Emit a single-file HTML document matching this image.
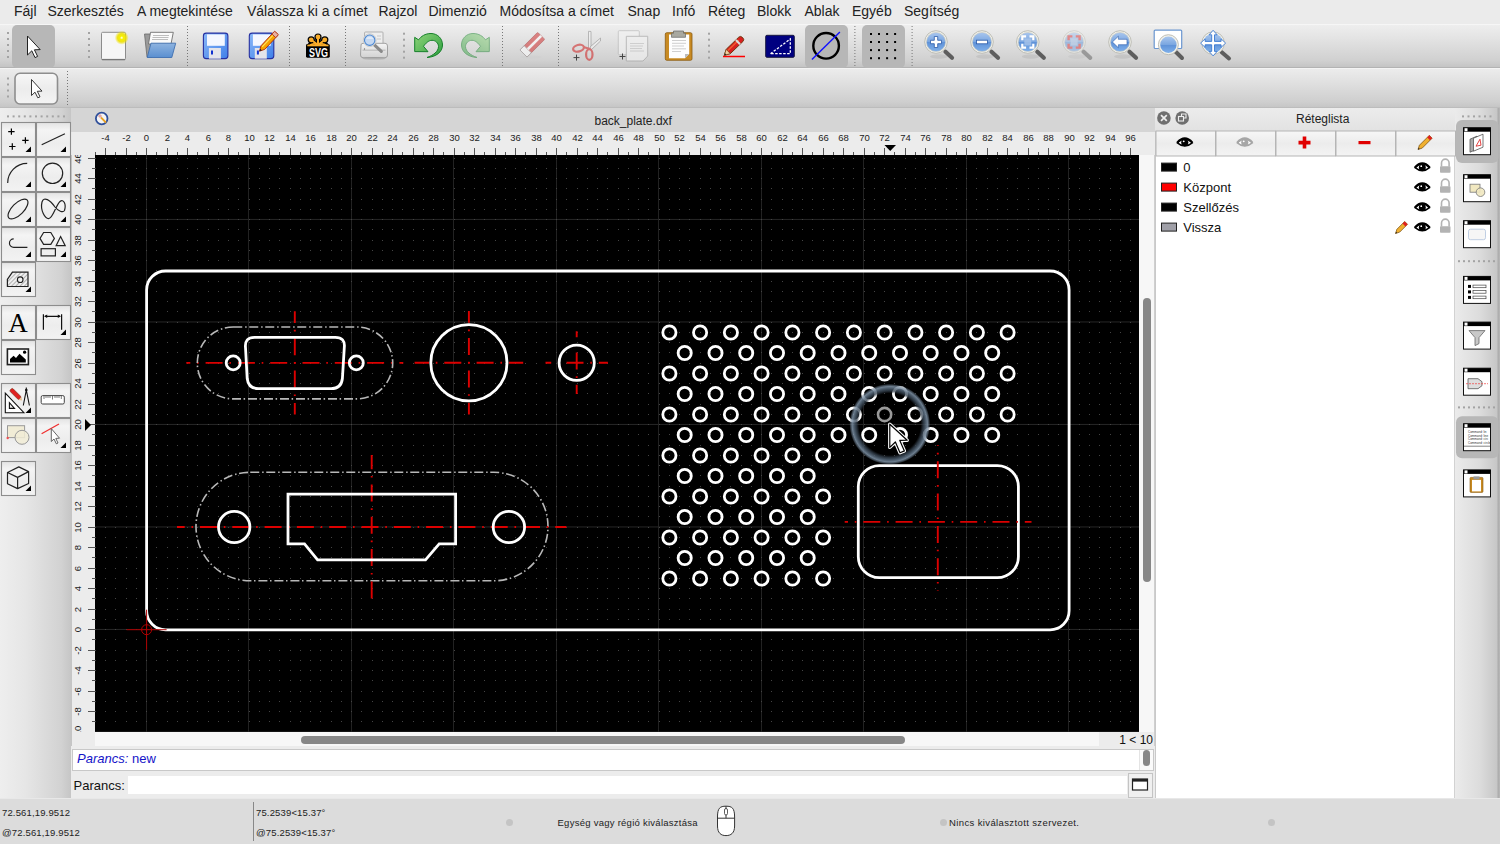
<!DOCTYPE html>
<html><head><meta charset="utf-8"><style>
*{box-sizing:border-box}
body{margin:0;width:1500px;height:844px;overflow:hidden;position:relative;font-family:"Liberation Sans",sans-serif;background:#e6e6e6;color:#222}
.a{position:absolute}
.menu span{position:absolute;top:3px;font-size:14px;color:#222;white-space:pre}
</style></head><body>
<!-- menubar -->
<div class="a menu" style="left:0;top:0;width:1500px;height:24px;background:#ebebeb">
<span style="left:14px">Fájl</span><span style="left:47.5px">Szerkesztés</span><span style="left:137px">A megtekintése</span><span style="left:247px">Válassza ki a címet</span><span style="left:378.5px">Rajzol</span><span style="left:428.5px">Dimenzió</span><span style="left:499.5px">Módosítsa a címet</span><span style="left:627.5px">Snap</span><span style="left:672px">Infó</span><span style="left:708px">Réteg</span><span style="left:757px">Blokk</span><span style="left:804.5px">Ablak</span><span style="left:852px">Egyéb</span><span style="left:904px">Segítség</span>
</div>
<!-- toolbar 1 -->
<div class="a" style="left:0;top:24px;width:1500px;height:44px;background:linear-gradient(#eeeeee,#e4e4e4 30%,#d0d0d0 85%,#c4c4c4);border-top:1px solid #f6f6f6;border-bottom:1px solid #b3b3b3"></div>
<!-- toolbar 2 -->
<div class="a" style="left:0;top:68px;width:1500px;height:40px;background:linear-gradient(#ececec,#e2e2e2 30%,#cfcfcf 85%,#c6c6c6);border-top:1px solid #f4f4f4;border-bottom:1px solid #bcbcbc"></div>
<!-- left dock -->
<div class="a" style="left:0;top:108px;width:72px;height:690px;background:linear-gradient(90deg,#eeeeee,#e6e6e6 35%,#d2d2d2 85%,#c4c4c4)"></div>
<!-- mdi window -->
<div class="a" style="left:71px;top:108px;width:1084px;height:24px;background:#d5d5d5"></div>
<div class="a" style="left:594.5px;top:113.5px;font-size:12px;color:#222">back_plate.dxf</div>
<div class="a" style="left:71px;top:132px;width:1084px;height:23px;background:#ececec"></div>
<div class="a" style="left:72px;top:155px;width:23px;height:591px;background:#ececec"></div>
<div class="a" style="left:1139px;top:155px;width:16px;height:591px;background:#f7f7f7;border-right:1px solid #cfcfcf"></div>
<div class="a" style="left:1142.7px;top:298px;width:8.6px;height:283.5px;background:#878787;border-radius:5px"></div>
<div class="a" style="left:95px;top:732px;width:1044px;height:14px;background:#f7f7f7"></div>
<div class="a" style="left:301px;top:736px;width:604px;height:8px;background:#878787;border-radius:4px"></div>
<div class="a" style="left:1099px;top:732px;width:55px;height:14px;background:#ececec"></div>
<div class="a" style="left:1100px;top:733px;width:53px;font-size:12px;text-align:right;color:#111;line-height:15px">1 &lt; 10</div>
<!-- command widget -->
<div class="a" style="left:71px;top:746px;width:1084px;height:52px;background:#ececec"></div>
<div class="a" style="left:72px;top:749px;width:1082px;height:22px;background:#fff;border:1px solid #c8c8c8"></div>
<div class="a" style="left:77px;top:750px;font-size:13px;color:#1414c8;line-height:17px"><i>Parancs:</i> new</div>
<div class="a" style="left:1139px;top:750px;width:14px;height:20px;background:#fafafa;border-left:1px solid #e4e4e4"></div>
<div class="a" style="left:1142.5px;top:750px;width:7.5px;height:16px;background:#878787;border-radius:4px"></div>
<div class="a" style="left:73.5px;top:778px;font-size:13px;color:#111">Parancs:</div>
<div class="a" style="left:128px;top:776px;width:999px;height:18px;background:#fff"></div>
<div class="a" style="left:1127.5px;top:772.5px;width:25px;height:25px;background:#f0f0f0;border:1px solid #c4c4c4"></div>
<!-- layer dock -->
<div class="a" style="left:1155px;top:108px;width:300px;height:690px;background:#fff;border-left:1px solid #c9c9c9"></div>
<div class="a" style="left:1155px;top:108px;width:300px;height:23px;background:linear-gradient(#ececec,#e2e2e2)"></div>
<div class="a" style="left:1296px;top:112px;font-size:12px;color:#222">Réteglista</div>
<!-- right toolbar -->
<div class="a" style="left:1455px;top:108px;width:45px;height:690px;background:linear-gradient(90deg,#ebebeb,#dcdcdc 55%,#c6c6c6 94%,#a9a9a9 95%,#b8b8b8)"></div><div class="a" style="left:1454px;top:131px;width:1px;height:667px;background:#d2d2d2"></div>
<!-- status bar -->
<div class="a" style="left:0;top:798px;width:1500px;height:46px;background:#dcdcdc;border-top:1px solid #e8e8e8"></div>
<div class="a" style="left:2px;top:807px;font-size:9.5px;letter-spacing:0.15px;color:#222">72.561,19.9512</div>
<div class="a" style="left:2px;top:827px;font-size:9.5px;letter-spacing:0.15px;color:#222">@72.561,19.9512</div>
<div class="a" style="left:253px;top:802px;width:1px;height:39px;background:#888"></div>
<div class="a" style="left:256px;top:807px;font-size:9.5px;letter-spacing:0.15px;color:#222">75.2539&lt;15.37°</div>
<div class="a" style="left:256px;top:827px;font-size:9.5px;letter-spacing:0.15px;color:#222">@75.2539&lt;15.37°</div>
<div class="a" style="left:557.5px;top:817px;font-size:9.5px;color:#222;letter-spacing:0.26px">Egység vagy régió kiválasztása</div>
<div class="a" style="left:949px;top:817px;font-size:9.5px;color:#222;letter-spacing:0.38px">Nincs kiválasztott szervezet.</div>
<div class="a" style="left:506px;top:819px;width:7px;height:7px;border-radius:50%;background:#c4c4c4"></div>
<div class="a" style="left:940px;top:819px;width:7px;height:7px;border-radius:50%;background:#c4c4c4"></div>
<div class="a" style="left:1268px;top:819px;width:7px;height:7px;border-radius:50%;background:#c4c4c4"></div>
<svg class="a" style="left:0;top:0" width="1500" height="844" viewBox="0 0 1500 844"><defs><clipPath id="cc"><rect x="95" y="155" width="1044" height="577"/></clipPath><radialGradient id="hl" cx="0.5" cy="0.5" r="0.5"><stop offset="0.76" stop-color="#2a3440" stop-opacity="0"/><stop offset="0.82" stop-color="#34414e" stop-opacity="0.75"/><stop offset="0.88" stop-color="#56687a" stop-opacity="0.85"/><stop offset="0.93" stop-color="#8094a8" stop-opacity="0.85"/><stop offset="0.97" stop-color="#6a7c8e" stop-opacity="0.5"/><stop offset="1" stop-color="#4a5a6a" stop-opacity="0"/></radialGradient></defs><g clip-path="url(#cc)"><rect x="95" y="155" width="1044" height="577" fill="#000"/><rect x="146" y="155" width="1" height="577" fill="#222"/><rect x="248" y="155" width="1" height="577" fill="#222"/><rect x="351" y="155" width="1" height="577" fill="#222"/><rect x="453" y="155" width="1" height="577" fill="#222"/><rect x="556" y="155" width="1" height="577" fill="#222"/><rect x="658" y="155" width="1" height="577" fill="#222"/><rect x="761" y="155" width="1" height="577" fill="#222"/><rect x="863" y="155" width="1" height="577" fill="#222"/><rect x="966" y="155" width="1" height="577" fill="#222"/><rect x="1068" y="155" width="1" height="577" fill="#222"/><rect x="95" y="731.45" width="1044" height="1" fill="#262626"/><rect x="95" y="628.95" width="1044" height="1" fill="#262626"/><rect x="95" y="526.45" width="1044" height="1" fill="#262626"/><rect x="95" y="423.95" width="1044" height="1" fill="#262626"/><rect x="95" y="321.45" width="1044" height="1" fill="#262626"/><rect x="95" y="218.95" width="1044" height="1" fill="#262626"/><path d="M95 721h1v1h-1zM95 711h1v1h-1zM95 701h1v1h-1zM95 691h1v1h-1zM95 680h1v1h-1zM95 670h1v1h-1zM95 660h1v1h-1zM95 650h1v1h-1zM95 639h1v1h-1zM95 629h1v1h-1zM95 619h1v1h-1zM95 609h1v1h-1zM95 598h1v1h-1zM95 588h1v1h-1zM95 578h1v1h-1zM95 568h1v1h-1zM95 557h1v1h-1zM95 547h1v1h-1zM95 537h1v1h-1zM95 527h1v1h-1zM95 516h1v1h-1zM95 506h1v1h-1zM95 496h1v1h-1zM95 486h1v1h-1zM95 475h1v1h-1zM95 465h1v1h-1zM95 455h1v1h-1zM95 445h1v1h-1zM95 434h1v1h-1zM95 424h1v1h-1zM95 414h1v1h-1zM95 404h1v1h-1zM95 393h1v1h-1zM95 383h1v1h-1zM95 373h1v1h-1zM95 363h1v1h-1zM95 352h1v1h-1zM95 342h1v1h-1zM95 332h1v1h-1zM95 322h1v1h-1zM95 311h1v1h-1zM95 301h1v1h-1zM95 291h1v1h-1zM95 281h1v1h-1zM95 270h1v1h-1zM95 260h1v1h-1zM95 250h1v1h-1zM95 240h1v1h-1zM95 229h1v1h-1zM95 219h1v1h-1zM95 209h1v1h-1zM95 199h1v1h-1zM95 188h1v1h-1zM95 178h1v1h-1zM95 168h1v1h-1zM95 158h1v1h-1zM105 721h1v1h-1zM105 711h1v1h-1zM105 701h1v1h-1zM105 691h1v1h-1zM105 680h1v1h-1zM105 670h1v1h-1zM105 660h1v1h-1zM105 650h1v1h-1zM105 639h1v1h-1zM105 629h1v1h-1zM105 619h1v1h-1zM105 609h1v1h-1zM105 598h1v1h-1zM105 588h1v1h-1zM105 578h1v1h-1zM105 568h1v1h-1zM105 557h1v1h-1zM105 547h1v1h-1zM105 537h1v1h-1zM105 527h1v1h-1zM105 516h1v1h-1zM105 506h1v1h-1zM105 496h1v1h-1zM105 486h1v1h-1zM105 475h1v1h-1zM105 465h1v1h-1zM105 455h1v1h-1zM105 445h1v1h-1zM105 434h1v1h-1zM105 424h1v1h-1zM105 414h1v1h-1zM105 404h1v1h-1zM105 393h1v1h-1zM105 383h1v1h-1zM105 373h1v1h-1zM105 363h1v1h-1zM105 352h1v1h-1zM105 342h1v1h-1zM105 332h1v1h-1zM105 322h1v1h-1zM105 311h1v1h-1zM105 301h1v1h-1zM105 291h1v1h-1zM105 281h1v1h-1zM105 270h1v1h-1zM105 260h1v1h-1zM105 250h1v1h-1zM105 240h1v1h-1zM105 229h1v1h-1zM105 219h1v1h-1zM105 209h1v1h-1zM105 199h1v1h-1zM105 188h1v1h-1zM105 178h1v1h-1zM105 168h1v1h-1zM105 158h1v1h-1zM115 721h1v1h-1zM115 711h1v1h-1zM115 701h1v1h-1zM115 691h1v1h-1zM115 680h1v1h-1zM115 670h1v1h-1zM115 660h1v1h-1zM115 650h1v1h-1zM115 639h1v1h-1zM115 629h1v1h-1zM115 619h1v1h-1zM115 609h1v1h-1zM115 598h1v1h-1zM115 588h1v1h-1zM115 578h1v1h-1zM115 568h1v1h-1zM115 557h1v1h-1zM115 547h1v1h-1zM115 537h1v1h-1zM115 527h1v1h-1zM115 516h1v1h-1zM115 506h1v1h-1zM115 496h1v1h-1zM115 486h1v1h-1zM115 475h1v1h-1zM115 465h1v1h-1zM115 455h1v1h-1zM115 445h1v1h-1zM115 434h1v1h-1zM115 424h1v1h-1zM115 414h1v1h-1zM115 404h1v1h-1zM115 393h1v1h-1zM115 383h1v1h-1zM115 373h1v1h-1zM115 363h1v1h-1zM115 352h1v1h-1zM115 342h1v1h-1zM115 332h1v1h-1zM115 322h1v1h-1zM115 311h1v1h-1zM115 301h1v1h-1zM115 291h1v1h-1zM115 281h1v1h-1zM115 270h1v1h-1zM115 260h1v1h-1zM115 250h1v1h-1zM115 240h1v1h-1zM115 229h1v1h-1zM115 219h1v1h-1zM115 209h1v1h-1zM115 199h1v1h-1zM115 188h1v1h-1zM115 178h1v1h-1zM115 168h1v1h-1zM115 158h1v1h-1zM126 721h1v1h-1zM126 711h1v1h-1zM126 701h1v1h-1zM126 691h1v1h-1zM126 680h1v1h-1zM126 670h1v1h-1zM126 660h1v1h-1zM126 650h1v1h-1zM126 639h1v1h-1zM126 629h1v1h-1zM126 619h1v1h-1zM126 609h1v1h-1zM126 598h1v1h-1zM126 588h1v1h-1zM126 578h1v1h-1zM126 568h1v1h-1zM126 557h1v1h-1zM126 547h1v1h-1zM126 537h1v1h-1zM126 527h1v1h-1zM126 516h1v1h-1zM126 506h1v1h-1zM126 496h1v1h-1zM126 486h1v1h-1zM126 475h1v1h-1zM126 465h1v1h-1zM126 455h1v1h-1zM126 445h1v1h-1zM126 434h1v1h-1zM126 424h1v1h-1zM126 414h1v1h-1zM126 404h1v1h-1zM126 393h1v1h-1zM126 383h1v1h-1zM126 373h1v1h-1zM126 363h1v1h-1zM126 352h1v1h-1zM126 342h1v1h-1zM126 332h1v1h-1zM126 322h1v1h-1zM126 311h1v1h-1zM126 301h1v1h-1zM126 291h1v1h-1zM126 281h1v1h-1zM126 270h1v1h-1zM126 260h1v1h-1zM126 250h1v1h-1zM126 240h1v1h-1zM126 229h1v1h-1zM126 219h1v1h-1zM126 209h1v1h-1zM126 199h1v1h-1zM126 188h1v1h-1zM126 178h1v1h-1zM126 168h1v1h-1zM126 158h1v1h-1zM136 721h1v1h-1zM136 711h1v1h-1zM136 701h1v1h-1zM136 691h1v1h-1zM136 680h1v1h-1zM136 670h1v1h-1zM136 660h1v1h-1zM136 650h1v1h-1zM136 639h1v1h-1zM136 629h1v1h-1zM136 619h1v1h-1zM136 609h1v1h-1zM136 598h1v1h-1zM136 588h1v1h-1zM136 578h1v1h-1zM136 568h1v1h-1zM136 557h1v1h-1zM136 547h1v1h-1zM136 537h1v1h-1zM136 527h1v1h-1zM136 516h1v1h-1zM136 506h1v1h-1zM136 496h1v1h-1zM136 486h1v1h-1zM136 475h1v1h-1zM136 465h1v1h-1zM136 455h1v1h-1zM136 445h1v1h-1zM136 434h1v1h-1zM136 424h1v1h-1zM136 414h1v1h-1zM136 404h1v1h-1zM136 393h1v1h-1zM136 383h1v1h-1zM136 373h1v1h-1zM136 363h1v1h-1zM136 352h1v1h-1zM136 342h1v1h-1zM136 332h1v1h-1zM136 322h1v1h-1zM136 311h1v1h-1zM136 301h1v1h-1zM136 291h1v1h-1zM136 281h1v1h-1zM136 270h1v1h-1zM136 260h1v1h-1zM136 250h1v1h-1zM136 240h1v1h-1zM136 229h1v1h-1zM136 219h1v1h-1zM136 209h1v1h-1zM136 199h1v1h-1zM136 188h1v1h-1zM136 178h1v1h-1zM136 168h1v1h-1zM136 158h1v1h-1zM146 721h1v1h-1zM146 711h1v1h-1zM146 701h1v1h-1zM146 691h1v1h-1zM146 680h1v1h-1zM146 670h1v1h-1zM146 660h1v1h-1zM146 650h1v1h-1zM146 639h1v1h-1zM146 629h1v1h-1zM146 619h1v1h-1zM146 609h1v1h-1zM146 598h1v1h-1zM146 588h1v1h-1zM146 578h1v1h-1zM146 568h1v1h-1zM146 557h1v1h-1zM146 547h1v1h-1zM146 537h1v1h-1zM146 527h1v1h-1zM146 516h1v1h-1zM146 506h1v1h-1zM146 496h1v1h-1zM146 486h1v1h-1zM146 475h1v1h-1zM146 465h1v1h-1zM146 455h1v1h-1zM146 445h1v1h-1zM146 434h1v1h-1zM146 424h1v1h-1zM146 414h1v1h-1zM146 404h1v1h-1zM146 393h1v1h-1zM146 383h1v1h-1zM146 373h1v1h-1zM146 363h1v1h-1zM146 352h1v1h-1zM146 342h1v1h-1zM146 332h1v1h-1zM146 322h1v1h-1zM146 311h1v1h-1zM146 301h1v1h-1zM146 291h1v1h-1zM146 281h1v1h-1zM146 270h1v1h-1zM146 260h1v1h-1zM146 250h1v1h-1zM146 240h1v1h-1zM146 229h1v1h-1zM146 219h1v1h-1zM146 209h1v1h-1zM146 199h1v1h-1zM146 188h1v1h-1zM146 178h1v1h-1zM146 168h1v1h-1zM146 158h1v1h-1zM156 721h1v1h-1zM156 711h1v1h-1zM156 701h1v1h-1zM156 691h1v1h-1zM156 680h1v1h-1zM156 670h1v1h-1zM156 660h1v1h-1zM156 650h1v1h-1zM156 639h1v1h-1zM156 629h1v1h-1zM156 619h1v1h-1zM156 609h1v1h-1zM156 598h1v1h-1zM156 588h1v1h-1zM156 578h1v1h-1zM156 568h1v1h-1zM156 557h1v1h-1zM156 547h1v1h-1zM156 537h1v1h-1zM156 527h1v1h-1zM156 516h1v1h-1zM156 506h1v1h-1zM156 496h1v1h-1zM156 486h1v1h-1zM156 475h1v1h-1zM156 465h1v1h-1zM156 455h1v1h-1zM156 445h1v1h-1zM156 434h1v1h-1zM156 424h1v1h-1zM156 414h1v1h-1zM156 404h1v1h-1zM156 393h1v1h-1zM156 383h1v1h-1zM156 373h1v1h-1zM156 363h1v1h-1zM156 352h1v1h-1zM156 342h1v1h-1zM156 332h1v1h-1zM156 322h1v1h-1zM156 311h1v1h-1zM156 301h1v1h-1zM156 291h1v1h-1zM156 281h1v1h-1zM156 270h1v1h-1zM156 260h1v1h-1zM156 250h1v1h-1zM156 240h1v1h-1zM156 229h1v1h-1zM156 219h1v1h-1zM156 209h1v1h-1zM156 199h1v1h-1zM156 188h1v1h-1zM156 178h1v1h-1zM156 168h1v1h-1zM156 158h1v1h-1zM167 721h1v1h-1zM167 711h1v1h-1zM167 701h1v1h-1zM167 691h1v1h-1zM167 680h1v1h-1zM167 670h1v1h-1zM167 660h1v1h-1zM167 650h1v1h-1zM167 639h1v1h-1zM167 629h1v1h-1zM167 619h1v1h-1zM167 609h1v1h-1zM167 598h1v1h-1zM167 588h1v1h-1zM167 578h1v1h-1zM167 568h1v1h-1zM167 557h1v1h-1zM167 547h1v1h-1zM167 537h1v1h-1zM167 527h1v1h-1zM167 516h1v1h-1zM167 506h1v1h-1zM167 496h1v1h-1zM167 486h1v1h-1zM167 475h1v1h-1zM167 465h1v1h-1zM167 455h1v1h-1zM167 445h1v1h-1zM167 434h1v1h-1zM167 424h1v1h-1zM167 414h1v1h-1zM167 404h1v1h-1zM167 393h1v1h-1zM167 383h1v1h-1zM167 373h1v1h-1zM167 363h1v1h-1zM167 352h1v1h-1zM167 342h1v1h-1zM167 332h1v1h-1zM167 322h1v1h-1zM167 311h1v1h-1zM167 301h1v1h-1zM167 291h1v1h-1zM167 281h1v1h-1zM167 270h1v1h-1zM167 260h1v1h-1zM167 250h1v1h-1zM167 240h1v1h-1zM167 229h1v1h-1zM167 219h1v1h-1zM167 209h1v1h-1zM167 199h1v1h-1zM167 188h1v1h-1zM167 178h1v1h-1zM167 168h1v1h-1zM167 158h1v1h-1zM177 721h1v1h-1zM177 711h1v1h-1zM177 701h1v1h-1zM177 691h1v1h-1zM177 680h1v1h-1zM177 670h1v1h-1zM177 660h1v1h-1zM177 650h1v1h-1zM177 639h1v1h-1zM177 629h1v1h-1zM177 619h1v1h-1zM177 609h1v1h-1zM177 598h1v1h-1zM177 588h1v1h-1zM177 578h1v1h-1zM177 568h1v1h-1zM177 557h1v1h-1zM177 547h1v1h-1zM177 537h1v1h-1zM177 527h1v1h-1zM177 516h1v1h-1zM177 506h1v1h-1zM177 496h1v1h-1zM177 486h1v1h-1zM177 475h1v1h-1zM177 465h1v1h-1zM177 455h1v1h-1zM177 445h1v1h-1zM177 434h1v1h-1zM177 424h1v1h-1zM177 414h1v1h-1zM177 404h1v1h-1zM177 393h1v1h-1zM177 383h1v1h-1zM177 373h1v1h-1zM177 363h1v1h-1zM177 352h1v1h-1zM177 342h1v1h-1zM177 332h1v1h-1zM177 322h1v1h-1zM177 311h1v1h-1zM177 301h1v1h-1zM177 291h1v1h-1zM177 281h1v1h-1zM177 270h1v1h-1zM177 260h1v1h-1zM177 250h1v1h-1zM177 240h1v1h-1zM177 229h1v1h-1zM177 219h1v1h-1zM177 209h1v1h-1zM177 199h1v1h-1zM177 188h1v1h-1zM177 178h1v1h-1zM177 168h1v1h-1zM177 158h1v1h-1zM187 721h1v1h-1zM187 711h1v1h-1zM187 701h1v1h-1zM187 691h1v1h-1zM187 680h1v1h-1zM187 670h1v1h-1zM187 660h1v1h-1zM187 650h1v1h-1zM187 639h1v1h-1zM187 629h1v1h-1zM187 619h1v1h-1zM187 609h1v1h-1zM187 598h1v1h-1zM187 588h1v1h-1zM187 578h1v1h-1zM187 568h1v1h-1zM187 557h1v1h-1zM187 547h1v1h-1zM187 537h1v1h-1zM187 527h1v1h-1zM187 516h1v1h-1zM187 506h1v1h-1zM187 496h1v1h-1zM187 486h1v1h-1zM187 475h1v1h-1zM187 465h1v1h-1zM187 455h1v1h-1zM187 445h1v1h-1zM187 434h1v1h-1zM187 424h1v1h-1zM187 414h1v1h-1zM187 404h1v1h-1zM187 393h1v1h-1zM187 383h1v1h-1zM187 373h1v1h-1zM187 363h1v1h-1zM187 352h1v1h-1zM187 342h1v1h-1zM187 332h1v1h-1zM187 322h1v1h-1zM187 311h1v1h-1zM187 301h1v1h-1zM187 291h1v1h-1zM187 281h1v1h-1zM187 270h1v1h-1zM187 260h1v1h-1zM187 250h1v1h-1zM187 240h1v1h-1zM187 229h1v1h-1zM187 219h1v1h-1zM187 209h1v1h-1zM187 199h1v1h-1zM187 188h1v1h-1zM187 178h1v1h-1zM187 168h1v1h-1zM187 158h1v1h-1zM197 721h1v1h-1zM197 711h1v1h-1zM197 701h1v1h-1zM197 691h1v1h-1zM197 680h1v1h-1zM197 670h1v1h-1zM197 660h1v1h-1zM197 650h1v1h-1zM197 639h1v1h-1zM197 629h1v1h-1zM197 619h1v1h-1zM197 609h1v1h-1zM197 598h1v1h-1zM197 588h1v1h-1zM197 578h1v1h-1zM197 568h1v1h-1zM197 557h1v1h-1zM197 547h1v1h-1zM197 537h1v1h-1zM197 527h1v1h-1zM197 516h1v1h-1zM197 506h1v1h-1zM197 496h1v1h-1zM197 486h1v1h-1zM197 475h1v1h-1zM197 465h1v1h-1zM197 455h1v1h-1zM197 445h1v1h-1zM197 434h1v1h-1zM197 424h1v1h-1zM197 414h1v1h-1zM197 404h1v1h-1zM197 393h1v1h-1zM197 383h1v1h-1zM197 373h1v1h-1zM197 363h1v1h-1zM197 352h1v1h-1zM197 342h1v1h-1zM197 332h1v1h-1zM197 322h1v1h-1zM197 311h1v1h-1zM197 301h1v1h-1zM197 291h1v1h-1zM197 281h1v1h-1zM197 270h1v1h-1zM197 260h1v1h-1zM197 250h1v1h-1zM197 240h1v1h-1zM197 229h1v1h-1zM197 219h1v1h-1zM197 209h1v1h-1zM197 199h1v1h-1zM197 188h1v1h-1zM197 178h1v1h-1zM197 168h1v1h-1zM197 158h1v1h-1zM208 721h1v1h-1zM208 711h1v1h-1zM208 701h1v1h-1zM208 691h1v1h-1zM208 680h1v1h-1zM208 670h1v1h-1zM208 660h1v1h-1zM208 650h1v1h-1zM208 639h1v1h-1zM208 629h1v1h-1zM208 619h1v1h-1zM208 609h1v1h-1zM208 598h1v1h-1zM208 588h1v1h-1zM208 578h1v1h-1zM208 568h1v1h-1zM208 557h1v1h-1zM208 547h1v1h-1zM208 537h1v1h-1zM208 527h1v1h-1zM208 516h1v1h-1zM208 506h1v1h-1zM208 496h1v1h-1zM208 486h1v1h-1zM208 475h1v1h-1zM208 465h1v1h-1zM208 455h1v1h-1zM208 445h1v1h-1zM208 434h1v1h-1zM208 424h1v1h-1zM208 414h1v1h-1zM208 404h1v1h-1zM208 393h1v1h-1zM208 383h1v1h-1zM208 373h1v1h-1zM208 363h1v1h-1zM208 352h1v1h-1zM208 342h1v1h-1zM208 332h1v1h-1zM208 322h1v1h-1zM208 311h1v1h-1zM208 301h1v1h-1zM208 291h1v1h-1zM208 281h1v1h-1zM208 270h1v1h-1zM208 260h1v1h-1zM208 250h1v1h-1zM208 240h1v1h-1zM208 229h1v1h-1zM208 219h1v1h-1zM208 209h1v1h-1zM208 199h1v1h-1zM208 188h1v1h-1zM208 178h1v1h-1zM208 168h1v1h-1zM208 158h1v1h-1zM218 721h1v1h-1zM218 711h1v1h-1zM218 701h1v1h-1zM218 691h1v1h-1zM218 680h1v1h-1zM218 670h1v1h-1zM218 660h1v1h-1zM218 650h1v1h-1zM218 639h1v1h-1zM218 629h1v1h-1zM218 619h1v1h-1zM218 609h1v1h-1zM218 598h1v1h-1zM218 588h1v1h-1zM218 578h1v1h-1zM218 568h1v1h-1zM218 557h1v1h-1zM218 547h1v1h-1zM218 537h1v1h-1zM218 527h1v1h-1zM218 516h1v1h-1zM218 506h1v1h-1zM218 496h1v1h-1zM218 486h1v1h-1zM218 475h1v1h-1zM218 465h1v1h-1zM218 455h1v1h-1zM218 445h1v1h-1zM218 434h1v1h-1zM218 424h1v1h-1zM218 414h1v1h-1zM218 404h1v1h-1zM218 393h1v1h-1zM218 383h1v1h-1zM218 373h1v1h-1zM218 363h1v1h-1zM218 352h1v1h-1zM218 342h1v1h-1zM218 332h1v1h-1zM218 322h1v1h-1zM218 311h1v1h-1zM218 301h1v1h-1zM218 291h1v1h-1zM218 281h1v1h-1zM218 270h1v1h-1zM218 260h1v1h-1zM218 250h1v1h-1zM218 240h1v1h-1zM218 229h1v1h-1zM218 219h1v1h-1zM218 209h1v1h-1zM218 199h1v1h-1zM218 188h1v1h-1zM218 178h1v1h-1zM218 168h1v1h-1zM218 158h1v1h-1zM228 721h1v1h-1zM228 711h1v1h-1zM228 701h1v1h-1zM228 691h1v1h-1zM228 680h1v1h-1zM228 670h1v1h-1zM228 660h1v1h-1zM228 650h1v1h-1zM228 639h1v1h-1zM228 629h1v1h-1zM228 619h1v1h-1zM228 609h1v1h-1zM228 598h1v1h-1zM228 588h1v1h-1zM228 578h1v1h-1zM228 568h1v1h-1zM228 557h1v1h-1zM228 547h1v1h-1zM228 537h1v1h-1zM228 527h1v1h-1zM228 516h1v1h-1zM228 506h1v1h-1zM228 496h1v1h-1zM228 486h1v1h-1zM228 475h1v1h-1zM228 465h1v1h-1zM228 455h1v1h-1zM228 445h1v1h-1zM228 434h1v1h-1zM228 424h1v1h-1zM228 414h1v1h-1zM228 404h1v1h-1zM228 393h1v1h-1zM228 383h1v1h-1zM228 373h1v1h-1zM228 363h1v1h-1zM228 352h1v1h-1zM228 342h1v1h-1zM228 332h1v1h-1zM228 322h1v1h-1zM228 311h1v1h-1zM228 301h1v1h-1zM228 291h1v1h-1zM228 281h1v1h-1zM228 270h1v1h-1zM228 260h1v1h-1zM228 250h1v1h-1zM228 240h1v1h-1zM228 229h1v1h-1zM228 219h1v1h-1zM228 209h1v1h-1zM228 199h1v1h-1zM228 188h1v1h-1zM228 178h1v1h-1zM228 168h1v1h-1zM228 158h1v1h-1zM238 721h1v1h-1zM238 711h1v1h-1zM238 701h1v1h-1zM238 691h1v1h-1zM238 680h1v1h-1zM238 670h1v1h-1zM238 660h1v1h-1zM238 650h1v1h-1zM238 639h1v1h-1zM238 629h1v1h-1zM238 619h1v1h-1zM238 609h1v1h-1zM238 598h1v1h-1zM238 588h1v1h-1zM238 578h1v1h-1zM238 568h1v1h-1zM238 557h1v1h-1zM238 547h1v1h-1zM238 537h1v1h-1zM238 527h1v1h-1zM238 516h1v1h-1zM238 506h1v1h-1zM238 496h1v1h-1zM238 486h1v1h-1zM238 475h1v1h-1zM238 465h1v1h-1zM238 455h1v1h-1zM238 445h1v1h-1zM238 434h1v1h-1zM238 424h1v1h-1zM238 414h1v1h-1zM238 404h1v1h-1zM238 393h1v1h-1zM238 383h1v1h-1zM238 373h1v1h-1zM238 363h1v1h-1zM238 352h1v1h-1zM238 342h1v1h-1zM238 332h1v1h-1zM238 322h1v1h-1zM238 311h1v1h-1zM238 301h1v1h-1zM238 291h1v1h-1zM238 281h1v1h-1zM238 270h1v1h-1zM238 260h1v1h-1zM238 250h1v1h-1zM238 240h1v1h-1zM238 229h1v1h-1zM238 219h1v1h-1zM238 209h1v1h-1zM238 199h1v1h-1zM238 188h1v1h-1zM238 178h1v1h-1zM238 168h1v1h-1zM238 158h1v1h-1zM249 721h1v1h-1zM249 711h1v1h-1zM249 701h1v1h-1zM249 691h1v1h-1zM249 680h1v1h-1zM249 670h1v1h-1zM249 660h1v1h-1zM249 650h1v1h-1zM249 639h1v1h-1zM249 629h1v1h-1zM249 619h1v1h-1zM249 609h1v1h-1zM249 598h1v1h-1zM249 588h1v1h-1zM249 578h1v1h-1zM249 568h1v1h-1zM249 557h1v1h-1zM249 547h1v1h-1zM249 537h1v1h-1zM249 527h1v1h-1zM249 516h1v1h-1zM249 506h1v1h-1zM249 496h1v1h-1zM249 486h1v1h-1zM249 475h1v1h-1zM249 465h1v1h-1zM249 455h1v1h-1zM249 445h1v1h-1zM249 434h1v1h-1zM249 424h1v1h-1zM249 414h1v1h-1zM249 404h1v1h-1zM249 393h1v1h-1zM249 383h1v1h-1zM249 373h1v1h-1zM249 363h1v1h-1zM249 352h1v1h-1zM249 342h1v1h-1zM249 332h1v1h-1zM249 322h1v1h-1zM249 311h1v1h-1zM249 301h1v1h-1zM249 291h1v1h-1zM249 281h1v1h-1zM249 270h1v1h-1zM249 260h1v1h-1zM249 250h1v1h-1zM249 240h1v1h-1zM249 229h1v1h-1zM249 219h1v1h-1zM249 209h1v1h-1zM249 199h1v1h-1zM249 188h1v1h-1zM249 178h1v1h-1zM249 168h1v1h-1zM249 158h1v1h-1zM259 721h1v1h-1zM259 711h1v1h-1zM259 701h1v1h-1zM259 691h1v1h-1zM259 680h1v1h-1zM259 670h1v1h-1zM259 660h1v1h-1zM259 650h1v1h-1zM259 639h1v1h-1zM259 629h1v1h-1zM259 619h1v1h-1zM259 609h1v1h-1zM259 598h1v1h-1zM259 588h1v1h-1zM259 578h1v1h-1zM259 568h1v1h-1zM259 557h1v1h-1zM259 547h1v1h-1zM259 537h1v1h-1zM259 527h1v1h-1zM259 516h1v1h-1zM259 506h1v1h-1zM259 496h1v1h-1zM259 486h1v1h-1zM259 475h1v1h-1zM259 465h1v1h-1zM259 455h1v1h-1zM259 445h1v1h-1zM259 434h1v1h-1zM259 424h1v1h-1zM259 414h1v1h-1zM259 404h1v1h-1zM259 393h1v1h-1zM259 383h1v1h-1zM259 373h1v1h-1zM259 363h1v1h-1zM259 352h1v1h-1zM259 342h1v1h-1zM259 332h1v1h-1zM259 322h1v1h-1zM259 311h1v1h-1zM259 301h1v1h-1zM259 291h1v1h-1zM259 281h1v1h-1zM259 270h1v1h-1zM259 260h1v1h-1zM259 250h1v1h-1zM259 240h1v1h-1zM259 229h1v1h-1zM259 219h1v1h-1zM259 209h1v1h-1zM259 199h1v1h-1zM259 188h1v1h-1zM259 178h1v1h-1zM259 168h1v1h-1zM259 158h1v1h-1zM269 721h1v1h-1zM269 711h1v1h-1zM269 701h1v1h-1zM269 691h1v1h-1zM269 680h1v1h-1zM269 670h1v1h-1zM269 660h1v1h-1zM269 650h1v1h-1zM269 639h1v1h-1zM269 629h1v1h-1zM269 619h1v1h-1zM269 609h1v1h-1zM269 598h1v1h-1zM269 588h1v1h-1zM269 578h1v1h-1zM269 568h1v1h-1zM269 557h1v1h-1zM269 547h1v1h-1zM269 537h1v1h-1zM269 527h1v1h-1zM269 516h1v1h-1zM269 506h1v1h-1zM269 496h1v1h-1zM269 486h1v1h-1zM269 475h1v1h-1zM269 465h1v1h-1zM269 455h1v1h-1zM269 445h1v1h-1zM269 434h1v1h-1zM269 424h1v1h-1zM269 414h1v1h-1zM269 404h1v1h-1zM269 393h1v1h-1zM269 383h1v1h-1zM269 373h1v1h-1zM269 363h1v1h-1zM269 352h1v1h-1zM269 342h1v1h-1zM269 332h1v1h-1zM269 322h1v1h-1zM269 311h1v1h-1zM269 301h1v1h-1zM269 291h1v1h-1zM269 281h1v1h-1zM269 270h1v1h-1zM269 260h1v1h-1zM269 250h1v1h-1zM269 240h1v1h-1zM269 229h1v1h-1zM269 219h1v1h-1zM269 209h1v1h-1zM269 199h1v1h-1zM269 188h1v1h-1zM269 178h1v1h-1zM269 168h1v1h-1zM269 158h1v1h-1zM279 721h1v1h-1zM279 711h1v1h-1zM279 701h1v1h-1zM279 691h1v1h-1zM279 680h1v1h-1zM279 670h1v1h-1zM279 660h1v1h-1zM279 650h1v1h-1zM279 639h1v1h-1zM279 629h1v1h-1zM279 619h1v1h-1zM279 609h1v1h-1zM279 598h1v1h-1zM279 588h1v1h-1zM279 578h1v1h-1zM279 568h1v1h-1zM279 557h1v1h-1zM279 547h1v1h-1zM279 537h1v1h-1zM279 527h1v1h-1zM279 516h1v1h-1zM279 506h1v1h-1zM279 496h1v1h-1zM279 486h1v1h-1zM279 475h1v1h-1zM279 465h1v1h-1zM279 455h1v1h-1zM279 445h1v1h-1zM279 434h1v1h-1zM279 424h1v1h-1zM279 414h1v1h-1zM279 404h1v1h-1zM279 393h1v1h-1zM279 383h1v1h-1zM279 373h1v1h-1zM279 363h1v1h-1zM279 352h1v1h-1zM279 342h1v1h-1zM279 332h1v1h-1zM279 322h1v1h-1zM279 311h1v1h-1zM279 301h1v1h-1zM279 291h1v1h-1zM279 281h1v1h-1zM279 270h1v1h-1zM279 260h1v1h-1zM279 250h1v1h-1zM279 240h1v1h-1zM279 229h1v1h-1zM279 219h1v1h-1zM279 209h1v1h-1zM279 199h1v1h-1zM279 188h1v1h-1zM279 178h1v1h-1zM279 168h1v1h-1zM279 158h1v1h-1zM290 721h1v1h-1zM290 711h1v1h-1zM290 701h1v1h-1zM290 691h1v1h-1zM290 680h1v1h-1zM290 670h1v1h-1zM290 660h1v1h-1zM290 650h1v1h-1zM290 639h1v1h-1zM290 629h1v1h-1zM290 619h1v1h-1zM290 609h1v1h-1zM290 598h1v1h-1zM290 588h1v1h-1zM290 578h1v1h-1zM290 568h1v1h-1zM290 557h1v1h-1zM290 547h1v1h-1zM290 537h1v1h-1zM290 527h1v1h-1zM290 516h1v1h-1zM290 506h1v1h-1zM290 496h1v1h-1zM290 486h1v1h-1zM290 475h1v1h-1zM290 465h1v1h-1zM290 455h1v1h-1zM290 445h1v1h-1zM290 434h1v1h-1zM290 424h1v1h-1zM290 414h1v1h-1zM290 404h1v1h-1zM290 393h1v1h-1zM290 383h1v1h-1zM290 373h1v1h-1zM290 363h1v1h-1zM290 352h1v1h-1zM290 342h1v1h-1zM290 332h1v1h-1zM290 322h1v1h-1zM290 311h1v1h-1zM290 301h1v1h-1zM290 291h1v1h-1zM290 281h1v1h-1zM290 270h1v1h-1zM290 260h1v1h-1zM290 250h1v1h-1zM290 240h1v1h-1zM290 229h1v1h-1zM290 219h1v1h-1zM290 209h1v1h-1zM290 199h1v1h-1zM290 188h1v1h-1zM290 178h1v1h-1zM290 168h1v1h-1zM290 158h1v1h-1zM300 721h1v1h-1zM300 711h1v1h-1zM300 701h1v1h-1zM300 691h1v1h-1zM300 680h1v1h-1zM300 670h1v1h-1zM300 660h1v1h-1zM300 650h1v1h-1zM300 639h1v1h-1zM300 629h1v1h-1zM300 619h1v1h-1zM300 609h1v1h-1zM300 598h1v1h-1zM300 588h1v1h-1zM300 578h1v1h-1zM300 568h1v1h-1zM300 557h1v1h-1zM300 547h1v1h-1zM300 537h1v1h-1zM300 527h1v1h-1zM300 516h1v1h-1zM300 506h1v1h-1zM300 496h1v1h-1zM300 486h1v1h-1zM300 475h1v1h-1zM300 465h1v1h-1zM300 455h1v1h-1zM300 445h1v1h-1zM300 434h1v1h-1zM300 424h1v1h-1zM300 414h1v1h-1zM300 404h1v1h-1zM300 393h1v1h-1zM300 383h1v1h-1zM300 373h1v1h-1zM300 363h1v1h-1zM300 352h1v1h-1zM300 342h1v1h-1zM300 332h1v1h-1zM300 322h1v1h-1zM300 311h1v1h-1zM300 301h1v1h-1zM300 291h1v1h-1zM300 281h1v1h-1zM300 270h1v1h-1zM300 260h1v1h-1zM300 250h1v1h-1zM300 240h1v1h-1zM300 229h1v1h-1zM300 219h1v1h-1zM300 209h1v1h-1zM300 199h1v1h-1zM300 188h1v1h-1zM300 178h1v1h-1zM300 168h1v1h-1zM300 158h1v1h-1zM310 721h1v1h-1zM310 711h1v1h-1zM310 701h1v1h-1zM310 691h1v1h-1zM310 680h1v1h-1zM310 670h1v1h-1zM310 660h1v1h-1zM310 650h1v1h-1zM310 639h1v1h-1zM310 629h1v1h-1zM310 619h1v1h-1zM310 609h1v1h-1zM310 598h1v1h-1zM310 588h1v1h-1zM310 578h1v1h-1zM310 568h1v1h-1zM310 557h1v1h-1zM310 547h1v1h-1zM310 537h1v1h-1zM310 527h1v1h-1zM310 516h1v1h-1zM310 506h1v1h-1zM310 496h1v1h-1zM310 486h1v1h-1zM310 475h1v1h-1zM310 465h1v1h-1zM310 455h1v1h-1zM310 445h1v1h-1zM310 434h1v1h-1zM310 424h1v1h-1zM310 414h1v1h-1zM310 404h1v1h-1zM310 393h1v1h-1zM310 383h1v1h-1zM310 373h1v1h-1zM310 363h1v1h-1zM310 352h1v1h-1zM310 342h1v1h-1zM310 332h1v1h-1zM310 322h1v1h-1zM310 311h1v1h-1zM310 301h1v1h-1zM310 291h1v1h-1zM310 281h1v1h-1zM310 270h1v1h-1zM310 260h1v1h-1zM310 250h1v1h-1zM310 240h1v1h-1zM310 229h1v1h-1zM310 219h1v1h-1zM310 209h1v1h-1zM310 199h1v1h-1zM310 188h1v1h-1zM310 178h1v1h-1zM310 168h1v1h-1zM310 158h1v1h-1zM320 721h1v1h-1zM320 711h1v1h-1zM320 701h1v1h-1zM320 691h1v1h-1zM320 680h1v1h-1zM320 670h1v1h-1zM320 660h1v1h-1zM320 650h1v1h-1zM320 639h1v1h-1zM320 629h1v1h-1zM320 619h1v1h-1zM320 609h1v1h-1zM320 598h1v1h-1zM320 588h1v1h-1zM320 578h1v1h-1zM320 568h1v1h-1zM320 557h1v1h-1zM320 547h1v1h-1zM320 537h1v1h-1zM320 527h1v1h-1zM320 516h1v1h-1zM320 506h1v1h-1zM320 496h1v1h-1zM320 486h1v1h-1zM320 475h1v1h-1zM320 465h1v1h-1zM320 455h1v1h-1zM320 445h1v1h-1zM320 434h1v1h-1zM320 424h1v1h-1zM320 414h1v1h-1zM320 404h1v1h-1zM320 393h1v1h-1zM320 383h1v1h-1zM320 373h1v1h-1zM320 363h1v1h-1zM320 352h1v1h-1zM320 342h1v1h-1zM320 332h1v1h-1zM320 322h1v1h-1zM320 311h1v1h-1zM320 301h1v1h-1zM320 291h1v1h-1zM320 281h1v1h-1zM320 270h1v1h-1zM320 260h1v1h-1zM320 250h1v1h-1zM320 240h1v1h-1zM320 229h1v1h-1zM320 219h1v1h-1zM320 209h1v1h-1zM320 199h1v1h-1zM320 188h1v1h-1zM320 178h1v1h-1zM320 168h1v1h-1zM320 158h1v1h-1zM331 721h1v1h-1zM331 711h1v1h-1zM331 701h1v1h-1zM331 691h1v1h-1zM331 680h1v1h-1zM331 670h1v1h-1zM331 660h1v1h-1zM331 650h1v1h-1zM331 639h1v1h-1zM331 629h1v1h-1zM331 619h1v1h-1zM331 609h1v1h-1zM331 598h1v1h-1zM331 588h1v1h-1zM331 578h1v1h-1zM331 568h1v1h-1zM331 557h1v1h-1zM331 547h1v1h-1zM331 537h1v1h-1zM331 527h1v1h-1zM331 516h1v1h-1zM331 506h1v1h-1zM331 496h1v1h-1zM331 486h1v1h-1zM331 475h1v1h-1zM331 465h1v1h-1zM331 455h1v1h-1zM331 445h1v1h-1zM331 434h1v1h-1zM331 424h1v1h-1zM331 414h1v1h-1zM331 404h1v1h-1zM331 393h1v1h-1zM331 383h1v1h-1zM331 373h1v1h-1zM331 363h1v1h-1zM331 352h1v1h-1zM331 342h1v1h-1zM331 332h1v1h-1zM331 322h1v1h-1zM331 311h1v1h-1zM331 301h1v1h-1zM331 291h1v1h-1zM331 281h1v1h-1zM331 270h1v1h-1zM331 260h1v1h-1zM331 250h1v1h-1zM331 240h1v1h-1zM331 229h1v1h-1zM331 219h1v1h-1zM331 209h1v1h-1zM331 199h1v1h-1zM331 188h1v1h-1zM331 178h1v1h-1zM331 168h1v1h-1zM331 158h1v1h-1zM341 721h1v1h-1zM341 711h1v1h-1zM341 701h1v1h-1zM341 691h1v1h-1zM341 680h1v1h-1zM341 670h1v1h-1zM341 660h1v1h-1zM341 650h1v1h-1zM341 639h1v1h-1zM341 629h1v1h-1zM341 619h1v1h-1zM341 609h1v1h-1zM341 598h1v1h-1zM341 588h1v1h-1zM341 578h1v1h-1zM341 568h1v1h-1zM341 557h1v1h-1zM341 547h1v1h-1zM341 537h1v1h-1zM341 527h1v1h-1zM341 516h1v1h-1zM341 506h1v1h-1zM341 496h1v1h-1zM341 486h1v1h-1zM341 475h1v1h-1zM341 465h1v1h-1zM341 455h1v1h-1zM341 445h1v1h-1zM341 434h1v1h-1zM341 424h1v1h-1zM341 414h1v1h-1zM341 404h1v1h-1zM341 393h1v1h-1zM341 383h1v1h-1zM341 373h1v1h-1zM341 363h1v1h-1zM341 352h1v1h-1zM341 342h1v1h-1zM341 332h1v1h-1zM341 322h1v1h-1zM341 311h1v1h-1zM341 301h1v1h-1zM341 291h1v1h-1zM341 281h1v1h-1zM341 270h1v1h-1zM341 260h1v1h-1zM341 250h1v1h-1zM341 240h1v1h-1zM341 229h1v1h-1zM341 219h1v1h-1zM341 209h1v1h-1zM341 199h1v1h-1zM341 188h1v1h-1zM341 178h1v1h-1zM341 168h1v1h-1zM341 158h1v1h-1zM351 721h1v1h-1zM351 711h1v1h-1zM351 701h1v1h-1zM351 691h1v1h-1zM351 680h1v1h-1zM351 670h1v1h-1zM351 660h1v1h-1zM351 650h1v1h-1zM351 639h1v1h-1zM351 629h1v1h-1zM351 619h1v1h-1zM351 609h1v1h-1zM351 598h1v1h-1zM351 588h1v1h-1zM351 578h1v1h-1zM351 568h1v1h-1zM351 557h1v1h-1zM351 547h1v1h-1zM351 537h1v1h-1zM351 527h1v1h-1zM351 516h1v1h-1zM351 506h1v1h-1zM351 496h1v1h-1zM351 486h1v1h-1zM351 475h1v1h-1zM351 465h1v1h-1zM351 455h1v1h-1zM351 445h1v1h-1zM351 434h1v1h-1zM351 424h1v1h-1zM351 414h1v1h-1zM351 404h1v1h-1zM351 393h1v1h-1zM351 383h1v1h-1zM351 373h1v1h-1zM351 363h1v1h-1zM351 352h1v1h-1zM351 342h1v1h-1zM351 332h1v1h-1zM351 322h1v1h-1zM351 311h1v1h-1zM351 301h1v1h-1zM351 291h1v1h-1zM351 281h1v1h-1zM351 270h1v1h-1zM351 260h1v1h-1zM351 250h1v1h-1zM351 240h1v1h-1zM351 229h1v1h-1zM351 219h1v1h-1zM351 209h1v1h-1zM351 199h1v1h-1zM351 188h1v1h-1zM351 178h1v1h-1zM351 168h1v1h-1zM351 158h1v1h-1zM361 721h1v1h-1zM361 711h1v1h-1zM361 701h1v1h-1zM361 691h1v1h-1zM361 680h1v1h-1zM361 670h1v1h-1zM361 660h1v1h-1zM361 650h1v1h-1zM361 639h1v1h-1zM361 629h1v1h-1zM361 619h1v1h-1zM361 609h1v1h-1zM361 598h1v1h-1zM361 588h1v1h-1zM361 578h1v1h-1zM361 568h1v1h-1zM361 557h1v1h-1zM361 547h1v1h-1zM361 537h1v1h-1zM361 527h1v1h-1zM361 516h1v1h-1zM361 506h1v1h-1zM361 496h1v1h-1zM361 486h1v1h-1zM361 475h1v1h-1zM361 465h1v1h-1zM361 455h1v1h-1zM361 445h1v1h-1zM361 434h1v1h-1zM361 424h1v1h-1zM361 414h1v1h-1zM361 404h1v1h-1zM361 393h1v1h-1zM361 383h1v1h-1zM361 373h1v1h-1zM361 363h1v1h-1zM361 352h1v1h-1zM361 342h1v1h-1zM361 332h1v1h-1zM361 322h1v1h-1zM361 311h1v1h-1zM361 301h1v1h-1zM361 291h1v1h-1zM361 281h1v1h-1zM361 270h1v1h-1zM361 260h1v1h-1zM361 250h1v1h-1zM361 240h1v1h-1zM361 229h1v1h-1zM361 219h1v1h-1zM361 209h1v1h-1zM361 199h1v1h-1zM361 188h1v1h-1zM361 178h1v1h-1zM361 168h1v1h-1zM361 158h1v1h-1zM372 721h1v1h-1zM372 711h1v1h-1zM372 701h1v1h-1zM372 691h1v1h-1zM372 680h1v1h-1zM372 670h1v1h-1zM372 660h1v1h-1zM372 650h1v1h-1zM372 639h1v1h-1zM372 629h1v1h-1zM372 619h1v1h-1zM372 609h1v1h-1zM372 598h1v1h-1zM372 588h1v1h-1zM372 578h1v1h-1zM372 568h1v1h-1zM372 557h1v1h-1zM372 547h1v1h-1zM372 537h1v1h-1zM372 527h1v1h-1zM372 516h1v1h-1zM372 506h1v1h-1zM372 496h1v1h-1zM372 486h1v1h-1zM372 475h1v1h-1zM372 465h1v1h-1zM372 455h1v1h-1zM372 445h1v1h-1zM372 434h1v1h-1zM372 424h1v1h-1zM372 414h1v1h-1zM372 404h1v1h-1zM372 393h1v1h-1zM372 383h1v1h-1zM372 373h1v1h-1zM372 363h1v1h-1zM372 352h1v1h-1zM372 342h1v1h-1zM372 332h1v1h-1zM372 322h1v1h-1zM372 311h1v1h-1zM372 301h1v1h-1zM372 291h1v1h-1zM372 281h1v1h-1zM372 270h1v1h-1zM372 260h1v1h-1zM372 250h1v1h-1zM372 240h1v1h-1zM372 229h1v1h-1zM372 219h1v1h-1zM372 209h1v1h-1zM372 199h1v1h-1zM372 188h1v1h-1zM372 178h1v1h-1zM372 168h1v1h-1zM372 158h1v1h-1zM382 721h1v1h-1zM382 711h1v1h-1zM382 701h1v1h-1zM382 691h1v1h-1zM382 680h1v1h-1zM382 670h1v1h-1zM382 660h1v1h-1zM382 650h1v1h-1zM382 639h1v1h-1zM382 629h1v1h-1zM382 619h1v1h-1zM382 609h1v1h-1zM382 598h1v1h-1zM382 588h1v1h-1zM382 578h1v1h-1zM382 568h1v1h-1zM382 557h1v1h-1zM382 547h1v1h-1zM382 537h1v1h-1zM382 527h1v1h-1zM382 516h1v1h-1zM382 506h1v1h-1zM382 496h1v1h-1zM382 486h1v1h-1zM382 475h1v1h-1zM382 465h1v1h-1zM382 455h1v1h-1zM382 445h1v1h-1zM382 434h1v1h-1zM382 424h1v1h-1zM382 414h1v1h-1zM382 404h1v1h-1zM382 393h1v1h-1zM382 383h1v1h-1zM382 373h1v1h-1zM382 363h1v1h-1zM382 352h1v1h-1zM382 342h1v1h-1zM382 332h1v1h-1zM382 322h1v1h-1zM382 311h1v1h-1zM382 301h1v1h-1zM382 291h1v1h-1zM382 281h1v1h-1zM382 270h1v1h-1zM382 260h1v1h-1zM382 250h1v1h-1zM382 240h1v1h-1zM382 229h1v1h-1zM382 219h1v1h-1zM382 209h1v1h-1zM382 199h1v1h-1zM382 188h1v1h-1zM382 178h1v1h-1zM382 168h1v1h-1zM382 158h1v1h-1zM392 721h1v1h-1zM392 711h1v1h-1zM392 701h1v1h-1zM392 691h1v1h-1zM392 680h1v1h-1zM392 670h1v1h-1zM392 660h1v1h-1zM392 650h1v1h-1zM392 639h1v1h-1zM392 629h1v1h-1zM392 619h1v1h-1zM392 609h1v1h-1zM392 598h1v1h-1zM392 588h1v1h-1zM392 578h1v1h-1zM392 568h1v1h-1zM392 557h1v1h-1zM392 547h1v1h-1zM392 537h1v1h-1zM392 527h1v1h-1zM392 516h1v1h-1zM392 506h1v1h-1zM392 496h1v1h-1zM392 486h1v1h-1zM392 475h1v1h-1zM392 465h1v1h-1zM392 455h1v1h-1zM392 445h1v1h-1zM392 434h1v1h-1zM392 424h1v1h-1zM392 414h1v1h-1zM392 404h1v1h-1zM392 393h1v1h-1zM392 383h1v1h-1zM392 373h1v1h-1zM392 363h1v1h-1zM392 352h1v1h-1zM392 342h1v1h-1zM392 332h1v1h-1zM392 322h1v1h-1zM392 311h1v1h-1zM392 301h1v1h-1zM392 291h1v1h-1zM392 281h1v1h-1zM392 270h1v1h-1zM392 260h1v1h-1zM392 250h1v1h-1zM392 240h1v1h-1zM392 229h1v1h-1zM392 219h1v1h-1zM392 209h1v1h-1zM392 199h1v1h-1zM392 188h1v1h-1zM392 178h1v1h-1zM392 168h1v1h-1zM392 158h1v1h-1zM402 721h1v1h-1zM402 711h1v1h-1zM402 701h1v1h-1zM402 691h1v1h-1zM402 680h1v1h-1zM402 670h1v1h-1zM402 660h1v1h-1zM402 650h1v1h-1zM402 639h1v1h-1zM402 629h1v1h-1zM402 619h1v1h-1zM402 609h1v1h-1zM402 598h1v1h-1zM402 588h1v1h-1zM402 578h1v1h-1zM402 568h1v1h-1zM402 557h1v1h-1zM402 547h1v1h-1zM402 537h1v1h-1zM402 527h1v1h-1zM402 516h1v1h-1zM402 506h1v1h-1zM402 496h1v1h-1zM402 486h1v1h-1zM402 475h1v1h-1zM402 465h1v1h-1zM402 455h1v1h-1zM402 445h1v1h-1zM402 434h1v1h-1zM402 424h1v1h-1zM402 414h1v1h-1zM402 404h1v1h-1zM402 393h1v1h-1zM402 383h1v1h-1zM402 373h1v1h-1zM402 363h1v1h-1zM402 352h1v1h-1zM402 342h1v1h-1zM402 332h1v1h-1zM402 322h1v1h-1zM402 311h1v1h-1zM402 301h1v1h-1zM402 291h1v1h-1zM402 281h1v1h-1zM402 270h1v1h-1zM402 260h1v1h-1zM402 250h1v1h-1zM402 240h1v1h-1zM402 229h1v1h-1zM402 219h1v1h-1zM402 209h1v1h-1zM402 199h1v1h-1zM402 188h1v1h-1zM402 178h1v1h-1zM402 168h1v1h-1zM402 158h1v1h-1zM413 721h1v1h-1zM413 711h1v1h-1zM413 701h1v1h-1zM413 691h1v1h-1zM413 680h1v1h-1zM413 670h1v1h-1zM413 660h1v1h-1zM413 650h1v1h-1zM413 639h1v1h-1zM413 629h1v1h-1zM413 619h1v1h-1zM413 609h1v1h-1zM413 598h1v1h-1zM413 588h1v1h-1zM413 578h1v1h-1zM413 568h1v1h-1zM413 557h1v1h-1zM413 547h1v1h-1zM413 537h1v1h-1zM413 527h1v1h-1zM413 516h1v1h-1zM413 506h1v1h-1zM413 496h1v1h-1zM413 486h1v1h-1zM413 475h1v1h-1zM413 465h1v1h-1zM413 455h1v1h-1zM413 445h1v1h-1zM413 434h1v1h-1zM413 424h1v1h-1zM413 414h1v1h-1zM413 404h1v1h-1zM413 393h1v1h-1zM413 383h1v1h-1zM413 373h1v1h-1zM413 363h1v1h-1zM413 352h1v1h-1zM413 342h1v1h-1zM413 332h1v1h-1zM413 322h1v1h-1zM413 311h1v1h-1zM413 301h1v1h-1zM413 291h1v1h-1zM413 281h1v1h-1zM413 270h1v1h-1zM413 260h1v1h-1zM413 250h1v1h-1zM413 240h1v1h-1zM413 229h1v1h-1zM413 219h1v1h-1zM413 209h1v1h-1zM413 199h1v1h-1zM413 188h1v1h-1zM413 178h1v1h-1zM413 168h1v1h-1zM413 158h1v1h-1zM423 721h1v1h-1zM423 711h1v1h-1zM423 701h1v1h-1zM423 691h1v1h-1zM423 680h1v1h-1zM423 670h1v1h-1zM423 660h1v1h-1zM423 650h1v1h-1zM423 639h1v1h-1zM423 629h1v1h-1zM423 619h1v1h-1zM423 609h1v1h-1zM423 598h1v1h-1zM423 588h1v1h-1zM423 578h1v1h-1zM423 568h1v1h-1zM423 557h1v1h-1zM423 547h1v1h-1zM423 537h1v1h-1zM423 527h1v1h-1zM423 516h1v1h-1zM423 506h1v1h-1zM423 496h1v1h-1zM423 486h1v1h-1zM423 475h1v1h-1zM423 465h1v1h-1zM423 455h1v1h-1zM423 445h1v1h-1zM423 434h1v1h-1zM423 424h1v1h-1zM423 414h1v1h-1zM423 404h1v1h-1zM423 393h1v1h-1zM423 383h1v1h-1zM423 373h1v1h-1zM423 363h1v1h-1zM423 352h1v1h-1zM423 342h1v1h-1zM423 332h1v1h-1zM423 322h1v1h-1zM423 311h1v1h-1zM423 301h1v1h-1zM423 291h1v1h-1zM423 281h1v1h-1zM423 270h1v1h-1zM423 260h1v1h-1zM423 250h1v1h-1zM423 240h1v1h-1zM423 229h1v1h-1zM423 219h1v1h-1zM423 209h1v1h-1zM423 199h1v1h-1zM423 188h1v1h-1zM423 178h1v1h-1zM423 168h1v1h-1zM423 158h1v1h-1zM433 721h1v1h-1zM433 711h1v1h-1zM433 701h1v1h-1zM433 691h1v1h-1zM433 680h1v1h-1zM433 670h1v1h-1zM433 660h1v1h-1zM433 650h1v1h-1zM433 639h1v1h-1zM433 629h1v1h-1zM433 619h1v1h-1zM433 609h1v1h-1zM433 598h1v1h-1zM433 588h1v1h-1zM433 578h1v1h-1zM433 568h1v1h-1zM433 557h1v1h-1zM433 547h1v1h-1zM433 537h1v1h-1zM433 527h1v1h-1zM433 516h1v1h-1zM433 506h1v1h-1zM433 496h1v1h-1zM433 486h1v1h-1zM433 475h1v1h-1zM433 465h1v1h-1zM433 455h1v1h-1zM433 445h1v1h-1zM433 434h1v1h-1zM433 424h1v1h-1zM433 414h1v1h-1zM433 404h1v1h-1zM433 393h1v1h-1zM433 383h1v1h-1zM433 373h1v1h-1zM433 363h1v1h-1zM433 352h1v1h-1zM433 342h1v1h-1zM433 332h1v1h-1zM433 322h1v1h-1zM433 311h1v1h-1zM433 301h1v1h-1zM433 291h1v1h-1zM433 281h1v1h-1zM433 270h1v1h-1zM433 260h1v1h-1zM433 250h1v1h-1zM433 240h1v1h-1zM433 229h1v1h-1zM433 219h1v1h-1zM433 209h1v1h-1zM433 199h1v1h-1zM433 188h1v1h-1zM433 178h1v1h-1zM433 168h1v1h-1zM433 158h1v1h-1zM443 721h1v1h-1zM443 711h1v1h-1zM443 701h1v1h-1zM443 691h1v1h-1zM443 680h1v1h-1zM443 670h1v1h-1zM443 660h1v1h-1zM443 650h1v1h-1zM443 639h1v1h-1zM443 629h1v1h-1zM443 619h1v1h-1zM443 609h1v1h-1zM443 598h1v1h-1zM443 588h1v1h-1zM443 578h1v1h-1zM443 568h1v1h-1zM443 557h1v1h-1zM443 547h1v1h-1zM443 537h1v1h-1zM443 527h1v1h-1zM443 516h1v1h-1zM443 506h1v1h-1zM443 496h1v1h-1zM443 486h1v1h-1zM443 475h1v1h-1zM443 465h1v1h-1zM443 455h1v1h-1zM443 445h1v1h-1zM443 434h1v1h-1zM443 424h1v1h-1zM443 414h1v1h-1zM443 404h1v1h-1zM443 393h1v1h-1zM443 383h1v1h-1zM443 373h1v1h-1zM443 363h1v1h-1zM443 352h1v1h-1zM443 342h1v1h-1zM443 332h1v1h-1zM443 322h1v1h-1zM443 311h1v1h-1zM443 301h1v1h-1zM443 291h1v1h-1zM443 281h1v1h-1zM443 270h1v1h-1zM443 260h1v1h-1zM443 250h1v1h-1zM443 240h1v1h-1zM443 229h1v1h-1zM443 219h1v1h-1zM443 209h1v1h-1zM443 199h1v1h-1zM443 188h1v1h-1zM443 178h1v1h-1zM443 168h1v1h-1zM443 158h1v1h-1zM454 721h1v1h-1zM454 711h1v1h-1zM454 701h1v1h-1zM454 691h1v1h-1zM454 680h1v1h-1zM454 670h1v1h-1zM454 660h1v1h-1zM454 650h1v1h-1zM454 639h1v1h-1zM454 629h1v1h-1zM454 619h1v1h-1zM454 609h1v1h-1zM454 598h1v1h-1zM454 588h1v1h-1zM454 578h1v1h-1zM454 568h1v1h-1zM454 557h1v1h-1zM454 547h1v1h-1zM454 537h1v1h-1zM454 527h1v1h-1zM454 516h1v1h-1zM454 506h1v1h-1zM454 496h1v1h-1zM454 486h1v1h-1zM454 475h1v1h-1zM454 465h1v1h-1zM454 455h1v1h-1zM454 445h1v1h-1zM454 434h1v1h-1zM454 424h1v1h-1zM454 414h1v1h-1zM454 404h1v1h-1zM454 393h1v1h-1zM454 383h1v1h-1zM454 373h1v1h-1zM454 363h1v1h-1zM454 352h1v1h-1zM454 342h1v1h-1zM454 332h1v1h-1zM454 322h1v1h-1zM454 311h1v1h-1zM454 301h1v1h-1zM454 291h1v1h-1zM454 281h1v1h-1zM454 270h1v1h-1zM454 260h1v1h-1zM454 250h1v1h-1zM454 240h1v1h-1zM454 229h1v1h-1zM454 219h1v1h-1zM454 209h1v1h-1zM454 199h1v1h-1zM454 188h1v1h-1zM454 178h1v1h-1zM454 168h1v1h-1zM454 158h1v1h-1zM464 721h1v1h-1zM464 711h1v1h-1zM464 701h1v1h-1zM464 691h1v1h-1zM464 680h1v1h-1zM464 670h1v1h-1zM464 660h1v1h-1zM464 650h1v1h-1zM464 639h1v1h-1zM464 629h1v1h-1zM464 619h1v1h-1zM464 609h1v1h-1zM464 598h1v1h-1zM464 588h1v1h-1zM464 578h1v1h-1zM464 568h1v1h-1zM464 557h1v1h-1zM464 547h1v1h-1zM464 537h1v1h-1zM464 527h1v1h-1zM464 516h1v1h-1zM464 506h1v1h-1zM464 496h1v1h-1zM464 486h1v1h-1zM464 475h1v1h-1zM464 465h1v1h-1zM464 455h1v1h-1zM464 445h1v1h-1zM464 434h1v1h-1zM464 424h1v1h-1zM464 414h1v1h-1zM464 404h1v1h-1zM464 393h1v1h-1zM464 383h1v1h-1zM464 373h1v1h-1zM464 363h1v1h-1zM464 352h1v1h-1zM464 342h1v1h-1zM464 332h1v1h-1zM464 322h1v1h-1zM464 311h1v1h-1zM464 301h1v1h-1zM464 291h1v1h-1zM464 281h1v1h-1zM464 270h1v1h-1zM464 260h1v1h-1zM464 250h1v1h-1zM464 240h1v1h-1zM464 229h1v1h-1zM464 219h1v1h-1zM464 209h1v1h-1zM464 199h1v1h-1zM464 188h1v1h-1zM464 178h1v1h-1zM464 168h1v1h-1zM464 158h1v1h-1zM474 721h1v1h-1zM474 711h1v1h-1zM474 701h1v1h-1zM474 691h1v1h-1zM474 680h1v1h-1zM474 670h1v1h-1zM474 660h1v1h-1zM474 650h1v1h-1zM474 639h1v1h-1zM474 629h1v1h-1zM474 619h1v1h-1zM474 609h1v1h-1zM474 598h1v1h-1zM474 588h1v1h-1zM474 578h1v1h-1zM474 568h1v1h-1zM474 557h1v1h-1zM474 547h1v1h-1zM474 537h1v1h-1zM474 527h1v1h-1zM474 516h1v1h-1zM474 506h1v1h-1zM474 496h1v1h-1zM474 486h1v1h-1zM474 475h1v1h-1zM474 465h1v1h-1zM474 455h1v1h-1zM474 445h1v1h-1zM474 434h1v1h-1zM474 424h1v1h-1zM474 414h1v1h-1zM474 404h1v1h-1zM474 393h1v1h-1zM474 383h1v1h-1zM474 373h1v1h-1zM474 363h1v1h-1zM474 352h1v1h-1zM474 342h1v1h-1zM474 332h1v1h-1zM474 322h1v1h-1zM474 311h1v1h-1zM474 301h1v1h-1zM474 291h1v1h-1zM474 281h1v1h-1zM474 270h1v1h-1zM474 260h1v1h-1zM474 250h1v1h-1zM474 240h1v1h-1zM474 229h1v1h-1zM474 219h1v1h-1zM474 209h1v1h-1zM474 199h1v1h-1zM474 188h1v1h-1zM474 178h1v1h-1zM474 168h1v1h-1zM474 158h1v1h-1zM484 721h1v1h-1zM484 711h1v1h-1zM484 701h1v1h-1zM484 691h1v1h-1zM484 680h1v1h-1zM484 670h1v1h-1zM484 660h1v1h-1zM484 650h1v1h-1zM484 639h1v1h-1zM484 629h1v1h-1zM484 619h1v1h-1zM484 609h1v1h-1zM484 598h1v1h-1zM484 588h1v1h-1zM484 578h1v1h-1zM484 568h1v1h-1zM484 557h1v1h-1zM484 547h1v1h-1zM484 537h1v1h-1zM484 527h1v1h-1zM484 516h1v1h-1zM484 506h1v1h-1zM484 496h1v1h-1zM484 486h1v1h-1zM484 475h1v1h-1zM484 465h1v1h-1zM484 455h1v1h-1zM484 445h1v1h-1zM484 434h1v1h-1zM484 424h1v1h-1zM484 414h1v1h-1zM484 404h1v1h-1zM484 393h1v1h-1zM484 383h1v1h-1zM484 373h1v1h-1zM484 363h1v1h-1zM484 352h1v1h-1zM484 342h1v1h-1zM484 332h1v1h-1zM484 322h1v1h-1zM484 311h1v1h-1zM484 301h1v1h-1zM484 291h1v1h-1zM484 281h1v1h-1zM484 270h1v1h-1zM484 260h1v1h-1zM484 250h1v1h-1zM484 240h1v1h-1zM484 229h1v1h-1zM484 219h1v1h-1zM484 209h1v1h-1zM484 199h1v1h-1zM484 188h1v1h-1zM484 178h1v1h-1zM484 168h1v1h-1zM484 158h1v1h-1zM495 721h1v1h-1zM495 711h1v1h-1zM495 701h1v1h-1zM495 691h1v1h-1zM495 680h1v1h-1zM495 670h1v1h-1zM495 660h1v1h-1zM495 650h1v1h-1zM495 639h1v1h-1zM495 629h1v1h-1zM495 619h1v1h-1zM495 609h1v1h-1zM495 598h1v1h-1zM495 588h1v1h-1zM495 578h1v1h-1zM495 568h1v1h-1zM495 557h1v1h-1zM495 547h1v1h-1zM495 537h1v1h-1zM495 527h1v1h-1zM495 516h1v1h-1zM495 506h1v1h-1zM495 496h1v1h-1zM495 486h1v1h-1zM495 475h1v1h-1zM495 465h1v1h-1zM495 455h1v1h-1zM495 445h1v1h-1zM495 434h1v1h-1zM495 424h1v1h-1zM495 414h1v1h-1zM495 404h1v1h-1zM495 393h1v1h-1zM495 383h1v1h-1zM495 373h1v1h-1zM495 363h1v1h-1zM495 352h1v1h-1zM495 342h1v1h-1zM495 332h1v1h-1zM495 322h1v1h-1zM495 311h1v1h-1zM495 301h1v1h-1zM495 291h1v1h-1zM495 281h1v1h-1zM495 270h1v1h-1zM495 260h1v1h-1zM495 250h1v1h-1zM495 240h1v1h-1zM495 229h1v1h-1zM495 219h1v1h-1zM495 209h1v1h-1zM495 199h1v1h-1zM495 188h1v1h-1zM495 178h1v1h-1zM495 168h1v1h-1zM495 158h1v1h-1zM505 721h1v1h-1zM505 711h1v1h-1zM505 701h1v1h-1zM505 691h1v1h-1zM505 680h1v1h-1zM505 670h1v1h-1zM505 660h1v1h-1zM505 650h1v1h-1zM505 639h1v1h-1zM505 629h1v1h-1zM505 619h1v1h-1zM505 609h1v1h-1zM505 598h1v1h-1zM505 588h1v1h-1zM505 578h1v1h-1zM505 568h1v1h-1zM505 557h1v1h-1zM505 547h1v1h-1zM505 537h1v1h-1zM505 527h1v1h-1zM505 516h1v1h-1zM505 506h1v1h-1zM505 496h1v1h-1zM505 486h1v1h-1zM505 475h1v1h-1zM505 465h1v1h-1zM505 455h1v1h-1zM505 445h1v1h-1zM505 434h1v1h-1zM505 424h1v1h-1zM505 414h1v1h-1zM505 404h1v1h-1zM505 393h1v1h-1zM505 383h1v1h-1zM505 373h1v1h-1zM505 363h1v1h-1zM505 352h1v1h-1zM505 342h1v1h-1zM505 332h1v1h-1zM505 322h1v1h-1zM505 311h1v1h-1zM505 301h1v1h-1zM505 291h1v1h-1zM505 281h1v1h-1zM505 270h1v1h-1zM505 260h1v1h-1zM505 250h1v1h-1zM505 240h1v1h-1zM505 229h1v1h-1zM505 219h1v1h-1zM505 209h1v1h-1zM505 199h1v1h-1zM505 188h1v1h-1zM505 178h1v1h-1zM505 168h1v1h-1zM505 158h1v1h-1zM515 721h1v1h-1zM515 711h1v1h-1zM515 701h1v1h-1zM515 691h1v1h-1zM515 680h1v1h-1zM515 670h1v1h-1zM515 660h1v1h-1zM515 650h1v1h-1zM515 639h1v1h-1zM515 629h1v1h-1zM515 619h1v1h-1zM515 609h1v1h-1zM515 598h1v1h-1zM515 588h1v1h-1zM515 578h1v1h-1zM515 568h1v1h-1zM515 557h1v1h-1zM515 547h1v1h-1zM515 537h1v1h-1zM515 527h1v1h-1zM515 516h1v1h-1zM515 506h1v1h-1zM515 496h1v1h-1zM515 486h1v1h-1zM515 475h1v1h-1zM515 465h1v1h-1zM515 455h1v1h-1zM515 445h1v1h-1zM515 434h1v1h-1zM515 424h1v1h-1zM515 414h1v1h-1zM515 404h1v1h-1zM515 393h1v1h-1zM515 383h1v1h-1zM515 373h1v1h-1zM515 363h1v1h-1zM515 352h1v1h-1zM515 342h1v1h-1zM515 332h1v1h-1zM515 322h1v1h-1zM515 311h1v1h-1zM515 301h1v1h-1zM515 291h1v1h-1zM515 281h1v1h-1zM515 270h1v1h-1zM515 260h1v1h-1zM515 250h1v1h-1zM515 240h1v1h-1zM515 229h1v1h-1zM515 219h1v1h-1zM515 209h1v1h-1zM515 199h1v1h-1zM515 188h1v1h-1zM515 178h1v1h-1zM515 168h1v1h-1zM515 158h1v1h-1zM525 721h1v1h-1zM525 711h1v1h-1zM525 701h1v1h-1zM525 691h1v1h-1zM525 680h1v1h-1zM525 670h1v1h-1zM525 660h1v1h-1zM525 650h1v1h-1zM525 639h1v1h-1zM525 629h1v1h-1zM525 619h1v1h-1zM525 609h1v1h-1zM525 598h1v1h-1zM525 588h1v1h-1zM525 578h1v1h-1zM525 568h1v1h-1zM525 557h1v1h-1zM525 547h1v1h-1zM525 537h1v1h-1zM525 527h1v1h-1zM525 516h1v1h-1zM525 506h1v1h-1zM525 496h1v1h-1zM525 486h1v1h-1zM525 475h1v1h-1zM525 465h1v1h-1zM525 455h1v1h-1zM525 445h1v1h-1zM525 434h1v1h-1zM525 424h1v1h-1zM525 414h1v1h-1zM525 404h1v1h-1zM525 393h1v1h-1zM525 383h1v1h-1zM525 373h1v1h-1zM525 363h1v1h-1zM525 352h1v1h-1zM525 342h1v1h-1zM525 332h1v1h-1zM525 322h1v1h-1zM525 311h1v1h-1zM525 301h1v1h-1zM525 291h1v1h-1zM525 281h1v1h-1zM525 270h1v1h-1zM525 260h1v1h-1zM525 250h1v1h-1zM525 240h1v1h-1zM525 229h1v1h-1zM525 219h1v1h-1zM525 209h1v1h-1zM525 199h1v1h-1zM525 188h1v1h-1zM525 178h1v1h-1zM525 168h1v1h-1zM525 158h1v1h-1zM536 721h1v1h-1zM536 711h1v1h-1zM536 701h1v1h-1zM536 691h1v1h-1zM536 680h1v1h-1zM536 670h1v1h-1zM536 660h1v1h-1zM536 650h1v1h-1zM536 639h1v1h-1zM536 629h1v1h-1zM536 619h1v1h-1zM536 609h1v1h-1zM536 598h1v1h-1zM536 588h1v1h-1zM536 578h1v1h-1zM536 568h1v1h-1zM536 557h1v1h-1zM536 547h1v1h-1zM536 537h1v1h-1zM536 527h1v1h-1zM536 516h1v1h-1zM536 506h1v1h-1zM536 496h1v1h-1zM536 486h1v1h-1zM536 475h1v1h-1zM536 465h1v1h-1zM536 455h1v1h-1zM536 445h1v1h-1zM536 434h1v1h-1zM536 424h1v1h-1zM536 414h1v1h-1zM536 404h1v1h-1zM536 393h1v1h-1zM536 383h1v1h-1zM536 373h1v1h-1zM536 363h1v1h-1zM536 352h1v1h-1zM536 342h1v1h-1zM536 332h1v1h-1zM536 322h1v1h-1zM536 311h1v1h-1zM536 301h1v1h-1zM536 291h1v1h-1zM536 281h1v1h-1zM536 270h1v1h-1zM536 260h1v1h-1zM536 250h1v1h-1zM536 240h1v1h-1zM536 229h1v1h-1zM536 219h1v1h-1zM536 209h1v1h-1zM536 199h1v1h-1zM536 188h1v1h-1zM536 178h1v1h-1zM536 168h1v1h-1zM536 158h1v1h-1zM546 721h1v1h-1zM546 711h1v1h-1zM546 701h1v1h-1zM546 691h1v1h-1zM546 680h1v1h-1zM546 670h1v1h-1zM546 660h1v1h-1zM546 650h1v1h-1zM546 639h1v1h-1zM546 629h1v1h-1zM546 619h1v1h-1zM546 609h1v1h-1zM546 598h1v1h-1zM546 588h1v1h-1zM546 578h1v1h-1zM546 568h1v1h-1zM546 557h1v1h-1zM546 547h1v1h-1zM546 537h1v1h-1zM546 527h1v1h-1zM546 516h1v1h-1zM546 506h1v1h-1zM546 496h1v1h-1zM546 486h1v1h-1zM546 475h1v1h-1zM546 465h1v1h-1zM546 455h1v1h-1zM546 445h1v1h-1zM546 434h1v1h-1zM546 424h1v1h-1zM546 414h1v1h-1zM546 404h1v1h-1zM546 393h1v1h-1zM546 383h1v1h-1zM546 373h1v1h-1zM546 363h1v1h-1zM546 352h1v1h-1zM546 342h1v1h-1zM546 332h1v1h-1zM546 322h1v1h-1zM546 311h1v1h-1zM546 301h1v1h-1zM546 291h1v1h-1zM546 281h1v1h-1zM546 270h1v1h-1zM546 260h1v1h-1zM546 250h1v1h-1zM546 240h1v1h-1zM546 229h1v1h-1zM546 219h1v1h-1zM546 209h1v1h-1zM546 199h1v1h-1zM546 188h1v1h-1zM546 178h1v1h-1zM546 168h1v1h-1zM546 158h1v1h-1zM556 721h1v1h-1zM556 711h1v1h-1zM556 701h1v1h-1zM556 691h1v1h-1zM556 680h1v1h-1zM556 670h1v1h-1zM556 660h1v1h-1zM556 650h1v1h-1zM556 639h1v1h-1zM556 629h1v1h-1zM556 619h1v1h-1zM556 609h1v1h-1zM556 598h1v1h-1zM556 588h1v1h-1zM556 578h1v1h-1zM556 568h1v1h-1zM556 557h1v1h-1zM556 547h1v1h-1zM556 537h1v1h-1zM556 527h1v1h-1zM556 516h1v1h-1zM556 506h1v1h-1zM556 496h1v1h-1zM556 486h1v1h-1zM556 475h1v1h-1zM556 465h1v1h-1zM556 455h1v1h-1zM556 445h1v1h-1zM556 434h1v1h-1zM556 424h1v1h-1zM556 414h1v1h-1zM556 404h1v1h-1zM556 393h1v1h-1zM556 383h1v1h-1zM556 373h1v1h-1zM556 363h1v1h-1zM556 352h1v1h-1zM556 342h1v1h-1zM556 332h1v1h-1zM556 322h1v1h-1zM556 311h1v1h-1zM556 301h1v1h-1zM556 291h1v1h-1zM556 281h1v1h-1zM556 270h1v1h-1zM556 260h1v1h-1zM556 250h1v1h-1zM556 240h1v1h-1zM556 229h1v1h-1zM556 219h1v1h-1zM556 209h1v1h-1zM556 199h1v1h-1zM556 188h1v1h-1zM556 178h1v1h-1zM556 168h1v1h-1zM556 158h1v1h-1zM566 721h1v1h-1zM566 711h1v1h-1zM566 701h1v1h-1zM566 691h1v1h-1zM566 680h1v1h-1zM566 670h1v1h-1zM566 660h1v1h-1zM566 650h1v1h-1zM566 639h1v1h-1zM566 629h1v1h-1zM566 619h1v1h-1zM566 609h1v1h-1zM566 598h1v1h-1zM566 588h1v1h-1zM566 578h1v1h-1zM566 568h1v1h-1zM566 557h1v1h-1zM566 547h1v1h-1zM566 537h1v1h-1zM566 527h1v1h-1zM566 516h1v1h-1zM566 506h1v1h-1zM566 496h1v1h-1zM566 486h1v1h-1zM566 475h1v1h-1zM566 465h1v1h-1zM566 455h1v1h-1zM566 445h1v1h-1zM566 434h1v1h-1zM566 424h1v1h-1zM566 414h1v1h-1zM566 404h1v1h-1zM566 393h1v1h-1zM566 383h1v1h-1zM566 373h1v1h-1zM566 363h1v1h-1zM566 352h1v1h-1zM566 342h1v1h-1zM566 332h1v1h-1zM566 322h1v1h-1zM566 311h1v1h-1zM566 301h1v1h-1zM566 291h1v1h-1zM566 281h1v1h-1zM566 270h1v1h-1zM566 260h1v1h-1zM566 250h1v1h-1zM566 240h1v1h-1zM566 229h1v1h-1zM566 219h1v1h-1zM566 209h1v1h-1zM566 199h1v1h-1zM566 188h1v1h-1zM566 178h1v1h-1zM566 168h1v1h-1zM566 158h1v1h-1zM577 721h1v1h-1zM577 711h1v1h-1zM577 701h1v1h-1zM577 691h1v1h-1zM577 680h1v1h-1zM577 670h1v1h-1zM577 660h1v1h-1zM577 650h1v1h-1zM577 639h1v1h-1zM577 629h1v1h-1zM577 619h1v1h-1zM577 609h1v1h-1zM577 598h1v1h-1zM577 588h1v1h-1zM577 578h1v1h-1zM577 568h1v1h-1zM577 557h1v1h-1zM577 547h1v1h-1zM577 537h1v1h-1zM577 527h1v1h-1zM577 516h1v1h-1zM577 506h1v1h-1zM577 496h1v1h-1zM577 486h1v1h-1zM577 475h1v1h-1zM577 465h1v1h-1zM577 455h1v1h-1zM577 445h1v1h-1zM577 434h1v1h-1zM577 424h1v1h-1zM577 414h1v1h-1zM577 404h1v1h-1zM577 393h1v1h-1zM577 383h1v1h-1zM577 373h1v1h-1zM577 363h1v1h-1zM577 352h1v1h-1zM577 342h1v1h-1zM577 332h1v1h-1zM577 322h1v1h-1zM577 311h1v1h-1zM577 301h1v1h-1zM577 291h1v1h-1zM577 281h1v1h-1zM577 270h1v1h-1zM577 260h1v1h-1zM577 250h1v1h-1zM577 240h1v1h-1zM577 229h1v1h-1zM577 219h1v1h-1zM577 209h1v1h-1zM577 199h1v1h-1zM577 188h1v1h-1zM577 178h1v1h-1zM577 168h1v1h-1zM577 158h1v1h-1zM587 721h1v1h-1zM587 711h1v1h-1zM587 701h1v1h-1zM587 691h1v1h-1zM587 680h1v1h-1zM587 670h1v1h-1zM587 660h1v1h-1zM587 650h1v1h-1zM587 639h1v1h-1zM587 629h1v1h-1zM587 619h1v1h-1zM587 609h1v1h-1zM587 598h1v1h-1zM587 588h1v1h-1zM587 578h1v1h-1zM587 568h1v1h-1zM587 557h1v1h-1zM587 547h1v1h-1zM587 537h1v1h-1zM587 527h1v1h-1zM587 516h1v1h-1zM587 506h1v1h-1zM587 496h1v1h-1zM587 486h1v1h-1zM587 475h1v1h-1zM587 465h1v1h-1zM587 455h1v1h-1zM587 445h1v1h-1zM587 434h1v1h-1zM587 424h1v1h-1zM587 414h1v1h-1zM587 404h1v1h-1zM587 393h1v1h-1zM587 383h1v1h-1zM587 373h1v1h-1zM587 363h1v1h-1zM587 352h1v1h-1zM587 342h1v1h-1zM587 332h1v1h-1zM587 322h1v1h-1zM587 311h1v1h-1zM587 301h1v1h-1zM587 291h1v1h-1zM587 281h1v1h-1zM587 270h1v1h-1zM587 260h1v1h-1zM587 250h1v1h-1zM587 240h1v1h-1zM587 229h1v1h-1zM587 219h1v1h-1zM587 209h1v1h-1zM587 199h1v1h-1zM587 188h1v1h-1zM587 178h1v1h-1zM587 168h1v1h-1zM587 158h1v1h-1zM597 721h1v1h-1zM597 711h1v1h-1zM597 701h1v1h-1zM597 691h1v1h-1zM597 680h1v1h-1zM597 670h1v1h-1zM597 660h1v1h-1zM597 650h1v1h-1zM597 639h1v1h-1zM597 629h1v1h-1zM597 619h1v1h-1zM597 609h1v1h-1zM597 598h1v1h-1zM597 588h1v1h-1zM597 578h1v1h-1zM597 568h1v1h-1zM597 557h1v1h-1zM597 547h1v1h-1zM597 537h1v1h-1zM597 527h1v1h-1zM597 516h1v1h-1zM597 506h1v1h-1zM597 496h1v1h-1zM597 486h1v1h-1zM597 475h1v1h-1zM597 465h1v1h-1zM597 455h1v1h-1zM597 445h1v1h-1zM597 434h1v1h-1zM597 424h1v1h-1zM597 414h1v1h-1zM597 404h1v1h-1zM597 393h1v1h-1zM597 383h1v1h-1zM597 373h1v1h-1zM597 363h1v1h-1zM597 352h1v1h-1zM597 342h1v1h-1zM597 332h1v1h-1zM597 322h1v1h-1zM597 311h1v1h-1zM597 301h1v1h-1zM597 291h1v1h-1zM597 281h1v1h-1zM597 270h1v1h-1zM597 260h1v1h-1zM597 250h1v1h-1zM597 240h1v1h-1zM597 229h1v1h-1zM597 219h1v1h-1zM597 209h1v1h-1zM597 199h1v1h-1zM597 188h1v1h-1zM597 178h1v1h-1zM597 168h1v1h-1zM597 158h1v1h-1zM607 721h1v1h-1zM607 711h1v1h-1zM607 701h1v1h-1zM607 691h1v1h-1zM607 680h1v1h-1zM607 670h1v1h-1zM607 660h1v1h-1zM607 650h1v1h-1zM607 639h1v1h-1zM607 629h1v1h-1zM607 619h1v1h-1zM607 609h1v1h-1zM607 598h1v1h-1zM607 588h1v1h-1zM607 578h1v1h-1zM607 568h1v1h-1zM607 557h1v1h-1zM607 547h1v1h-1zM607 537h1v1h-1zM607 527h1v1h-1zM607 516h1v1h-1zM607 506h1v1h-1zM607 496h1v1h-1zM607 486h1v1h-1zM607 475h1v1h-1zM607 465h1v1h-1zM607 455h1v1h-1zM607 445h1v1h-1zM607 434h1v1h-1zM607 424h1v1h-1zM607 414h1v1h-1zM607 404h1v1h-1zM607 393h1v1h-1zM607 383h1v1h-1zM607 373h1v1h-1zM607 363h1v1h-1zM607 352h1v1h-1zM607 342h1v1h-1zM607 332h1v1h-1zM607 322h1v1h-1zM607 311h1v1h-1zM607 301h1v1h-1zM607 291h1v1h-1zM607 281h1v1h-1zM607 270h1v1h-1zM607 260h1v1h-1zM607 250h1v1h-1zM607 240h1v1h-1zM607 229h1v1h-1zM607 219h1v1h-1zM607 209h1v1h-1zM607 199h1v1h-1zM607 188h1v1h-1zM607 178h1v1h-1zM607 168h1v1h-1zM607 158h1v1h-1zM618 721h1v1h-1zM618 711h1v1h-1zM618 701h1v1h-1zM618 691h1v1h-1zM618 680h1v1h-1zM618 670h1v1h-1zM618 660h1v1h-1zM618 650h1v1h-1zM618 639h1v1h-1zM618 629h1v1h-1zM618 619h1v1h-1zM618 609h1v1h-1zM618 598h1v1h-1zM618 588h1v1h-1zM618 578h1v1h-1zM618 568h1v1h-1zM618 557h1v1h-1zM618 547h1v1h-1zM618 537h1v1h-1zM618 527h1v1h-1zM618 516h1v1h-1zM618 506h1v1h-1zM618 496h1v1h-1zM618 486h1v1h-1zM618 475h1v1h-1zM618 465h1v1h-1zM618 455h1v1h-1zM618 445h1v1h-1zM618 434h1v1h-1zM618 424h1v1h-1zM618 414h1v1h-1zM618 404h1v1h-1zM618 393h1v1h-1zM618 383h1v1h-1zM618 373h1v1h-1zM618 363h1v1h-1zM618 352h1v1h-1zM618 342h1v1h-1zM618 332h1v1h-1zM618 322h1v1h-1zM618 311h1v1h-1zM618 301h1v1h-1zM618 291h1v1h-1zM618 281h1v1h-1zM618 270h1v1h-1zM618 260h1v1h-1zM618 250h1v1h-1zM618 240h1v1h-1zM618 229h1v1h-1zM618 219h1v1h-1zM618 209h1v1h-1zM618 199h1v1h-1zM618 188h1v1h-1zM618 178h1v1h-1zM618 168h1v1h-1zM618 158h1v1h-1zM628 721h1v1h-1zM628 711h1v1h-1zM628 701h1v1h-1zM628 691h1v1h-1zM628 680h1v1h-1zM628 670h1v1h-1zM628 660h1v1h-1zM628 650h1v1h-1zM628 639h1v1h-1zM628 629h1v1h-1zM628 619h1v1h-1zM628 609h1v1h-1zM628 598h1v1h-1zM628 588h1v1h-1zM628 578h1v1h-1zM628 568h1v1h-1zM628 557h1v1h-1zM628 547h1v1h-1zM628 537h1v1h-1zM628 527h1v1h-1zM628 516h1v1h-1zM628 506h1v1h-1zM628 496h1v1h-1zM628 486h1v1h-1zM628 475h1v1h-1zM628 465h1v1h-1zM628 455h1v1h-1zM628 445h1v1h-1zM628 434h1v1h-1zM628 424h1v1h-1zM628 414h1v1h-1zM628 404h1v1h-1zM628 393h1v1h-1zM628 383h1v1h-1zM628 373h1v1h-1zM628 363h1v1h-1zM628 352h1v1h-1zM628 342h1v1h-1zM628 332h1v1h-1zM628 322h1v1h-1zM628 311h1v1h-1zM628 301h1v1h-1zM628 291h1v1h-1zM628 281h1v1h-1zM628 270h1v1h-1zM628 260h1v1h-1zM628 250h1v1h-1zM628 240h1v1h-1zM628 229h1v1h-1zM628 219h1v1h-1zM628 209h1v1h-1zM628 199h1v1h-1zM628 188h1v1h-1zM628 178h1v1h-1zM628 168h1v1h-1zM628 158h1v1h-1zM638 721h1v1h-1zM638 711h1v1h-1zM638 701h1v1h-1zM638 691h1v1h-1zM638 680h1v1h-1zM638 670h1v1h-1zM638 660h1v1h-1zM638 650h1v1h-1zM638 639h1v1h-1zM638 629h1v1h-1zM638 619h1v1h-1zM638 609h1v1h-1zM638 598h1v1h-1zM638 588h1v1h-1zM638 578h1v1h-1zM638 568h1v1h-1zM638 557h1v1h-1zM638 547h1v1h-1zM638 537h1v1h-1zM638 527h1v1h-1zM638 516h1v1h-1zM638 506h1v1h-1zM638 496h1v1h-1zM638 486h1v1h-1zM638 475h1v1h-1zM638 465h1v1h-1zM638 455h1v1h-1zM638 445h1v1h-1zM638 434h1v1h-1zM638 424h1v1h-1zM638 414h1v1h-1zM638 404h1v1h-1zM638 393h1v1h-1zM638 383h1v1h-1zM638 373h1v1h-1zM638 363h1v1h-1zM638 352h1v1h-1zM638 342h1v1h-1zM638 332h1v1h-1zM638 322h1v1h-1zM638 311h1v1h-1zM638 301h1v1h-1zM638 291h1v1h-1zM638 281h1v1h-1zM638 270h1v1h-1zM638 260h1v1h-1zM638 250h1v1h-1zM638 240h1v1h-1zM638 229h1v1h-1zM638 219h1v1h-1zM638 209h1v1h-1zM638 199h1v1h-1zM638 188h1v1h-1zM638 178h1v1h-1zM638 168h1v1h-1zM638 158h1v1h-1zM648 721h1v1h-1zM648 711h1v1h-1zM648 701h1v1h-1zM648 691h1v1h-1zM648 680h1v1h-1zM648 670h1v1h-1zM648 660h1v1h-1zM648 650h1v1h-1zM648 639h1v1h-1zM648 629h1v1h-1zM648 619h1v1h-1zM648 609h1v1h-1zM648 598h1v1h-1zM648 588h1v1h-1zM648 578h1v1h-1zM648 568h1v1h-1zM648 557h1v1h-1zM648 547h1v1h-1zM648 537h1v1h-1zM648 527h1v1h-1zM648 516h1v1h-1zM648 506h1v1h-1zM648 496h1v1h-1zM648 486h1v1h-1zM648 475h1v1h-1zM648 465h1v1h-1zM648 455h1v1h-1zM648 445h1v1h-1zM648 434h1v1h-1zM648 424h1v1h-1zM648 414h1v1h-1zM648 404h1v1h-1zM648 393h1v1h-1zM648 383h1v1h-1zM648 373h1v1h-1zM648 363h1v1h-1zM648 352h1v1h-1zM648 342h1v1h-1zM648 332h1v1h-1zM648 322h1v1h-1zM648 311h1v1h-1zM648 301h1v1h-1zM648 291h1v1h-1zM648 281h1v1h-1zM648 270h1v1h-1zM648 260h1v1h-1zM648 250h1v1h-1zM648 240h1v1h-1zM648 229h1v1h-1zM648 219h1v1h-1zM648 209h1v1h-1zM648 199h1v1h-1zM648 188h1v1h-1zM648 178h1v1h-1zM648 168h1v1h-1zM648 158h1v1h-1zM659 721h1v1h-1zM659 711h1v1h-1zM659 701h1v1h-1zM659 691h1v1h-1zM659 680h1v1h-1zM659 670h1v1h-1zM659 660h1v1h-1zM659 650h1v1h-1zM659 639h1v1h-1zM659 629h1v1h-1zM659 619h1v1h-1zM659 609h1v1h-1zM659 598h1v1h-1zM659 588h1v1h-1zM659 578h1v1h-1zM659 568h1v1h-1zM659 557h1v1h-1zM659 547h1v1h-1zM659 537h1v1h-1zM659 527h1v1h-1zM659 516h1v1h-1zM659 506h1v1h-1zM659 496h1v1h-1zM659 486h1v1h-1zM659 475h1v1h-1zM659 465h1v1h-1zM659 455h1v1h-1zM659 445h1v1h-1zM659 434h1v1h-1zM659 424h1v1h-1zM659 414h1v1h-1zM659 404h1v1h-1zM659 393h1v1h-1zM659 383h1v1h-1zM659 373h1v1h-1zM659 363h1v1h-1zM659 352h1v1h-1zM659 342h1v1h-1zM659 332h1v1h-1zM659 322h1v1h-1zM659 311h1v1h-1zM659 301h1v1h-1zM659 291h1v1h-1zM659 281h1v1h-1zM659 270h1v1h-1zM659 260h1v1h-1zM659 250h1v1h-1zM659 240h1v1h-1zM659 229h1v1h-1zM659 219h1v1h-1zM659 209h1v1h-1zM659 199h1v1h-1zM659 188h1v1h-1zM659 178h1v1h-1zM659 168h1v1h-1zM659 158h1v1h-1zM669 721h1v1h-1zM669 711h1v1h-1zM669 701h1v1h-1zM669 691h1v1h-1zM669 680h1v1h-1zM669 670h1v1h-1zM669 660h1v1h-1zM669 650h1v1h-1zM669 639h1v1h-1zM669 629h1v1h-1zM669 619h1v1h-1zM669 609h1v1h-1zM669 598h1v1h-1zM669 588h1v1h-1zM669 578h1v1h-1zM669 568h1v1h-1zM669 557h1v1h-1zM669 547h1v1h-1zM669 537h1v1h-1zM669 527h1v1h-1zM669 516h1v1h-1zM669 506h1v1h-1zM669 496h1v1h-1zM669 486h1v1h-1zM669 475h1v1h-1zM669 465h1v1h-1zM669 455h1v1h-1zM669 445h1v1h-1zM669 434h1v1h-1zM669 424h1v1h-1zM669 414h1v1h-1zM669 404h1v1h-1zM669 393h1v1h-1zM669 383h1v1h-1zM669 373h1v1h-1zM669 363h1v1h-1zM669 352h1v1h-1zM669 342h1v1h-1zM669 332h1v1h-1zM669 322h1v1h-1zM669 311h1v1h-1zM669 301h1v1h-1zM669 291h1v1h-1zM669 281h1v1h-1zM669 270h1v1h-1zM669 260h1v1h-1zM669 250h1v1h-1zM669 240h1v1h-1zM669 229h1v1h-1zM669 219h1v1h-1zM669 209h1v1h-1zM669 199h1v1h-1zM669 188h1v1h-1zM669 178h1v1h-1zM669 168h1v1h-1zM669 158h1v1h-1zM679 721h1v1h-1zM679 711h1v1h-1zM679 701h1v1h-1zM679 691h1v1h-1zM679 680h1v1h-1zM679 670h1v1h-1zM679 660h1v1h-1zM679 650h1v1h-1zM679 639h1v1h-1zM679 629h1v1h-1zM679 619h1v1h-1zM679 609h1v1h-1zM679 598h1v1h-1zM679 588h1v1h-1zM679 578h1v1h-1zM679 568h1v1h-1zM679 557h1v1h-1zM679 547h1v1h-1zM679 537h1v1h-1zM679 527h1v1h-1zM679 516h1v1h-1zM679 506h1v1h-1zM679 496h1v1h-1zM679 486h1v1h-1zM679 475h1v1h-1zM679 465h1v1h-1zM679 455h1v1h-1zM679 445h1v1h-1zM679 434h1v1h-1zM679 424h1v1h-1zM679 414h1v1h-1zM679 404h1v1h-1zM679 393h1v1h-1zM679 383h1v1h-1zM679 373h1v1h-1zM679 363h1v1h-1zM679 352h1v1h-1zM679 342h1v1h-1zM679 332h1v1h-1zM679 322h1v1h-1zM679 311h1v1h-1zM679 301h1v1h-1zM679 291h1v1h-1zM679 281h1v1h-1zM679 270h1v1h-1zM679 260h1v1h-1zM679 250h1v1h-1zM679 240h1v1h-1zM679 229h1v1h-1zM679 219h1v1h-1zM679 209h1v1h-1zM679 199h1v1h-1zM679 188h1v1h-1zM679 178h1v1h-1zM679 168h1v1h-1zM679 158h1v1h-1zM689 721h1v1h-1zM689 711h1v1h-1zM689 701h1v1h-1zM689 691h1v1h-1zM689 680h1v1h-1zM689 670h1v1h-1zM689 660h1v1h-1zM689 650h1v1h-1zM689 639h1v1h-1zM689 629h1v1h-1zM689 619h1v1h-1zM689 609h1v1h-1zM689 598h1v1h-1zM689 588h1v1h-1zM689 578h1v1h-1zM689 568h1v1h-1zM689 557h1v1h-1zM689 547h1v1h-1zM689 537h1v1h-1zM689 527h1v1h-1zM689 516h1v1h-1zM689 506h1v1h-1zM689 496h1v1h-1zM689 486h1v1h-1zM689 475h1v1h-1zM689 465h1v1h-1zM689 455h1v1h-1zM689 445h1v1h-1zM689 434h1v1h-1zM689 424h1v1h-1zM689 414h1v1h-1zM689 404h1v1h-1zM689 393h1v1h-1zM689 383h1v1h-1zM689 373h1v1h-1zM689 363h1v1h-1zM689 352h1v1h-1zM689 342h1v1h-1zM689 332h1v1h-1zM689 322h1v1h-1zM689 311h1v1h-1zM689 301h1v1h-1zM689 291h1v1h-1zM689 281h1v1h-1zM689 270h1v1h-1zM689 260h1v1h-1zM689 250h1v1h-1zM689 240h1v1h-1zM689 229h1v1h-1zM689 219h1v1h-1zM689 209h1v1h-1zM689 199h1v1h-1zM689 188h1v1h-1zM689 178h1v1h-1zM689 168h1v1h-1zM689 158h1v1h-1zM700 721h1v1h-1zM700 711h1v1h-1zM700 701h1v1h-1zM700 691h1v1h-1zM700 680h1v1h-1zM700 670h1v1h-1zM700 660h1v1h-1zM700 650h1v1h-1zM700 639h1v1h-1zM700 629h1v1h-1zM700 619h1v1h-1zM700 609h1v1h-1zM700 598h1v1h-1zM700 588h1v1h-1zM700 578h1v1h-1zM700 568h1v1h-1zM700 557h1v1h-1zM700 547h1v1h-1zM700 537h1v1h-1zM700 527h1v1h-1zM700 516h1v1h-1zM700 506h1v1h-1zM700 496h1v1h-1zM700 486h1v1h-1zM700 475h1v1h-1zM700 465h1v1h-1zM700 455h1v1h-1zM700 445h1v1h-1zM700 434h1v1h-1zM700 424h1v1h-1zM700 414h1v1h-1zM700 404h1v1h-1zM700 393h1v1h-1zM700 383h1v1h-1zM700 373h1v1h-1zM700 363h1v1h-1zM700 352h1v1h-1zM700 342h1v1h-1zM700 332h1v1h-1zM700 322h1v1h-1zM700 311h1v1h-1zM700 301h1v1h-1zM700 291h1v1h-1zM700 281h1v1h-1zM700 270h1v1h-1zM700 260h1v1h-1zM700 250h1v1h-1zM700 240h1v1h-1zM700 229h1v1h-1zM700 219h1v1h-1zM700 209h1v1h-1zM700 199h1v1h-1zM700 188h1v1h-1zM700 178h1v1h-1zM700 168h1v1h-1zM700 158h1v1h-1zM710 721h1v1h-1zM710 711h1v1h-1zM710 701h1v1h-1zM710 691h1v1h-1zM710 680h1v1h-1zM710 670h1v1h-1zM710 660h1v1h-1zM710 650h1v1h-1zM710 639h1v1h-1zM710 629h1v1h-1zM710 619h1v1h-1zM710 609h1v1h-1zM710 598h1v1h-1zM710 588h1v1h-1zM710 578h1v1h-1zM710 568h1v1h-1zM710 557h1v1h-1zM710 547h1v1h-1zM710 537h1v1h-1zM710 527h1v1h-1zM710 516h1v1h-1zM710 506h1v1h-1zM710 496h1v1h-1zM710 486h1v1h-1zM710 475h1v1h-1zM710 465h1v1h-1zM710 455h1v1h-1zM710 445h1v1h-1zM710 434h1v1h-1zM710 424h1v1h-1zM710 414h1v1h-1zM710 404h1v1h-1zM710 393h1v1h-1zM710 383h1v1h-1zM710 373h1v1h-1zM710 363h1v1h-1zM710 352h1v1h-1zM710 342h1v1h-1zM710 332h1v1h-1zM710 322h1v1h-1zM710 311h1v1h-1zM710 301h1v1h-1zM710 291h1v1h-1zM710 281h1v1h-1zM710 270h1v1h-1zM710 260h1v1h-1zM710 250h1v1h-1zM710 240h1v1h-1zM710 229h1v1h-1zM710 219h1v1h-1zM710 209h1v1h-1zM710 199h1v1h-1zM710 188h1v1h-1zM710 178h1v1h-1zM710 168h1v1h-1zM710 158h1v1h-1zM720 721h1v1h-1zM720 711h1v1h-1zM720 701h1v1h-1zM720 691h1v1h-1zM720 680h1v1h-1zM720 670h1v1h-1zM720 660h1v1h-1zM720 650h1v1h-1zM720 639h1v1h-1zM720 629h1v1h-1zM720 619h1v1h-1zM720 609h1v1h-1zM720 598h1v1h-1zM720 588h1v1h-1zM720 578h1v1h-1zM720 568h1v1h-1zM720 557h1v1h-1zM720 547h1v1h-1zM720 537h1v1h-1zM720 527h1v1h-1zM720 516h1v1h-1zM720 506h1v1h-1zM720 496h1v1h-1zM720 486h1v1h-1zM720 475h1v1h-1zM720 465h1v1h-1zM720 455h1v1h-1zM720 445h1v1h-1zM720 434h1v1h-1zM720 424h1v1h-1zM720 414h1v1h-1zM720 404h1v1h-1zM720 393h1v1h-1zM720 383h1v1h-1zM720 373h1v1h-1zM720 363h1v1h-1zM720 352h1v1h-1zM720 342h1v1h-1zM720 332h1v1h-1zM720 322h1v1h-1zM720 311h1v1h-1zM720 301h1v1h-1zM720 291h1v1h-1zM720 281h1v1h-1zM720 270h1v1h-1zM720 260h1v1h-1zM720 250h1v1h-1zM720 240h1v1h-1zM720 229h1v1h-1zM720 219h1v1h-1zM720 209h1v1h-1zM720 199h1v1h-1zM720 188h1v1h-1zM720 178h1v1h-1zM720 168h1v1h-1zM720 158h1v1h-1zM730 721h1v1h-1zM730 711h1v1h-1zM730 701h1v1h-1zM730 691h1v1h-1zM730 680h1v1h-1zM730 670h1v1h-1zM730 660h1v1h-1zM730 650h1v1h-1zM730 639h1v1h-1zM730 629h1v1h-1zM730 619h1v1h-1zM730 609h1v1h-1zM730 598h1v1h-1zM730 588h1v1h-1zM730 578h1v1h-1zM730 568h1v1h-1zM730 557h1v1h-1zM730 547h1v1h-1zM730 537h1v1h-1zM730 527h1v1h-1zM730 516h1v1h-1zM730 506h1v1h-1zM730 496h1v1h-1zM730 486h1v1h-1zM730 475h1v1h-1zM730 465h1v1h-1zM730 455h1v1h-1zM730 445h1v1h-1zM730 434h1v1h-1zM730 424h1v1h-1zM730 414h1v1h-1zM730 404h1v1h-1zM730 393h1v1h-1zM730 383h1v1h-1zM730 373h1v1h-1zM730 363h1v1h-1zM730 352h1v1h-1zM730 342h1v1h-1zM730 332h1v1h-1zM730 322h1v1h-1zM730 311h1v1h-1zM730 301h1v1h-1zM730 291h1v1h-1zM730 281h1v1h-1zM730 270h1v1h-1zM730 260h1v1h-1zM730 250h1v1h-1zM730 240h1v1h-1zM730 229h1v1h-1zM730 219h1v1h-1zM730 209h1v1h-1zM730 199h1v1h-1zM730 188h1v1h-1zM730 178h1v1h-1zM730 168h1v1h-1zM730 158h1v1h-1zM741 721h1v1h-1zM741 711h1v1h-1zM741 701h1v1h-1zM741 691h1v1h-1zM741 680h1v1h-1zM741 670h1v1h-1zM741 660h1v1h-1zM741 650h1v1h-1zM741 639h1v1h-1zM741 629h1v1h-1zM741 619h1v1h-1zM741 609h1v1h-1zM741 598h1v1h-1zM741 588h1v1h-1zM741 578h1v1h-1zM741 568h1v1h-1zM741 557h1v1h-1zM741 547h1v1h-1zM741 537h1v1h-1zM741 527h1v1h-1zM741 516h1v1h-1zM741 506h1v1h-1zM741 496h1v1h-1zM741 486h1v1h-1zM741 475h1v1h-1zM741 465h1v1h-1zM741 455h1v1h-1zM741 445h1v1h-1zM741 434h1v1h-1zM741 424h1v1h-1zM741 414h1v1h-1zM741 404h1v1h-1zM741 393h1v1h-1zM741 383h1v1h-1zM741 373h1v1h-1zM741 363h1v1h-1zM741 352h1v1h-1zM741 342h1v1h-1zM741 332h1v1h-1zM741 322h1v1h-1zM741 311h1v1h-1zM741 301h1v1h-1zM741 291h1v1h-1zM741 281h1v1h-1zM741 270h1v1h-1zM741 260h1v1h-1zM741 250h1v1h-1zM741 240h1v1h-1zM741 229h1v1h-1zM741 219h1v1h-1zM741 209h1v1h-1zM741 199h1v1h-1zM741 188h1v1h-1zM741 178h1v1h-1zM741 168h1v1h-1zM741 158h1v1h-1zM751 721h1v1h-1zM751 711h1v1h-1zM751 701h1v1h-1zM751 691h1v1h-1zM751 680h1v1h-1zM751 670h1v1h-1zM751 660h1v1h-1zM751 650h1v1h-1zM751 639h1v1h-1zM751 629h1v1h-1zM751 619h1v1h-1zM751 609h1v1h-1zM751 598h1v1h-1zM751 588h1v1h-1zM751 578h1v1h-1zM751 568h1v1h-1zM751 557h1v1h-1zM751 547h1v1h-1zM751 537h1v1h-1zM751 527h1v1h-1zM751 516h1v1h-1zM751 506h1v1h-1zM751 496h1v1h-1zM751 486h1v1h-1zM751 475h1v1h-1zM751 465h1v1h-1zM751 455h1v1h-1zM751 445h1v1h-1zM751 434h1v1h-1zM751 424h1v1h-1zM751 414h1v1h-1zM751 404h1v1h-1zM751 393h1v1h-1zM751 383h1v1h-1zM751 373h1v1h-1zM751 363h1v1h-1zM751 352h1v1h-1zM751 342h1v1h-1zM751 332h1v1h-1zM751 322h1v1h-1zM751 311h1v1h-1zM751 301h1v1h-1zM751 291h1v1h-1zM751 281h1v1h-1zM751 270h1v1h-1zM751 260h1v1h-1zM751 250h1v1h-1zM751 240h1v1h-1zM751 229h1v1h-1zM751 219h1v1h-1zM751 209h1v1h-1zM751 199h1v1h-1zM751 188h1v1h-1zM751 178h1v1h-1zM751 168h1v1h-1zM751 158h1v1h-1zM761 721h1v1h-1zM761 711h1v1h-1zM761 701h1v1h-1zM761 691h1v1h-1zM761 680h1v1h-1zM761 670h1v1h-1zM761 660h1v1h-1zM761 650h1v1h-1zM761 639h1v1h-1zM761 629h1v1h-1zM761 619h1v1h-1zM761 609h1v1h-1zM761 598h1v1h-1zM761 588h1v1h-1zM761 578h1v1h-1zM761 568h1v1h-1zM761 557h1v1h-1zM761 547h1v1h-1zM761 537h1v1h-1zM761 527h1v1h-1zM761 516h1v1h-1zM761 506h1v1h-1zM761 496h1v1h-1zM761 486h1v1h-1zM761 475h1v1h-1zM761 465h1v1h-1zM761 455h1v1h-1zM761 445h1v1h-1zM761 434h1v1h-1zM761 424h1v1h-1zM761 414h1v1h-1zM761 404h1v1h-1zM761 393h1v1h-1zM761 383h1v1h-1zM761 373h1v1h-1zM761 363h1v1h-1zM761 352h1v1h-1zM761 342h1v1h-1zM761 332h1v1h-1zM761 322h1v1h-1zM761 311h1v1h-1zM761 301h1v1h-1zM761 291h1v1h-1zM761 281h1v1h-1zM761 270h1v1h-1zM761 260h1v1h-1zM761 250h1v1h-1zM761 240h1v1h-1zM761 229h1v1h-1zM761 219h1v1h-1zM761 209h1v1h-1zM761 199h1v1h-1zM761 188h1v1h-1zM761 178h1v1h-1zM761 168h1v1h-1zM761 158h1v1h-1zM771 721h1v1h-1zM771 711h1v1h-1zM771 701h1v1h-1zM771 691h1v1h-1zM771 680h1v1h-1zM771 670h1v1h-1zM771 660h1v1h-1zM771 650h1v1h-1zM771 639h1v1h-1zM771 629h1v1h-1zM771 619h1v1h-1zM771 609h1v1h-1zM771 598h1v1h-1zM771 588h1v1h-1zM771 578h1v1h-1zM771 568h1v1h-1zM771 557h1v1h-1zM771 547h1v1h-1zM771 537h1v1h-1zM771 527h1v1h-1zM771 516h1v1h-1zM771 506h1v1h-1zM771 496h1v1h-1zM771 486h1v1h-1zM771 475h1v1h-1zM771 465h1v1h-1zM771 455h1v1h-1zM771 445h1v1h-1zM771 434h1v1h-1zM771 424h1v1h-1zM771 414h1v1h-1zM771 404h1v1h-1zM771 393h1v1h-1zM771 383h1v1h-1zM771 373h1v1h-1zM771 363h1v1h-1zM771 352h1v1h-1zM771 342h1v1h-1zM771 332h1v1h-1zM771 322h1v1h-1zM771 311h1v1h-1zM771 301h1v1h-1zM771 291h1v1h-1zM771 281h1v1h-1zM771 270h1v1h-1zM771 260h1v1h-1zM771 250h1v1h-1zM771 240h1v1h-1zM771 229h1v1h-1zM771 219h1v1h-1zM771 209h1v1h-1zM771 199h1v1h-1zM771 188h1v1h-1zM771 178h1v1h-1zM771 168h1v1h-1zM771 158h1v1h-1zM782 721h1v1h-1zM782 711h1v1h-1zM782 701h1v1h-1zM782 691h1v1h-1zM782 680h1v1h-1zM782 670h1v1h-1zM782 660h1v1h-1zM782 650h1v1h-1zM782 639h1v1h-1zM782 629h1v1h-1zM782 619h1v1h-1zM782 609h1v1h-1zM782 598h1v1h-1zM782 588h1v1h-1zM782 578h1v1h-1zM782 568h1v1h-1zM782 557h1v1h-1zM782 547h1v1h-1zM782 537h1v1h-1zM782 527h1v1h-1zM782 516h1v1h-1zM782 506h1v1h-1zM782 496h1v1h-1zM782 486h1v1h-1zM782 475h1v1h-1zM782 465h1v1h-1zM782 455h1v1h-1zM782 445h1v1h-1zM782 434h1v1h-1zM782 424h1v1h-1zM782 414h1v1h-1zM782 404h1v1h-1zM782 393h1v1h-1zM782 383h1v1h-1zM782 373h1v1h-1zM782 363h1v1h-1zM782 352h1v1h-1zM782 342h1v1h-1zM782 332h1v1h-1zM782 322h1v1h-1zM782 311h1v1h-1zM782 301h1v1h-1zM782 291h1v1h-1zM782 281h1v1h-1zM782 270h1v1h-1zM782 260h1v1h-1zM782 250h1v1h-1zM782 240h1v1h-1zM782 229h1v1h-1zM782 219h1v1h-1zM782 209h1v1h-1zM782 199h1v1h-1zM782 188h1v1h-1zM782 178h1v1h-1zM782 168h1v1h-1zM782 158h1v1h-1zM792 721h1v1h-1zM792 711h1v1h-1zM792 701h1v1h-1zM792 691h1v1h-1zM792 680h1v1h-1zM792 670h1v1h-1zM792 660h1v1h-1zM792 650h1v1h-1zM792 639h1v1h-1zM792 629h1v1h-1zM792 619h1v1h-1zM792 609h1v1h-1zM792 598h1v1h-1zM792 588h1v1h-1zM792 578h1v1h-1zM792 568h1v1h-1zM792 557h1v1h-1zM792 547h1v1h-1zM792 537h1v1h-1zM792 527h1v1h-1zM792 516h1v1h-1zM792 506h1v1h-1zM792 496h1v1h-1zM792 486h1v1h-1zM792 475h1v1h-1zM792 465h1v1h-1zM792 455h1v1h-1zM792 445h1v1h-1zM792 434h1v1h-1zM792 424h1v1h-1zM792 414h1v1h-1zM792 404h1v1h-1zM792 393h1v1h-1zM792 383h1v1h-1zM792 373h1v1h-1zM792 363h1v1h-1zM792 352h1v1h-1zM792 342h1v1h-1zM792 332h1v1h-1zM792 322h1v1h-1zM792 311h1v1h-1zM792 301h1v1h-1zM792 291h1v1h-1zM792 281h1v1h-1zM792 270h1v1h-1zM792 260h1v1h-1zM792 250h1v1h-1zM792 240h1v1h-1zM792 229h1v1h-1zM792 219h1v1h-1zM792 209h1v1h-1zM792 199h1v1h-1zM792 188h1v1h-1zM792 178h1v1h-1zM792 168h1v1h-1zM792 158h1v1h-1zM802 721h1v1h-1zM802 711h1v1h-1zM802 701h1v1h-1zM802 691h1v1h-1zM802 680h1v1h-1zM802 670h1v1h-1zM802 660h1v1h-1zM802 650h1v1h-1zM802 639h1v1h-1zM802 629h1v1h-1zM802 619h1v1h-1zM802 609h1v1h-1zM802 598h1v1h-1zM802 588h1v1h-1zM802 578h1v1h-1zM802 568h1v1h-1zM802 557h1v1h-1zM802 547h1v1h-1zM802 537h1v1h-1zM802 527h1v1h-1zM802 516h1v1h-1zM802 506h1v1h-1zM802 496h1v1h-1zM802 486h1v1h-1zM802 475h1v1h-1zM802 465h1v1h-1zM802 455h1v1h-1zM802 445h1v1h-1zM802 434h1v1h-1zM802 424h1v1h-1zM802 414h1v1h-1zM802 404h1v1h-1zM802 393h1v1h-1zM802 383h1v1h-1zM802 373h1v1h-1zM802 363h1v1h-1zM802 352h1v1h-1zM802 342h1v1h-1zM802 332h1v1h-1zM802 322h1v1h-1zM802 311h1v1h-1zM802 301h1v1h-1zM802 291h1v1h-1zM802 281h1v1h-1zM802 270h1v1h-1zM802 260h1v1h-1zM802 250h1v1h-1zM802 240h1v1h-1zM802 229h1v1h-1zM802 219h1v1h-1zM802 209h1v1h-1zM802 199h1v1h-1zM802 188h1v1h-1zM802 178h1v1h-1zM802 168h1v1h-1zM802 158h1v1h-1zM812 721h1v1h-1zM812 711h1v1h-1zM812 701h1v1h-1zM812 691h1v1h-1zM812 680h1v1h-1zM812 670h1v1h-1zM812 660h1v1h-1zM812 650h1v1h-1zM812 639h1v1h-1zM812 629h1v1h-1zM812 619h1v1h-1zM812 609h1v1h-1zM812 598h1v1h-1zM812 588h1v1h-1zM812 578h1v1h-1zM812 568h1v1h-1zM812 557h1v1h-1zM812 547h1v1h-1zM812 537h1v1h-1zM812 527h1v1h-1zM812 516h1v1h-1zM812 506h1v1h-1zM812 496h1v1h-1zM812 486h1v1h-1zM812 475h1v1h-1zM812 465h1v1h-1zM812 455h1v1h-1zM812 445h1v1h-1zM812 434h1v1h-1zM812 424h1v1h-1zM812 414h1v1h-1zM812 404h1v1h-1zM812 393h1v1h-1zM812 383h1v1h-1zM812 373h1v1h-1zM812 363h1v1h-1zM812 352h1v1h-1zM812 342h1v1h-1zM812 332h1v1h-1zM812 322h1v1h-1zM812 311h1v1h-1zM812 301h1v1h-1zM812 291h1v1h-1zM812 281h1v1h-1zM812 270h1v1h-1zM812 260h1v1h-1zM812 250h1v1h-1zM812 240h1v1h-1zM812 229h1v1h-1zM812 219h1v1h-1zM812 209h1v1h-1zM812 199h1v1h-1zM812 188h1v1h-1zM812 178h1v1h-1zM812 168h1v1h-1zM812 158h1v1h-1zM823 721h1v1h-1zM823 711h1v1h-1zM823 701h1v1h-1zM823 691h1v1h-1zM823 680h1v1h-1zM823 670h1v1h-1zM823 660h1v1h-1zM823 650h1v1h-1zM823 639h1v1h-1zM823 629h1v1h-1zM823 619h1v1h-1zM823 609h1v1h-1zM823 598h1v1h-1zM823 588h1v1h-1zM823 578h1v1h-1zM823 568h1v1h-1zM823 557h1v1h-1zM823 547h1v1h-1zM823 537h1v1h-1zM823 527h1v1h-1zM823 516h1v1h-1zM823 506h1v1h-1zM823 496h1v1h-1zM823 486h1v1h-1zM823 475h1v1h-1zM823 465h1v1h-1zM823 455h1v1h-1zM823 445h1v1h-1zM823 434h1v1h-1zM823 424h1v1h-1zM823 414h1v1h-1zM823 404h1v1h-1zM823 393h1v1h-1zM823 383h1v1h-1zM823 373h1v1h-1zM823 363h1v1h-1zM823 352h1v1h-1zM823 342h1v1h-1zM823 332h1v1h-1zM823 322h1v1h-1zM823 311h1v1h-1zM823 301h1v1h-1zM823 291h1v1h-1zM823 281h1v1h-1zM823 270h1v1h-1zM823 260h1v1h-1zM823 250h1v1h-1zM823 240h1v1h-1zM823 229h1v1h-1zM823 219h1v1h-1zM823 209h1v1h-1zM823 199h1v1h-1zM823 188h1v1h-1zM823 178h1v1h-1zM823 168h1v1h-1zM823 158h1v1h-1zM833 721h1v1h-1zM833 711h1v1h-1zM833 701h1v1h-1zM833 691h1v1h-1zM833 680h1v1h-1zM833 670h1v1h-1zM833 660h1v1h-1zM833 650h1v1h-1zM833 639h1v1h-1zM833 629h1v1h-1zM833 619h1v1h-1zM833 609h1v1h-1zM833 598h1v1h-1zM833 588h1v1h-1zM833 578h1v1h-1zM833 568h1v1h-1zM833 557h1v1h-1zM833 547h1v1h-1zM833 537h1v1h-1zM833 527h1v1h-1zM833 516h1v1h-1zM833 506h1v1h-1zM833 496h1v1h-1zM833 486h1v1h-1zM833 475h1v1h-1zM833 465h1v1h-1zM833 455h1v1h-1zM833 445h1v1h-1zM833 434h1v1h-1zM833 424h1v1h-1zM833 414h1v1h-1zM833 404h1v1h-1zM833 393h1v1h-1zM833 383h1v1h-1zM833 373h1v1h-1zM833 363h1v1h-1zM833 352h1v1h-1zM833 342h1v1h-1zM833 332h1v1h-1zM833 322h1v1h-1zM833 311h1v1h-1zM833 301h1v1h-1zM833 291h1v1h-1zM833 281h1v1h-1zM833 270h1v1h-1zM833 260h1v1h-1zM833 250h1v1h-1zM833 240h1v1h-1zM833 229h1v1h-1zM833 219h1v1h-1zM833 209h1v1h-1zM833 199h1v1h-1zM833 188h1v1h-1zM833 178h1v1h-1zM833 168h1v1h-1zM833 158h1v1h-1zM843 721h1v1h-1zM843 711h1v1h-1zM843 701h1v1h-1zM843 691h1v1h-1zM843 680h1v1h-1zM843 670h1v1h-1zM843 660h1v1h-1zM843 650h1v1h-1zM843 639h1v1h-1zM843 629h1v1h-1zM843 619h1v1h-1zM843 609h1v1h-1zM843 598h1v1h-1zM843 588h1v1h-1zM843 578h1v1h-1zM843 568h1v1h-1zM843 557h1v1h-1zM843 547h1v1h-1zM843 537h1v1h-1zM843 527h1v1h-1zM843 516h1v1h-1zM843 506h1v1h-1zM843 496h1v1h-1zM843 486h1v1h-1zM843 475h1v1h-1zM843 465h1v1h-1zM843 455h1v1h-1zM843 445h1v1h-1zM843 434h1v1h-1zM843 424h1v1h-1zM843 414h1v1h-1zM843 404h1v1h-1zM843 393h1v1h-1zM843 383h1v1h-1zM843 373h1v1h-1zM843 363h1v1h-1zM843 352h1v1h-1zM843 342h1v1h-1zM843 332h1v1h-1zM843 322h1v1h-1zM843 311h1v1h-1zM843 301h1v1h-1zM843 291h1v1h-1zM843 281h1v1h-1zM843 270h1v1h-1zM843 260h1v1h-1zM843 250h1v1h-1zM843 240h1v1h-1zM843 229h1v1h-1zM843 219h1v1h-1zM843 209h1v1h-1zM843 199h1v1h-1zM843 188h1v1h-1zM843 178h1v1h-1zM843 168h1v1h-1zM843 158h1v1h-1zM853 721h1v1h-1zM853 711h1v1h-1zM853 701h1v1h-1zM853 691h1v1h-1zM853 680h1v1h-1zM853 670h1v1h-1zM853 660h1v1h-1zM853 650h1v1h-1zM853 639h1v1h-1zM853 629h1v1h-1zM853 619h1v1h-1zM853 609h1v1h-1zM853 598h1v1h-1zM853 588h1v1h-1zM853 578h1v1h-1zM853 568h1v1h-1zM853 557h1v1h-1zM853 547h1v1h-1zM853 537h1v1h-1zM853 527h1v1h-1zM853 516h1v1h-1zM853 506h1v1h-1zM853 496h1v1h-1zM853 486h1v1h-1zM853 475h1v1h-1zM853 465h1v1h-1zM853 455h1v1h-1zM853 445h1v1h-1zM853 434h1v1h-1zM853 424h1v1h-1zM853 414h1v1h-1zM853 404h1v1h-1zM853 393h1v1h-1zM853 383h1v1h-1zM853 373h1v1h-1zM853 363h1v1h-1zM853 352h1v1h-1zM853 342h1v1h-1zM853 332h1v1h-1zM853 322h1v1h-1zM853 311h1v1h-1zM853 301h1v1h-1zM853 291h1v1h-1zM853 281h1v1h-1zM853 270h1v1h-1zM853 260h1v1h-1zM853 250h1v1h-1zM853 240h1v1h-1zM853 229h1v1h-1zM853 219h1v1h-1zM853 209h1v1h-1zM853 199h1v1h-1zM853 188h1v1h-1zM853 178h1v1h-1zM853 168h1v1h-1zM853 158h1v1h-1zM864 721h1v1h-1zM864 711h1v1h-1zM864 701h1v1h-1zM864 691h1v1h-1zM864 680h1v1h-1zM864 670h1v1h-1zM864 660h1v1h-1zM864 650h1v1h-1zM864 639h1v1h-1zM864 629h1v1h-1zM864 619h1v1h-1zM864 609h1v1h-1zM864 598h1v1h-1zM864 588h1v1h-1zM864 578h1v1h-1zM864 568h1v1h-1zM864 557h1v1h-1zM864 547h1v1h-1zM864 537h1v1h-1zM864 527h1v1h-1zM864 516h1v1h-1zM864 506h1v1h-1zM864 496h1v1h-1zM864 486h1v1h-1zM864 475h1v1h-1zM864 465h1v1h-1zM864 455h1v1h-1zM864 445h1v1h-1zM864 434h1v1h-1zM864 424h1v1h-1zM864 414h1v1h-1zM864 404h1v1h-1zM864 393h1v1h-1zM864 383h1v1h-1zM864 373h1v1h-1zM864 363h1v1h-1zM864 352h1v1h-1zM864 342h1v1h-1zM864 332h1v1h-1zM864 322h1v1h-1zM864 311h1v1h-1zM864 301h1v1h-1zM864 291h1v1h-1zM864 281h1v1h-1zM864 270h1v1h-1zM864 260h1v1h-1zM864 250h1v1h-1zM864 240h1v1h-1zM864 229h1v1h-1zM864 219h1v1h-1zM864 209h1v1h-1zM864 199h1v1h-1zM864 188h1v1h-1zM864 178h1v1h-1zM864 168h1v1h-1zM864 158h1v1h-1zM874 721h1v1h-1zM874 711h1v1h-1zM874 701h1v1h-1zM874 691h1v1h-1zM874 680h1v1h-1zM874 670h1v1h-1zM874 660h1v1h-1zM874 650h1v1h-1zM874 639h1v1h-1zM874 629h1v1h-1zM874 619h1v1h-1zM874 609h1v1h-1zM874 598h1v1h-1zM874 588h1v1h-1zM874 578h1v1h-1zM874 568h1v1h-1zM874 557h1v1h-1zM874 547h1v1h-1zM874 537h1v1h-1zM874 527h1v1h-1zM874 516h1v1h-1zM874 506h1v1h-1zM874 496h1v1h-1zM874 486h1v1h-1zM874 475h1v1h-1zM874 465h1v1h-1zM874 455h1v1h-1zM874 445h1v1h-1zM874 434h1v1h-1zM874 424h1v1h-1zM874 414h1v1h-1zM874 404h1v1h-1zM874 393h1v1h-1zM874 383h1v1h-1zM874 373h1v1h-1zM874 363h1v1h-1zM874 352h1v1h-1zM874 342h1v1h-1zM874 332h1v1h-1zM874 322h1v1h-1zM874 311h1v1h-1zM874 301h1v1h-1zM874 291h1v1h-1zM874 281h1v1h-1zM874 270h1v1h-1zM874 260h1v1h-1zM874 250h1v1h-1zM874 240h1v1h-1zM874 229h1v1h-1zM874 219h1v1h-1zM874 209h1v1h-1zM874 199h1v1h-1zM874 188h1v1h-1zM874 178h1v1h-1zM874 168h1v1h-1zM874 158h1v1h-1zM884 721h1v1h-1zM884 711h1v1h-1zM884 701h1v1h-1zM884 691h1v1h-1zM884 680h1v1h-1zM884 670h1v1h-1zM884 660h1v1h-1zM884 650h1v1h-1zM884 639h1v1h-1zM884 629h1v1h-1zM884 619h1v1h-1zM884 609h1v1h-1zM884 598h1v1h-1zM884 588h1v1h-1zM884 578h1v1h-1zM884 568h1v1h-1zM884 557h1v1h-1zM884 547h1v1h-1zM884 537h1v1h-1zM884 527h1v1h-1zM884 516h1v1h-1zM884 506h1v1h-1zM884 496h1v1h-1zM884 486h1v1h-1zM884 475h1v1h-1zM884 465h1v1h-1zM884 455h1v1h-1zM884 445h1v1h-1zM884 434h1v1h-1zM884 424h1v1h-1zM884 414h1v1h-1zM884 404h1v1h-1zM884 393h1v1h-1zM884 383h1v1h-1zM884 373h1v1h-1zM884 363h1v1h-1zM884 352h1v1h-1zM884 342h1v1h-1zM884 332h1v1h-1zM884 322h1v1h-1zM884 311h1v1h-1zM884 301h1v1h-1zM884 291h1v1h-1zM884 281h1v1h-1zM884 270h1v1h-1zM884 260h1v1h-1zM884 250h1v1h-1zM884 240h1v1h-1zM884 229h1v1h-1zM884 219h1v1h-1zM884 209h1v1h-1zM884 199h1v1h-1zM884 188h1v1h-1zM884 178h1v1h-1zM884 168h1v1h-1zM884 158h1v1h-1zM894 721h1v1h-1zM894 711h1v1h-1zM894 701h1v1h-1zM894 691h1v1h-1zM894 680h1v1h-1zM894 670h1v1h-1zM894 660h1v1h-1zM894 650h1v1h-1zM894 639h1v1h-1zM894 629h1v1h-1zM894 619h1v1h-1zM894 609h1v1h-1zM894 598h1v1h-1zM894 588h1v1h-1zM894 578h1v1h-1zM894 568h1v1h-1zM894 557h1v1h-1zM894 547h1v1h-1zM894 537h1v1h-1zM894 527h1v1h-1zM894 516h1v1h-1zM894 506h1v1h-1zM894 496h1v1h-1zM894 486h1v1h-1zM894 475h1v1h-1zM894 465h1v1h-1zM894 455h1v1h-1zM894 445h1v1h-1zM894 434h1v1h-1zM894 424h1v1h-1zM894 414h1v1h-1zM894 404h1v1h-1zM894 393h1v1h-1zM894 383h1v1h-1zM894 373h1v1h-1zM894 363h1v1h-1zM894 352h1v1h-1zM894 342h1v1h-1zM894 332h1v1h-1zM894 322h1v1h-1zM894 311h1v1h-1zM894 301h1v1h-1zM894 291h1v1h-1zM894 281h1v1h-1zM894 270h1v1h-1zM894 260h1v1h-1zM894 250h1v1h-1zM894 240h1v1h-1zM894 229h1v1h-1zM894 219h1v1h-1zM894 209h1v1h-1zM894 199h1v1h-1zM894 188h1v1h-1zM894 178h1v1h-1zM894 168h1v1h-1zM894 158h1v1h-1zM905 721h1v1h-1zM905 711h1v1h-1zM905 701h1v1h-1zM905 691h1v1h-1zM905 680h1v1h-1zM905 670h1v1h-1zM905 660h1v1h-1zM905 650h1v1h-1zM905 639h1v1h-1zM905 629h1v1h-1zM905 619h1v1h-1zM905 609h1v1h-1zM905 598h1v1h-1zM905 588h1v1h-1zM905 578h1v1h-1zM905 568h1v1h-1zM905 557h1v1h-1zM905 547h1v1h-1zM905 537h1v1h-1zM905 527h1v1h-1zM905 516h1v1h-1zM905 506h1v1h-1zM905 496h1v1h-1zM905 486h1v1h-1zM905 475h1v1h-1zM905 465h1v1h-1zM905 455h1v1h-1zM905 445h1v1h-1zM905 434h1v1h-1zM905 424h1v1h-1zM905 414h1v1h-1zM905 404h1v1h-1zM905 393h1v1h-1zM905 383h1v1h-1zM905 373h1v1h-1zM905 363h1v1h-1zM905 352h1v1h-1zM905 342h1v1h-1zM905 332h1v1h-1zM905 322h1v1h-1zM905 311h1v1h-1zM905 301h1v1h-1zM905 291h1v1h-1zM905 281h1v1h-1zM905 270h1v1h-1zM905 260h1v1h-1zM905 250h1v1h-1zM905 240h1v1h-1zM905 229h1v1h-1zM905 219h1v1h-1zM905 209h1v1h-1zM905 199h1v1h-1zM905 188h1v1h-1zM905 178h1v1h-1zM905 168h1v1h-1zM905 158h1v1h-1zM915 721h1v1h-1zM915 711h1v1h-1zM915 701h1v1h-1zM915 691h1v1h-1zM915 680h1v1h-1zM915 670h1v1h-1zM915 660h1v1h-1zM915 650h1v1h-1zM915 639h1v1h-1zM915 629h1v1h-1zM915 619h1v1h-1zM915 609h1v1h-1zM915 598h1v1h-1zM915 588h1v1h-1zM915 578h1v1h-1zM915 568h1v1h-1zM915 557h1v1h-1zM915 547h1v1h-1zM915 537h1v1h-1zM915 527h1v1h-1zM915 516h1v1h-1zM915 506h1v1h-1zM915 496h1v1h-1zM915 486h1v1h-1zM915 475h1v1h-1zM915 465h1v1h-1zM915 455h1v1h-1zM915 445h1v1h-1zM915 434h1v1h-1zM915 424h1v1h-1zM915 414h1v1h-1zM915 404h1v1h-1zM915 393h1v1h-1zM915 383h1v1h-1zM915 373h1v1h-1zM915 363h1v1h-1zM915 352h1v1h-1zM915 342h1v1h-1zM915 332h1v1h-1zM915 322h1v1h-1zM915 311h1v1h-1zM915 301h1v1h-1zM915 291h1v1h-1zM915 281h1v1h-1zM915 270h1v1h-1zM915 260h1v1h-1zM915 250h1v1h-1zM915 240h1v1h-1zM915 229h1v1h-1zM915 219h1v1h-1zM915 209h1v1h-1zM915 199h1v1h-1zM915 188h1v1h-1zM915 178h1v1h-1zM915 168h1v1h-1zM915 158h1v1h-1zM925 721h1v1h-1zM925 711h1v1h-1zM925 701h1v1h-1zM925 691h1v1h-1zM925 680h1v1h-1zM925 670h1v1h-1zM925 660h1v1h-1zM925 650h1v1h-1zM925 639h1v1h-1zM925 629h1v1h-1zM925 619h1v1h-1zM925 609h1v1h-1zM925 598h1v1h-1zM925 588h1v1h-1zM925 578h1v1h-1zM925 568h1v1h-1zM925 557h1v1h-1zM925 547h1v1h-1zM925 537h1v1h-1zM925 527h1v1h-1zM925 516h1v1h-1zM925 506h1v1h-1zM925 496h1v1h-1zM925 486h1v1h-1zM925 475h1v1h-1zM925 465h1v1h-1zM925 455h1v1h-1zM925 445h1v1h-1zM925 434h1v1h-1zM925 424h1v1h-1zM925 414h1v1h-1zM925 404h1v1h-1zM925 393h1v1h-1zM925 383h1v1h-1zM925 373h1v1h-1zM925 363h1v1h-1zM925 352h1v1h-1zM925 342h1v1h-1zM925 332h1v1h-1zM925 322h1v1h-1zM925 311h1v1h-1zM925 301h1v1h-1zM925 291h1v1h-1zM925 281h1v1h-1zM925 270h1v1h-1zM925 260h1v1h-1zM925 250h1v1h-1zM925 240h1v1h-1zM925 229h1v1h-1zM925 219h1v1h-1zM925 209h1v1h-1zM925 199h1v1h-1zM925 188h1v1h-1zM925 178h1v1h-1zM925 168h1v1h-1zM925 158h1v1h-1zM935 721h1v1h-1zM935 711h1v1h-1zM935 701h1v1h-1zM935 691h1v1h-1zM935 680h1v1h-1zM935 670h1v1h-1zM935 660h1v1h-1zM935 650h1v1h-1zM935 639h1v1h-1zM935 629h1v1h-1zM935 619h1v1h-1zM935 609h1v1h-1zM935 598h1v1h-1zM935 588h1v1h-1zM935 578h1v1h-1zM935 568h1v1h-1zM935 557h1v1h-1zM935 547h1v1h-1zM935 537h1v1h-1zM935 527h1v1h-1zM935 516h1v1h-1zM935 506h1v1h-1zM935 496h1v1h-1zM935 486h1v1h-1zM935 475h1v1h-1zM935 465h1v1h-1zM935 455h1v1h-1zM935 445h1v1h-1zM935 434h1v1h-1zM935 424h1v1h-1zM935 414h1v1h-1zM935 404h1v1h-1zM935 393h1v1h-1zM935 383h1v1h-1zM935 373h1v1h-1zM935 363h1v1h-1zM935 352h1v1h-1zM935 342h1v1h-1zM935 332h1v1h-1zM935 322h1v1h-1zM935 311h1v1h-1zM935 301h1v1h-1zM935 291h1v1h-1zM935 281h1v1h-1zM935 270h1v1h-1zM935 260h1v1h-1zM935 250h1v1h-1zM935 240h1v1h-1zM935 229h1v1h-1zM935 219h1v1h-1zM935 209h1v1h-1zM935 199h1v1h-1zM935 188h1v1h-1zM935 178h1v1h-1zM935 168h1v1h-1zM935 158h1v1h-1zM946 721h1v1h-1zM946 711h1v1h-1zM946 701h1v1h-1zM946 691h1v1h-1zM946 680h1v1h-1zM946 670h1v1h-1zM946 660h1v1h-1zM946 650h1v1h-1zM946 639h1v1h-1zM946 629h1v1h-1zM946 619h1v1h-1zM946 609h1v1h-1zM946 598h1v1h-1zM946 588h1v1h-1zM946 578h1v1h-1zM946 568h1v1h-1zM946 557h1v1h-1zM946 547h1v1h-1zM946 537h1v1h-1zM946 527h1v1h-1zM946 516h1v1h-1zM946 506h1v1h-1zM946 496h1v1h-1zM946 486h1v1h-1zM946 475h1v1h-1zM946 465h1v1h-1zM946 455h1v1h-1zM946 445h1v1h-1zM946 434h1v1h-1zM946 424h1v1h-1zM946 414h1v1h-1zM946 404h1v1h-1zM946 393h1v1h-1zM946 383h1v1h-1zM946 373h1v1h-1zM946 363h1v1h-1zM946 352h1v1h-1zM946 342h1v1h-1zM946 332h1v1h-1zM946 322h1v1h-1zM946 311h1v1h-1zM946 301h1v1h-1zM946 291h1v1h-1zM946 281h1v1h-1zM946 270h1v1h-1zM946 260h1v1h-1zM946 250h1v1h-1zM946 240h1v1h-1zM946 229h1v1h-1zM946 219h1v1h-1zM946 209h1v1h-1zM946 199h1v1h-1zM946 188h1v1h-1zM946 178h1v1h-1zM946 168h1v1h-1zM946 158h1v1h-1zM956 721h1v1h-1zM956 711h1v1h-1zM956 701h1v1h-1zM956 691h1v1h-1zM956 680h1v1h-1zM956 670h1v1h-1zM956 660h1v1h-1zM956 650h1v1h-1zM956 639h1v1h-1zM956 629h1v1h-1zM956 619h1v1h-1zM956 609h1v1h-1zM956 598h1v1h-1zM956 588h1v1h-1zM956 578h1v1h-1zM956 568h1v1h-1zM956 557h1v1h-1zM956 547h1v1h-1zM956 537h1v1h-1zM956 527h1v1h-1zM956 516h1v1h-1zM956 506h1v1h-1zM956 496h1v1h-1zM956 486h1v1h-1zM956 475h1v1h-1zM956 465h1v1h-1zM956 455h1v1h-1zM956 445h1v1h-1zM956 434h1v1h-1zM956 424h1v1h-1zM956 414h1v1h-1zM956 404h1v1h-1zM956 393h1v1h-1zM956 383h1v1h-1zM956 373h1v1h-1zM956 363h1v1h-1zM956 352h1v1h-1zM956 342h1v1h-1zM956 332h1v1h-1zM956 322h1v1h-1zM956 311h1v1h-1zM956 301h1v1h-1zM956 291h1v1h-1zM956 281h1v1h-1zM956 270h1v1h-1zM956 260h1v1h-1zM956 250h1v1h-1zM956 240h1v1h-1zM956 229h1v1h-1zM956 219h1v1h-1zM956 209h1v1h-1zM956 199h1v1h-1zM956 188h1v1h-1zM956 178h1v1h-1zM956 168h1v1h-1zM956 158h1v1h-1zM966 721h1v1h-1zM966 711h1v1h-1zM966 701h1v1h-1zM966 691h1v1h-1zM966 680h1v1h-1zM966 670h1v1h-1zM966 660h1v1h-1zM966 650h1v1h-1zM966 639h1v1h-1zM966 629h1v1h-1zM966 619h1v1h-1zM966 609h1v1h-1zM966 598h1v1h-1zM966 588h1v1h-1zM966 578h1v1h-1zM966 568h1v1h-1zM966 557h1v1h-1zM966 547h1v1h-1zM966 537h1v1h-1zM966 527h1v1h-1zM966 516h1v1h-1zM966 506h1v1h-1zM966 496h1v1h-1zM966 486h1v1h-1zM966 475h1v1h-1zM966 465h1v1h-1zM966 455h1v1h-1zM966 445h1v1h-1zM966 434h1v1h-1zM966 424h1v1h-1zM966 414h1v1h-1zM966 404h1v1h-1zM966 393h1v1h-1zM966 383h1v1h-1zM966 373h1v1h-1zM966 363h1v1h-1zM966 352h1v1h-1zM966 342h1v1h-1zM966 332h1v1h-1zM966 322h1v1h-1zM966 311h1v1h-1zM966 301h1v1h-1zM966 291h1v1h-1zM966 281h1v1h-1zM966 270h1v1h-1zM966 260h1v1h-1zM966 250h1v1h-1zM966 240h1v1h-1zM966 229h1v1h-1zM966 219h1v1h-1zM966 209h1v1h-1zM966 199h1v1h-1zM966 188h1v1h-1zM966 178h1v1h-1zM966 168h1v1h-1zM966 158h1v1h-1zM976 721h1v1h-1zM976 711h1v1h-1zM976 701h1v1h-1zM976 691h1v1h-1zM976 680h1v1h-1zM976 670h1v1h-1zM976 660h1v1h-1zM976 650h1v1h-1zM976 639h1v1h-1zM976 629h1v1h-1zM976 619h1v1h-1zM976 609h1v1h-1zM976 598h1v1h-1zM976 588h1v1h-1zM976 578h1v1h-1zM976 568h1v1h-1zM976 557h1v1h-1zM976 547h1v1h-1zM976 537h1v1h-1zM976 527h1v1h-1zM976 516h1v1h-1zM976 506h1v1h-1zM976 496h1v1h-1zM976 486h1v1h-1zM976 475h1v1h-1zM976 465h1v1h-1zM976 455h1v1h-1zM976 445h1v1h-1zM976 434h1v1h-1zM976 424h1v1h-1zM976 414h1v1h-1zM976 404h1v1h-1zM976 393h1v1h-1zM976 383h1v1h-1zM976 373h1v1h-1zM976 363h1v1h-1zM976 352h1v1h-1zM976 342h1v1h-1zM976 332h1v1h-1zM976 322h1v1h-1zM976 311h1v1h-1zM976 301h1v1h-1zM976 291h1v1h-1zM976 281h1v1h-1zM976 270h1v1h-1zM976 260h1v1h-1zM976 250h1v1h-1zM976 240h1v1h-1zM976 229h1v1h-1zM976 219h1v1h-1zM976 209h1v1h-1zM976 199h1v1h-1zM976 188h1v1h-1zM976 178h1v1h-1zM976 168h1v1h-1zM976 158h1v1h-1zM987 721h1v1h-1zM987 711h1v1h-1zM987 701h1v1h-1zM987 691h1v1h-1zM987 680h1v1h-1zM987 670h1v1h-1zM987 660h1v1h-1zM987 650h1v1h-1zM987 639h1v1h-1zM987 629h1v1h-1zM987 619h1v1h-1zM987 609h1v1h-1zM987 598h1v1h-1zM987 588h1v1h-1zM987 578h1v1h-1zM987 568h1v1h-1zM987 557h1v1h-1zM987 547h1v1h-1zM987 537h1v1h-1zM987 527h1v1h-1zM987 516h1v1h-1zM987 506h1v1h-1zM987 496h1v1h-1zM987 486h1v1h-1zM987 475h1v1h-1zM987 465h1v1h-1zM987 455h1v1h-1zM987 445h1v1h-1zM987 434h1v1h-1zM987 424h1v1h-1zM987 414h1v1h-1zM987 404h1v1h-1zM987 393h1v1h-1zM987 383h1v1h-1zM987 373h1v1h-1zM987 363h1v1h-1zM987 352h1v1h-1zM987 342h1v1h-1zM987 332h1v1h-1zM987 322h1v1h-1zM987 311h1v1h-1zM987 301h1v1h-1zM987 291h1v1h-1zM987 281h1v1h-1zM987 270h1v1h-1zM987 260h1v1h-1zM987 250h1v1h-1zM987 240h1v1h-1zM987 229h1v1h-1zM987 219h1v1h-1zM987 209h1v1h-1zM987 199h1v1h-1zM987 188h1v1h-1zM987 178h1v1h-1zM987 168h1v1h-1zM987 158h1v1h-1zM997 721h1v1h-1zM997 711h1v1h-1zM997 701h1v1h-1zM997 691h1v1h-1zM997 680h1v1h-1zM997 670h1v1h-1zM997 660h1v1h-1zM997 650h1v1h-1zM997 639h1v1h-1zM997 629h1v1h-1zM997 619h1v1h-1zM997 609h1v1h-1zM997 598h1v1h-1zM997 588h1v1h-1zM997 578h1v1h-1zM997 568h1v1h-1zM997 557h1v1h-1zM997 547h1v1h-1zM997 537h1v1h-1zM997 527h1v1h-1zM997 516h1v1h-1zM997 506h1v1h-1zM997 496h1v1h-1zM997 486h1v1h-1zM997 475h1v1h-1zM997 465h1v1h-1zM997 455h1v1h-1zM997 445h1v1h-1zM997 434h1v1h-1zM997 424h1v1h-1zM997 414h1v1h-1zM997 404h1v1h-1zM997 393h1v1h-1zM997 383h1v1h-1zM997 373h1v1h-1zM997 363h1v1h-1zM997 352h1v1h-1zM997 342h1v1h-1zM997 332h1v1h-1zM997 322h1v1h-1zM997 311h1v1h-1zM997 301h1v1h-1zM997 291h1v1h-1zM997 281h1v1h-1zM997 270h1v1h-1zM997 260h1v1h-1zM997 250h1v1h-1zM997 240h1v1h-1zM997 229h1v1h-1zM997 219h1v1h-1zM997 209h1v1h-1zM997 199h1v1h-1zM997 188h1v1h-1zM997 178h1v1h-1zM997 168h1v1h-1zM997 158h1v1h-1zM1007 721h1v1h-1zM1007 711h1v1h-1zM1007 701h1v1h-1zM1007 691h1v1h-1zM1007 680h1v1h-1zM1007 670h1v1h-1zM1007 660h1v1h-1zM1007 650h1v1h-1zM1007 639h1v1h-1zM1007 629h1v1h-1zM1007 619h1v1h-1zM1007 609h1v1h-1zM1007 598h1v1h-1zM1007 588h1v1h-1zM1007 578h1v1h-1zM1007 568h1v1h-1zM1007 557h1v1h-1zM1007 547h1v1h-1zM1007 537h1v1h-1zM1007 527h1v1h-1zM1007 516h1v1h-1zM1007 506h1v1h-1zM1007 496h1v1h-1zM1007 486h1v1h-1zM1007 475h1v1h-1zM1007 465h1v1h-1zM1007 455h1v1h-1zM1007 445h1v1h-1zM1007 434h1v1h-1zM1007 424h1v1h-1zM1007 414h1v1h-1zM1007 404h1v1h-1zM1007 393h1v1h-1zM1007 383h1v1h-1zM1007 373h1v1h-1zM1007 363h1v1h-1zM1007 352h1v1h-1zM1007 342h1v1h-1zM1007 332h1v1h-1zM1007 322h1v1h-1zM1007 311h1v1h-1zM1007 301h1v1h-1zM1007 291h1v1h-1zM1007 281h1v1h-1zM1007 270h1v1h-1zM1007 260h1v1h-1zM1007 250h1v1h-1zM1007 240h1v1h-1zM1007 229h1v1h-1zM1007 219h1v1h-1zM1007 209h1v1h-1zM1007 199h1v1h-1zM1007 188h1v1h-1zM1007 178h1v1h-1zM1007 168h1v1h-1zM1007 158h1v1h-1zM1017 721h1v1h-1zM1017 711h1v1h-1zM1017 701h1v1h-1zM1017 691h1v1h-1zM1017 680h1v1h-1zM1017 670h1v1h-1zM1017 660h1v1h-1zM1017 650h1v1h-1zM1017 639h1v1h-1zM1017 629h1v1h-1zM1017 619h1v1h-1zM1017 609h1v1h-1zM1017 598h1v1h-1zM1017 588h1v1h-1zM1017 578h1v1h-1zM1017 568h1v1h-1zM1017 557h1v1h-1zM1017 547h1v1h-1zM1017 537h1v1h-1zM1017 527h1v1h-1zM1017 516h1v1h-1zM1017 506h1v1h-1zM1017 496h1v1h-1zM1017 486h1v1h-1zM1017 475h1v1h-1zM1017 465h1v1h-1zM1017 455h1v1h-1zM1017 445h1v1h-1zM1017 434h1v1h-1zM1017 424h1v1h-1zM1017 414h1v1h-1zM1017 404h1v1h-1zM1017 393h1v1h-1zM1017 383h1v1h-1zM1017 373h1v1h-1zM1017 363h1v1h-1zM1017 352h1v1h-1zM1017 342h1v1h-1zM1017 332h1v1h-1zM1017 322h1v1h-1zM1017 311h1v1h-1zM1017 301h1v1h-1zM1017 291h1v1h-1zM1017 281h1v1h-1zM1017 270h1v1h-1zM1017 260h1v1h-1zM1017 250h1v1h-1zM1017 240h1v1h-1zM1017 229h1v1h-1zM1017 219h1v1h-1zM1017 209h1v1h-1zM1017 199h1v1h-1zM1017 188h1v1h-1zM1017 178h1v1h-1zM1017 168h1v1h-1zM1017 158h1v1h-1zM1028 721h1v1h-1zM1028 711h1v1h-1zM1028 701h1v1h-1zM1028 691h1v1h-1zM1028 680h1v1h-1zM1028 670h1v1h-1zM1028 660h1v1h-1zM1028 650h1v1h-1zM1028 639h1v1h-1zM1028 629h1v1h-1zM1028 619h1v1h-1zM1028 609h1v1h-1zM1028 598h1v1h-1zM1028 588h1v1h-1zM1028 578h1v1h-1zM1028 568h1v1h-1zM1028 557h1v1h-1zM1028 547h1v1h-1zM1028 537h1v1h-1zM1028 527h1v1h-1zM1028 516h1v1h-1zM1028 506h1v1h-1zM1028 496h1v1h-1zM1028 486h1v1h-1zM1028 475h1v1h-1zM1028 465h1v1h-1zM1028 455h1v1h-1zM1028 445h1v1h-1zM1028 434h1v1h-1zM1028 424h1v1h-1zM1028 414h1v1h-1zM1028 404h1v1h-1zM1028 393h1v1h-1zM1028 383h1v1h-1zM1028 373h1v1h-1zM1028 363h1v1h-1zM1028 352h1v1h-1zM1028 342h1v1h-1zM1028 332h1v1h-1zM1028 322h1v1h-1zM1028 311h1v1h-1zM1028 301h1v1h-1zM1028 291h1v1h-1zM1028 281h1v1h-1zM1028 270h1v1h-1zM1028 260h1v1h-1zM1028 250h1v1h-1zM1028 240h1v1h-1zM1028 229h1v1h-1zM1028 219h1v1h-1zM1028 209h1v1h-1zM1028 199h1v1h-1zM1028 188h1v1h-1zM1028 178h1v1h-1zM1028 168h1v1h-1zM1028 158h1v1h-1zM1038 721h1v1h-1zM1038 711h1v1h-1zM1038 701h1v1h-1zM1038 691h1v1h-1zM1038 680h1v1h-1zM1038 670h1v1h-1zM1038 660h1v1h-1zM1038 650h1v1h-1zM1038 639h1v1h-1zM1038 629h1v1h-1zM1038 619h1v1h-1zM1038 609h1v1h-1zM1038 598h1v1h-1zM1038 588h1v1h-1zM1038 578h1v1h-1zM1038 568h1v1h-1zM1038 557h1v1h-1zM1038 547h1v1h-1zM1038 537h1v1h-1zM1038 527h1v1h-1zM1038 516h1v1h-1zM1038 506h1v1h-1zM1038 496h1v1h-1zM1038 486h1v1h-1zM1038 475h1v1h-1zM1038 465h1v1h-1zM1038 455h1v1h-1zM1038 445h1v1h-1zM1038 434h1v1h-1zM1038 424h1v1h-1zM1038 414h1v1h-1zM1038 404h1v1h-1zM1038 393h1v1h-1zM1038 383h1v1h-1zM1038 373h1v1h-1zM1038 363h1v1h-1zM1038 352h1v1h-1zM1038 342h1v1h-1zM1038 332h1v1h-1zM1038 322h1v1h-1zM1038 311h1v1h-1zM1038 301h1v1h-1zM1038 291h1v1h-1zM1038 281h1v1h-1zM1038 270h1v1h-1zM1038 260h1v1h-1zM1038 250h1v1h-1zM1038 240h1v1h-1zM1038 229h1v1h-1zM1038 219h1v1h-1zM1038 209h1v1h-1zM1038 199h1v1h-1zM1038 188h1v1h-1zM1038 178h1v1h-1zM1038 168h1v1h-1zM1038 158h1v1h-1zM1048 721h1v1h-1zM1048 711h1v1h-1zM1048 701h1v1h-1zM1048 691h1v1h-1zM1048 680h1v1h-1zM1048 670h1v1h-1zM1048 660h1v1h-1zM1048 650h1v1h-1zM1048 639h1v1h-1zM1048 629h1v1h-1zM1048 619h1v1h-1zM1048 609h1v1h-1zM1048 598h1v1h-1zM1048 588h1v1h-1zM1048 578h1v1h-1zM1048 568h1v1h-1zM1048 557h1v1h-1zM1048 547h1v1h-1zM1048 537h1v1h-1zM1048 527h1v1h-1zM1048 516h1v1h-1zM1048 506h1v1h-1zM1048 496h1v1h-1zM1048 486h1v1h-1zM1048 475h1v1h-1zM1048 465h1v1h-1zM1048 455h1v1h-1zM1048 445h1v1h-1zM1048 434h1v1h-1zM1048 424h1v1h-1zM1048 414h1v1h-1zM1048 404h1v1h-1zM1048 393h1v1h-1zM1048 383h1v1h-1zM1048 373h1v1h-1zM1048 363h1v1h-1zM1048 352h1v1h-1zM1048 342h1v1h-1zM1048 332h1v1h-1zM1048 322h1v1h-1zM1048 311h1v1h-1zM1048 301h1v1h-1zM1048 291h1v1h-1zM1048 281h1v1h-1zM1048 270h1v1h-1zM1048 260h1v1h-1zM1048 250h1v1h-1zM1048 240h1v1h-1zM1048 229h1v1h-1zM1048 219h1v1h-1zM1048 209h1v1h-1zM1048 199h1v1h-1zM1048 188h1v1h-1zM1048 178h1v1h-1zM1048 168h1v1h-1zM1048 158h1v1h-1zM1058 721h1v1h-1zM1058 711h1v1h-1zM1058 701h1v1h-1zM1058 691h1v1h-1zM1058 680h1v1h-1zM1058 670h1v1h-1zM1058 660h1v1h-1zM1058 650h1v1h-1zM1058 639h1v1h-1zM1058 629h1v1h-1zM1058 619h1v1h-1zM1058 609h1v1h-1zM1058 598h1v1h-1zM1058 588h1v1h-1zM1058 578h1v1h-1zM1058 568h1v1h-1zM1058 557h1v1h-1zM1058 547h1v1h-1zM1058 537h1v1h-1zM1058 527h1v1h-1zM1058 516h1v1h-1zM1058 506h1v1h-1zM1058 496h1v1h-1zM1058 486h1v1h-1zM1058 475h1v1h-1zM1058 465h1v1h-1zM1058 455h1v1h-1zM1058 445h1v1h-1zM1058 434h1v1h-1zM1058 424h1v1h-1zM1058 414h1v1h-1zM1058 404h1v1h-1zM1058 393h1v1h-1zM1058 383h1v1h-1zM1058 373h1v1h-1zM1058 363h1v1h-1zM1058 352h1v1h-1zM1058 342h1v1h-1zM1058 332h1v1h-1zM1058 322h1v1h-1zM1058 311h1v1h-1zM1058 301h1v1h-1zM1058 291h1v1h-1zM1058 281h1v1h-1zM1058 270h1v1h-1zM1058 260h1v1h-1zM1058 250h1v1h-1zM1058 240h1v1h-1zM1058 229h1v1h-1zM1058 219h1v1h-1zM1058 209h1v1h-1zM1058 199h1v1h-1zM1058 188h1v1h-1zM1058 178h1v1h-1zM1058 168h1v1h-1zM1058 158h1v1h-1zM1069 721h1v1h-1zM1069 711h1v1h-1zM1069 701h1v1h-1zM1069 691h1v1h-1zM1069 680h1v1h-1zM1069 670h1v1h-1zM1069 660h1v1h-1zM1069 650h1v1h-1zM1069 639h1v1h-1zM1069 629h1v1h-1zM1069 619h1v1h-1zM1069 609h1v1h-1zM1069 598h1v1h-1zM1069 588h1v1h-1zM1069 578h1v1h-1zM1069 568h1v1h-1zM1069 557h1v1h-1zM1069 547h1v1h-1zM1069 537h1v1h-1zM1069 527h1v1h-1zM1069 516h1v1h-1zM1069 506h1v1h-1zM1069 496h1v1h-1zM1069 486h1v1h-1zM1069 475h1v1h-1zM1069 465h1v1h-1zM1069 455h1v1h-1zM1069 445h1v1h-1zM1069 434h1v1h-1zM1069 424h1v1h-1zM1069 414h1v1h-1zM1069 404h1v1h-1zM1069 393h1v1h-1zM1069 383h1v1h-1zM1069 373h1v1h-1zM1069 363h1v1h-1zM1069 352h1v1h-1zM1069 342h1v1h-1zM1069 332h1v1h-1zM1069 322h1v1h-1zM1069 311h1v1h-1zM1069 301h1v1h-1zM1069 291h1v1h-1zM1069 281h1v1h-1zM1069 270h1v1h-1zM1069 260h1v1h-1zM1069 250h1v1h-1zM1069 240h1v1h-1zM1069 229h1v1h-1zM1069 219h1v1h-1zM1069 209h1v1h-1zM1069 199h1v1h-1zM1069 188h1v1h-1zM1069 178h1v1h-1zM1069 168h1v1h-1zM1069 158h1v1h-1zM1079 721h1v1h-1zM1079 711h1v1h-1zM1079 701h1v1h-1zM1079 691h1v1h-1zM1079 680h1v1h-1zM1079 670h1v1h-1zM1079 660h1v1h-1zM1079 650h1v1h-1zM1079 639h1v1h-1zM1079 629h1v1h-1zM1079 619h1v1h-1zM1079 609h1v1h-1zM1079 598h1v1h-1zM1079 588h1v1h-1zM1079 578h1v1h-1zM1079 568h1v1h-1zM1079 557h1v1h-1zM1079 547h1v1h-1zM1079 537h1v1h-1zM1079 527h1v1h-1zM1079 516h1v1h-1zM1079 506h1v1h-1zM1079 496h1v1h-1zM1079 486h1v1h-1zM1079 475h1v1h-1zM1079 465h1v1h-1zM1079 455h1v1h-1zM1079 445h1v1h-1zM1079 434h1v1h-1zM1079 424h1v1h-1zM1079 414h1v1h-1zM1079 404h1v1h-1zM1079 393h1v1h-1zM1079 383h1v1h-1zM1079 373h1v1h-1zM1079 363h1v1h-1zM1079 352h1v1h-1zM1079 342h1v1h-1zM1079 332h1v1h-1zM1079 322h1v1h-1zM1079 311h1v1h-1zM1079 301h1v1h-1zM1079 291h1v1h-1zM1079 281h1v1h-1zM1079 270h1v1h-1zM1079 260h1v1h-1zM1079 250h1v1h-1zM1079 240h1v1h-1zM1079 229h1v1h-1zM1079 219h1v1h-1zM1079 209h1v1h-1zM1079 199h1v1h-1zM1079 188h1v1h-1zM1079 178h1v1h-1zM1079 168h1v1h-1zM1079 158h1v1h-1zM1089 721h1v1h-1zM1089 711h1v1h-1zM1089 701h1v1h-1zM1089 691h1v1h-1zM1089 680h1v1h-1zM1089 670h1v1h-1zM1089 660h1v1h-1zM1089 650h1v1h-1zM1089 639h1v1h-1zM1089 629h1v1h-1zM1089 619h1v1h-1zM1089 609h1v1h-1zM1089 598h1v1h-1zM1089 588h1v1h-1zM1089 578h1v1h-1zM1089 568h1v1h-1zM1089 557h1v1h-1zM1089 547h1v1h-1zM1089 537h1v1h-1zM1089 527h1v1h-1zM1089 516h1v1h-1zM1089 506h1v1h-1zM1089 496h1v1h-1zM1089 486h1v1h-1zM1089 475h1v1h-1zM1089 465h1v1h-1zM1089 455h1v1h-1zM1089 445h1v1h-1zM1089 434h1v1h-1zM1089 424h1v1h-1zM1089 414h1v1h-1zM1089 404h1v1h-1zM1089 393h1v1h-1zM1089 383h1v1h-1zM1089 373h1v1h-1zM1089 363h1v1h-1zM1089 352h1v1h-1zM1089 342h1v1h-1zM1089 332h1v1h-1zM1089 322h1v1h-1zM1089 311h1v1h-1zM1089 301h1v1h-1zM1089 291h1v1h-1zM1089 281h1v1h-1zM1089 270h1v1h-1zM1089 260h1v1h-1zM1089 250h1v1h-1zM1089 240h1v1h-1zM1089 229h1v1h-1zM1089 219h1v1h-1zM1089 209h1v1h-1zM1089 199h1v1h-1zM1089 188h1v1h-1zM1089 178h1v1h-1zM1089 168h1v1h-1zM1089 158h1v1h-1zM1099 721h1v1h-1zM1099 711h1v1h-1zM1099 701h1v1h-1zM1099 691h1v1h-1zM1099 680h1v1h-1zM1099 670h1v1h-1zM1099 660h1v1h-1zM1099 650h1v1h-1zM1099 639h1v1h-1zM1099 629h1v1h-1zM1099 619h1v1h-1zM1099 609h1v1h-1zM1099 598h1v1h-1zM1099 588h1v1h-1zM1099 578h1v1h-1zM1099 568h1v1h-1zM1099 557h1v1h-1zM1099 547h1v1h-1zM1099 537h1v1h-1zM1099 527h1v1h-1zM1099 516h1v1h-1zM1099 506h1v1h-1zM1099 496h1v1h-1zM1099 486h1v1h-1zM1099 475h1v1h-1zM1099 465h1v1h-1zM1099 455h1v1h-1zM1099 445h1v1h-1zM1099 434h1v1h-1zM1099 424h1v1h-1zM1099 414h1v1h-1zM1099 404h1v1h-1zM1099 393h1v1h-1zM1099 383h1v1h-1zM1099 373h1v1h-1zM1099 363h1v1h-1zM1099 352h1v1h-1zM1099 342h1v1h-1zM1099 332h1v1h-1zM1099 322h1v1h-1zM1099 311h1v1h-1zM1099 301h1v1h-1zM1099 291h1v1h-1zM1099 281h1v1h-1zM1099 270h1v1h-1zM1099 260h1v1h-1zM1099 250h1v1h-1zM1099 240h1v1h-1zM1099 229h1v1h-1zM1099 219h1v1h-1zM1099 209h1v1h-1zM1099 199h1v1h-1zM1099 188h1v1h-1zM1099 178h1v1h-1zM1099 168h1v1h-1zM1099 158h1v1h-1zM1110 721h1v1h-1zM1110 711h1v1h-1zM1110 701h1v1h-1zM1110 691h1v1h-1zM1110 680h1v1h-1zM1110 670h1v1h-1zM1110 660h1v1h-1zM1110 650h1v1h-1zM1110 639h1v1h-1zM1110 629h1v1h-1zM1110 619h1v1h-1zM1110 609h1v1h-1zM1110 598h1v1h-1zM1110 588h1v1h-1zM1110 578h1v1h-1zM1110 568h1v1h-1zM1110 557h1v1h-1zM1110 547h1v1h-1zM1110 537h1v1h-1zM1110 527h1v1h-1zM1110 516h1v1h-1zM1110 506h1v1h-1zM1110 496h1v1h-1zM1110 486h1v1h-1zM1110 475h1v1h-1zM1110 465h1v1h-1zM1110 455h1v1h-1zM1110 445h1v1h-1zM1110 434h1v1h-1zM1110 424h1v1h-1zM1110 414h1v1h-1zM1110 404h1v1h-1zM1110 393h1v1h-1zM1110 383h1v1h-1zM1110 373h1v1h-1zM1110 363h1v1h-1zM1110 352h1v1h-1zM1110 342h1v1h-1zM1110 332h1v1h-1zM1110 322h1v1h-1zM1110 311h1v1h-1zM1110 301h1v1h-1zM1110 291h1v1h-1zM1110 281h1v1h-1zM1110 270h1v1h-1zM1110 260h1v1h-1zM1110 250h1v1h-1zM1110 240h1v1h-1zM1110 229h1v1h-1zM1110 219h1v1h-1zM1110 209h1v1h-1zM1110 199h1v1h-1zM1110 188h1v1h-1zM1110 178h1v1h-1zM1110 168h1v1h-1zM1110 158h1v1h-1zM1120 721h1v1h-1zM1120 711h1v1h-1zM1120 701h1v1h-1zM1120 691h1v1h-1zM1120 680h1v1h-1zM1120 670h1v1h-1zM1120 660h1v1h-1zM1120 650h1v1h-1zM1120 639h1v1h-1zM1120 629h1v1h-1zM1120 619h1v1h-1zM1120 609h1v1h-1zM1120 598h1v1h-1zM1120 588h1v1h-1zM1120 578h1v1h-1zM1120 568h1v1h-1zM1120 557h1v1h-1zM1120 547h1v1h-1zM1120 537h1v1h-1zM1120 527h1v1h-1zM1120 516h1v1h-1zM1120 506h1v1h-1zM1120 496h1v1h-1zM1120 486h1v1h-1zM1120 475h1v1h-1zM1120 465h1v1h-1zM1120 455h1v1h-1zM1120 445h1v1h-1zM1120 434h1v1h-1zM1120 424h1v1h-1zM1120 414h1v1h-1zM1120 404h1v1h-1zM1120 393h1v1h-1zM1120 383h1v1h-1zM1120 373h1v1h-1zM1120 363h1v1h-1zM1120 352h1v1h-1zM1120 342h1v1h-1zM1120 332h1v1h-1zM1120 322h1v1h-1zM1120 311h1v1h-1zM1120 301h1v1h-1zM1120 291h1v1h-1zM1120 281h1v1h-1zM1120 270h1v1h-1zM1120 260h1v1h-1zM1120 250h1v1h-1zM1120 240h1v1h-1zM1120 229h1v1h-1zM1120 219h1v1h-1zM1120 209h1v1h-1zM1120 199h1v1h-1zM1120 188h1v1h-1zM1120 178h1v1h-1zM1120 168h1v1h-1zM1120 158h1v1h-1zM1130 721h1v1h-1zM1130 711h1v1h-1zM1130 701h1v1h-1zM1130 691h1v1h-1zM1130 680h1v1h-1zM1130 670h1v1h-1zM1130 660h1v1h-1zM1130 650h1v1h-1zM1130 639h1v1h-1zM1130 629h1v1h-1zM1130 619h1v1h-1zM1130 609h1v1h-1zM1130 598h1v1h-1zM1130 588h1v1h-1zM1130 578h1v1h-1zM1130 568h1v1h-1zM1130 557h1v1h-1zM1130 547h1v1h-1zM1130 537h1v1h-1zM1130 527h1v1h-1zM1130 516h1v1h-1zM1130 506h1v1h-1zM1130 496h1v1h-1zM1130 486h1v1h-1zM1130 475h1v1h-1zM1130 465h1v1h-1zM1130 455h1v1h-1zM1130 445h1v1h-1zM1130 434h1v1h-1zM1130 424h1v1h-1zM1130 414h1v1h-1zM1130 404h1v1h-1zM1130 393h1v1h-1zM1130 383h1v1h-1zM1130 373h1v1h-1zM1130 363h1v1h-1zM1130 352h1v1h-1zM1130 342h1v1h-1zM1130 332h1v1h-1zM1130 322h1v1h-1zM1130 311h1v1h-1zM1130 301h1v1h-1zM1130 291h1v1h-1zM1130 281h1v1h-1zM1130 270h1v1h-1zM1130 260h1v1h-1zM1130 250h1v1h-1zM1130 240h1v1h-1zM1130 229h1v1h-1zM1130 219h1v1h-1zM1130 209h1v1h-1zM1130 199h1v1h-1zM1130 188h1v1h-1zM1130 178h1v1h-1zM1130 168h1v1h-1zM1130 158h1v1h-1z" fill="#444"/><rect x="146.6" y="271.0" width="922.5" height="358.8" rx="19" ry="19" fill="none" stroke="#fff" stroke-width="2.8"/><g stroke="#b00000" stroke-width="1" fill="none"><circle cx="146.6" cy="629.7" r="5"/><path d="M126.6 629.7H166.6M146.6 609.7V649.7"/></g><path d="M186.3 362.9H403.3" stroke="#dc0000" stroke-width="1.9" fill="none" stroke-dasharray="1.6 6.9 17 6.8" stroke-dashoffset="21.50"/><path d="M294.8 311.2V414.6" stroke="#dc0000" stroke-width="1.9" fill="none" stroke-dasharray="1.6 6.9 17 6.8" stroke-dashoffset="13.70"/><rect x="197.3" y="327" width="195.4" height="71.9" rx="35.95" ry="35.95" fill="none" stroke="#b8b8b8" stroke-width="1.6" stroke-dasharray="9 2.9 1.5 2.6"/><circle cx="233.2" cy="362.9" r="7" fill="none" stroke="#fff" stroke-width="2.8"/><circle cx="356.3" cy="362.9" r="7" fill="none" stroke="#fff" stroke-width="2.8"/><path d="M254.5 337.3 H335.3 Q345.4 337.3 344.3 347.5 L342.4 378.5 Q341.3 388.6 331.2 388.6 H258.4 Q248.3 388.6 247.2 378.5 L245.5 347.5 Q244.5 337.3 254.5 337.3 Z" fill="none" stroke="#fff" stroke-width="2.8"/><path d="M414.6 362.7H523.2" stroke="#dc0000" stroke-width="1.9" fill="none" stroke-dasharray="1.6 6.9 17 6.8" stroke-dashoffset="11.10"/><path d="M468.9 311.0V414.4" stroke="#dc0000" stroke-width="1.9" fill="none" stroke-dasharray="1.6 6.9 17 6.8" stroke-dashoffset="13.70"/><circle cx="468.9" cy="362.7" r="38.1" fill="none" stroke="#fff" stroke-width="2.8"/><path d="M545.5 362.7H607.9" stroke="#dc0000" stroke-width="1.9" fill="none" stroke-dasharray="1.6 6.9 17 6.8" stroke-dashoffset="19.80"/><path d="M576.7 331.3V394.1" stroke="#dc0000" stroke-width="1.9" fill="none" stroke-dasharray="1.6 6.9 17 6.8" stroke-dashoffset="19.60"/><circle cx="576.7" cy="362.7" r="17.6" fill="none" stroke="#fff" stroke-width="2.8"/><rect x="196" y="472.3" width="352" height="108.5" rx="54.25" ry="54.25" fill="none" stroke="#b8b8b8" stroke-width="1.6" stroke-dasharray="9 2.9 1.5 2.6"/><path d="M177.0 527.0H566.4" stroke="#dc0000" stroke-width="1.9" fill="none" stroke-dasharray="1.6 6.9 17 6.8" stroke-dashoffset="17.80"/><path d="M371.7 455.0V599.0" stroke="#dc0000" stroke-width="1.9" fill="none" stroke-dasharray="1.6 6.9 17 6.8" stroke-dashoffset="11.30"/><circle cx="234.2" cy="527" r="15.7" fill="none" stroke="#fff" stroke-width="2.8"/><circle cx="508.9" cy="527" r="15.7" fill="none" stroke="#fff" stroke-width="2.8"/><path d="M288 494.2 H455.6 V543.9 H439.2 L425.5 559.8 H317.6 L304.5 543.9 H288 Z" fill="none" stroke="#fff" stroke-width="2.8" stroke-linejoin="miter"/><circle cx="669.4" cy="332.5" r="6.6" fill="none" stroke="#fff" stroke-width="2.8"/><circle cx="700.1" cy="332.5" r="6.6" fill="none" stroke="#fff" stroke-width="2.8"/><circle cx="730.9" cy="332.5" r="6.6" fill="none" stroke="#fff" stroke-width="2.8"/><circle cx="761.6" cy="332.5" r="6.6" fill="none" stroke="#fff" stroke-width="2.8"/><circle cx="792.4" cy="332.5" r="6.6" fill="none" stroke="#fff" stroke-width="2.8"/><circle cx="823.1" cy="332.5" r="6.6" fill="none" stroke="#fff" stroke-width="2.8"/><circle cx="853.9" cy="332.5" r="6.6" fill="none" stroke="#fff" stroke-width="2.8"/><circle cx="884.6" cy="332.5" r="6.6" fill="none" stroke="#fff" stroke-width="2.8"/><circle cx="915.4" cy="332.5" r="6.6" fill="none" stroke="#fff" stroke-width="2.8"/><circle cx="946.1" cy="332.5" r="6.6" fill="none" stroke="#fff" stroke-width="2.8"/><circle cx="976.9" cy="332.5" r="6.6" fill="none" stroke="#fff" stroke-width="2.8"/><circle cx="1007.6" cy="332.5" r="6.6" fill="none" stroke="#fff" stroke-width="2.8"/><circle cx="684.7" cy="353.0" r="6.6" fill="none" stroke="#fff" stroke-width="2.8"/><circle cx="715.5" cy="353.0" r="6.6" fill="none" stroke="#fff" stroke-width="2.8"/><circle cx="746.2" cy="353.0" r="6.6" fill="none" stroke="#fff" stroke-width="2.8"/><circle cx="777.0" cy="353.0" r="6.6" fill="none" stroke="#fff" stroke-width="2.8"/><circle cx="807.7" cy="353.0" r="6.6" fill="none" stroke="#fff" stroke-width="2.8"/><circle cx="838.5" cy="353.0" r="6.6" fill="none" stroke="#fff" stroke-width="2.8"/><circle cx="869.2" cy="353.0" r="6.6" fill="none" stroke="#fff" stroke-width="2.8"/><circle cx="900.0" cy="353.0" r="6.6" fill="none" stroke="#fff" stroke-width="2.8"/><circle cx="930.7" cy="353.0" r="6.6" fill="none" stroke="#fff" stroke-width="2.8"/><circle cx="961.5" cy="353.0" r="6.6" fill="none" stroke="#fff" stroke-width="2.8"/><circle cx="992.2" cy="353.0" r="6.6" fill="none" stroke="#fff" stroke-width="2.8"/><circle cx="669.4" cy="373.5" r="6.6" fill="none" stroke="#fff" stroke-width="2.8"/><circle cx="700.1" cy="373.5" r="6.6" fill="none" stroke="#fff" stroke-width="2.8"/><circle cx="730.9" cy="373.5" r="6.6" fill="none" stroke="#fff" stroke-width="2.8"/><circle cx="761.6" cy="373.5" r="6.6" fill="none" stroke="#fff" stroke-width="2.8"/><circle cx="792.4" cy="373.5" r="6.6" fill="none" stroke="#fff" stroke-width="2.8"/><circle cx="823.1" cy="373.5" r="6.6" fill="none" stroke="#fff" stroke-width="2.8"/><circle cx="853.9" cy="373.5" r="6.6" fill="none" stroke="#fff" stroke-width="2.8"/><circle cx="884.6" cy="373.5" r="6.6" fill="none" stroke="#fff" stroke-width="2.8"/><circle cx="915.4" cy="373.5" r="6.6" fill="none" stroke="#fff" stroke-width="2.8"/><circle cx="946.1" cy="373.5" r="6.6" fill="none" stroke="#fff" stroke-width="2.8"/><circle cx="976.9" cy="373.5" r="6.6" fill="none" stroke="#fff" stroke-width="2.8"/><circle cx="1007.6" cy="373.5" r="6.6" fill="none" stroke="#fff" stroke-width="2.8"/><circle cx="684.7" cy="394.0" r="6.6" fill="none" stroke="#fff" stroke-width="2.8"/><circle cx="715.5" cy="394.0" r="6.6" fill="none" stroke="#fff" stroke-width="2.8"/><circle cx="746.2" cy="394.0" r="6.6" fill="none" stroke="#fff" stroke-width="2.8"/><circle cx="777.0" cy="394.0" r="6.6" fill="none" stroke="#fff" stroke-width="2.8"/><circle cx="807.7" cy="394.0" r="6.6" fill="none" stroke="#fff" stroke-width="2.8"/><circle cx="838.5" cy="394.0" r="6.6" fill="none" stroke="#fff" stroke-width="2.8"/><circle cx="869.2" cy="394.0" r="6.6" fill="none" stroke="#fff" stroke-width="2.8"/><circle cx="900.0" cy="394.0" r="6.6" fill="none" stroke="#fff" stroke-width="2.8"/><circle cx="930.7" cy="394.0" r="6.6" fill="none" stroke="#fff" stroke-width="2.8"/><circle cx="961.5" cy="394.0" r="6.6" fill="none" stroke="#fff" stroke-width="2.8"/><circle cx="992.2" cy="394.0" r="6.6" fill="none" stroke="#fff" stroke-width="2.8"/><circle cx="669.4" cy="414.5" r="6.6" fill="none" stroke="#fff" stroke-width="2.8"/><circle cx="700.1" cy="414.5" r="6.6" fill="none" stroke="#fff" stroke-width="2.8"/><circle cx="730.9" cy="414.5" r="6.6" fill="none" stroke="#fff" stroke-width="2.8"/><circle cx="761.6" cy="414.5" r="6.6" fill="none" stroke="#fff" stroke-width="2.8"/><circle cx="792.4" cy="414.5" r="6.6" fill="none" stroke="#fff" stroke-width="2.8"/><circle cx="823.1" cy="414.5" r="6.6" fill="none" stroke="#fff" stroke-width="2.8"/><circle cx="853.9" cy="414.5" r="6.6" fill="none" stroke="#fff" stroke-width="2.8"/><circle cx="884.6" cy="414.5" r="6.6" fill="none" stroke="#9a9a9a" stroke-width="2.6"/><circle cx="915.4" cy="414.5" r="6.6" fill="none" stroke="#fff" stroke-width="2.8"/><circle cx="946.1" cy="414.5" r="6.6" fill="none" stroke="#fff" stroke-width="2.8"/><circle cx="976.9" cy="414.5" r="6.6" fill="none" stroke="#fff" stroke-width="2.8"/><circle cx="1007.6" cy="414.5" r="6.6" fill="none" stroke="#fff" stroke-width="2.8"/><circle cx="684.7" cy="435.0" r="6.6" fill="none" stroke="#fff" stroke-width="2.8"/><circle cx="715.5" cy="435.0" r="6.6" fill="none" stroke="#fff" stroke-width="2.8"/><circle cx="746.2" cy="435.0" r="6.6" fill="none" stroke="#fff" stroke-width="2.8"/><circle cx="777.0" cy="435.0" r="6.6" fill="none" stroke="#fff" stroke-width="2.8"/><circle cx="807.7" cy="435.0" r="6.6" fill="none" stroke="#fff" stroke-width="2.8"/><circle cx="838.5" cy="435.0" r="6.6" fill="none" stroke="#fff" stroke-width="2.8"/><circle cx="869.2" cy="435.0" r="6.6" fill="none" stroke="#fff" stroke-width="2.8"/><circle cx="900.0" cy="435.0" r="6.6" fill="none" stroke="#fff" stroke-width="2.8"/><circle cx="930.7" cy="435.0" r="6.6" fill="none" stroke="#fff" stroke-width="2.8"/><circle cx="961.5" cy="435.0" r="6.6" fill="none" stroke="#fff" stroke-width="2.8"/><circle cx="992.2" cy="435.0" r="6.6" fill="none" stroke="#fff" stroke-width="2.8"/><circle cx="669.4" cy="455.5" r="6.6" fill="none" stroke="#fff" stroke-width="2.8"/><circle cx="700.1" cy="455.5" r="6.6" fill="none" stroke="#fff" stroke-width="2.8"/><circle cx="730.9" cy="455.5" r="6.6" fill="none" stroke="#fff" stroke-width="2.8"/><circle cx="761.6" cy="455.5" r="6.6" fill="none" stroke="#fff" stroke-width="2.8"/><circle cx="792.4" cy="455.5" r="6.6" fill="none" stroke="#fff" stroke-width="2.8"/><circle cx="823.1" cy="455.5" r="6.6" fill="none" stroke="#fff" stroke-width="2.8"/><circle cx="684.7" cy="476.0" r="6.6" fill="none" stroke="#fff" stroke-width="2.8"/><circle cx="715.5" cy="476.0" r="6.6" fill="none" stroke="#fff" stroke-width="2.8"/><circle cx="746.2" cy="476.0" r="6.6" fill="none" stroke="#fff" stroke-width="2.8"/><circle cx="777.0" cy="476.0" r="6.6" fill="none" stroke="#fff" stroke-width="2.8"/><circle cx="807.7" cy="476.0" r="6.6" fill="none" stroke="#fff" stroke-width="2.8"/><circle cx="669.4" cy="496.5" r="6.6" fill="none" stroke="#fff" stroke-width="2.8"/><circle cx="700.1" cy="496.5" r="6.6" fill="none" stroke="#fff" stroke-width="2.8"/><circle cx="730.9" cy="496.5" r="6.6" fill="none" stroke="#fff" stroke-width="2.8"/><circle cx="761.6" cy="496.5" r="6.6" fill="none" stroke="#fff" stroke-width="2.8"/><circle cx="792.4" cy="496.5" r="6.6" fill="none" stroke="#fff" stroke-width="2.8"/><circle cx="823.1" cy="496.5" r="6.6" fill="none" stroke="#fff" stroke-width="2.8"/><circle cx="684.7" cy="517.0" r="6.6" fill="none" stroke="#fff" stroke-width="2.8"/><circle cx="715.5" cy="517.0" r="6.6" fill="none" stroke="#fff" stroke-width="2.8"/><circle cx="746.2" cy="517.0" r="6.6" fill="none" stroke="#fff" stroke-width="2.8"/><circle cx="777.0" cy="517.0" r="6.6" fill="none" stroke="#fff" stroke-width="2.8"/><circle cx="807.7" cy="517.0" r="6.6" fill="none" stroke="#fff" stroke-width="2.8"/><circle cx="669.4" cy="537.5" r="6.6" fill="none" stroke="#fff" stroke-width="2.8"/><circle cx="700.1" cy="537.5" r="6.6" fill="none" stroke="#fff" stroke-width="2.8"/><circle cx="730.9" cy="537.5" r="6.6" fill="none" stroke="#fff" stroke-width="2.8"/><circle cx="761.6" cy="537.5" r="6.6" fill="none" stroke="#fff" stroke-width="2.8"/><circle cx="792.4" cy="537.5" r="6.6" fill="none" stroke="#fff" stroke-width="2.8"/><circle cx="823.1" cy="537.5" r="6.6" fill="none" stroke="#fff" stroke-width="2.8"/><circle cx="684.7" cy="558.0" r="6.6" fill="none" stroke="#fff" stroke-width="2.8"/><circle cx="715.5" cy="558.0" r="6.6" fill="none" stroke="#fff" stroke-width="2.8"/><circle cx="746.2" cy="558.0" r="6.6" fill="none" stroke="#fff" stroke-width="2.8"/><circle cx="777.0" cy="558.0" r="6.6" fill="none" stroke="#fff" stroke-width="2.8"/><circle cx="807.7" cy="558.0" r="6.6" fill="none" stroke="#fff" stroke-width="2.8"/><circle cx="669.4" cy="578.5" r="6.6" fill="none" stroke="#fff" stroke-width="2.8"/><circle cx="700.1" cy="578.5" r="6.6" fill="none" stroke="#fff" stroke-width="2.8"/><circle cx="730.9" cy="578.5" r="6.6" fill="none" stroke="#fff" stroke-width="2.8"/><circle cx="761.6" cy="578.5" r="6.6" fill="none" stroke="#fff" stroke-width="2.8"/><circle cx="792.4" cy="578.5" r="6.6" fill="none" stroke="#fff" stroke-width="2.8"/><circle cx="823.1" cy="578.5" r="6.6" fill="none" stroke="#fff" stroke-width="2.8"/><rect x="858.3" y="465.6" width="160.1" height="112.1" rx="21" ry="21" fill="none" stroke="#fff" stroke-width="2.8"/><path d="M844.7 521.9H1031.5" stroke="#dc0000" stroke-width="1.9" fill="none" stroke-dasharray="1.6 6.9 17 6.8" stroke-dashoffset="22.20"/><path d="M937.8 445.2V591" stroke="#dc0000" stroke-width="1.9" fill="none" stroke-dasharray="1.6 6.9 17 6.8" stroke-dashoffset="24.70"/><circle cx="889.8" cy="424.2" r="40.5" fill="url(#hl)"/></g><path d="M889.8 424.2 l0 23.2 l5.6 -5.4 l4.6 10.8 l4.4 -1.9 l-4.6 -10.5 l7.4 -0.2 Z" fill="none" stroke="#fff" stroke-width="3.4" stroke-linejoin="round"/><path d="M889.8 424.2 l0 23.2 l5.6 -5.4 l4.6 10.8 l4.4 -1.9 l-4.6 -10.5 l7.4 -0.2 Z" fill="#fff" stroke="#000" stroke-width="1.2" stroke-linejoin="round"/></svg>
<svg class="a" style="left:0;top:0" width="1500" height="844" viewBox="0 0 1500 844"><path d="M95.5 152V155M105.5 148V155M115.5 152V155M126.5 148V155M136.5 152V155M146.5 148V155M156.5 152V155M167.5 148V155M177.5 152V155M187.5 148V155M197.5 152V155M208.5 148V155M218.5 152V155M228.5 148V155M238.5 152V155M249.5 148V155M259.5 152V155M269.5 148V155M279.5 152V155M290.5 148V155M300.5 152V155M310.5 148V155M320.5 152V155M331.5 148V155M341.5 152V155M351.5 148V155M361.5 152V155M372.5 148V155M382.5 152V155M392.5 148V155M402.5 152V155M413.5 148V155M423.5 152V155M433.5 148V155M443.5 152V155M454.5 148V155M464.5 152V155M474.5 148V155M484.5 152V155M495.5 148V155M505.5 152V155M515.5 148V155M525.5 152V155M536.5 148V155M546.5 152V155M556.5 148V155M566.5 152V155M577.5 148V155M587.5 152V155M597.5 148V155M607.5 152V155M618.5 148V155M628.5 152V155M638.5 148V155M648.5 152V155M659.5 148V155M669.5 152V155M679.5 148V155M689.5 152V155M700.5 148V155M710.5 152V155M720.5 148V155M730.5 152V155M741.5 148V155M751.5 152V155M761.5 148V155M771.5 152V155M782.5 148V155M792.5 152V155M802.5 148V155M812.5 152V155M823.5 148V155M833.5 152V155M843.5 148V155M853.5 152V155M864.5 148V155M874.5 152V155M884.5 148V155M894.5 152V155M905.5 148V155M915.5 152V155M925.5 148V155M935.5 152V155M946.5 148V155M956.5 152V155M966.5 148V155M976.5 152V155M987.5 148V155M997.5 152V155M1007.5 148V155M1017.5 152V155M1028.5 148V155M1038.5 152V155M1048.5 148V155M1058.5 152V155M1069.5 148V155M1079.5 152V155M1089.5 148V155M1099.5 152V155M1110.5 148V155M1120.5 152V155M1130.5 148V155M92 721.5H95M88 711.5H95M92 701.5H95M88 691.5H95M92 680.5H95M88 670.5H95M92 660.5H95M88 650.5H95M92 639.5H95M88 629.5H95M92 619.5H95M88 609.5H95M92 598.5H95M88 588.5H95M92 578.5H95M88 568.5H95M92 557.5H95M88 547.5H95M92 537.5H95M88 527.5H95M92 516.5H95M88 506.5H95M92 496.5H95M88 486.5H95M92 475.5H95M88 465.5H95M92 455.5H95M88 445.5H95M92 434.5H95M88 424.5H95M92 414.5H95M88 404.5H95M92 393.5H95M88 383.5H95M92 373.5H95M88 363.5H95M92 352.5H95M88 342.5H95M92 332.5H95M88 322.5H95M92 311.5H95M88 301.5H95M92 291.5H95M88 281.5H95M92 270.5H95M88 260.5H95M92 250.5H95M88 240.5H95M92 229.5H95M88 219.5H95M92 209.5H95M88 199.5H95M92 188.5H95M88 178.5H95M92 168.5H95M88 158.5H95" stroke="#555" stroke-width="1" fill="none"/><defs><clipPath id="vr"><rect x="72" y="155" width="23" height="577"/></clipPath></defs><g font-family="Liberation Sans" font-size="9.5" fill="#222"><text x="105.5" y="141" text-anchor="middle">-4</text><text x="126.5" y="141" text-anchor="middle">-2</text><text x="146.5" y="141" text-anchor="middle">0</text><text x="167.5" y="141" text-anchor="middle">2</text><text x="187.5" y="141" text-anchor="middle">4</text><text x="208.5" y="141" text-anchor="middle">6</text><text x="228.5" y="141" text-anchor="middle">8</text><text x="249.5" y="141" text-anchor="middle">10</text><text x="269.5" y="141" text-anchor="middle">12</text><text x="290.5" y="141" text-anchor="middle">14</text><text x="310.5" y="141" text-anchor="middle">16</text><text x="331.5" y="141" text-anchor="middle">18</text><text x="351.5" y="141" text-anchor="middle">20</text><text x="372.5" y="141" text-anchor="middle">22</text><text x="392.5" y="141" text-anchor="middle">24</text><text x="413.5" y="141" text-anchor="middle">26</text><text x="433.5" y="141" text-anchor="middle">28</text><text x="454.5" y="141" text-anchor="middle">30</text><text x="474.5" y="141" text-anchor="middle">32</text><text x="495.5" y="141" text-anchor="middle">34</text><text x="515.5" y="141" text-anchor="middle">36</text><text x="536.5" y="141" text-anchor="middle">38</text><text x="556.5" y="141" text-anchor="middle">40</text><text x="577.5" y="141" text-anchor="middle">42</text><text x="597.5" y="141" text-anchor="middle">44</text><text x="618.5" y="141" text-anchor="middle">46</text><text x="638.5" y="141" text-anchor="middle">48</text><text x="659.5" y="141" text-anchor="middle">50</text><text x="679.5" y="141" text-anchor="middle">52</text><text x="700.5" y="141" text-anchor="middle">54</text><text x="720.5" y="141" text-anchor="middle">56</text><text x="741.5" y="141" text-anchor="middle">58</text><text x="761.5" y="141" text-anchor="middle">60</text><text x="782.5" y="141" text-anchor="middle">62</text><text x="802.5" y="141" text-anchor="middle">64</text><text x="823.5" y="141" text-anchor="middle">66</text><text x="843.5" y="141" text-anchor="middle">68</text><text x="864.5" y="141" text-anchor="middle">70</text><text x="884.5" y="141" text-anchor="middle">72</text><text x="905.5" y="141" text-anchor="middle">74</text><text x="925.5" y="141" text-anchor="middle">76</text><text x="946.5" y="141" text-anchor="middle">78</text><text x="966.5" y="141" text-anchor="middle">80</text><text x="987.5" y="141" text-anchor="middle">82</text><text x="1007.5" y="141" text-anchor="middle">84</text><text x="1028.5" y="141" text-anchor="middle">86</text><text x="1048.5" y="141" text-anchor="middle">88</text><text x="1069.5" y="141" text-anchor="middle">90</text><text x="1089.5" y="141" text-anchor="middle">92</text><text x="1110.5" y="141" text-anchor="middle">94</text><text x="1130.5" y="141" text-anchor="middle">96</text></g><g font-family="Liberation Sans" font-size="9.5" fill="#222" clip-path="url(#vr)"><text transform="translate(81.2 732.5) rotate(-90)" text-anchor="middle">-10</text><text transform="translate(81.2 711.5) rotate(-90)" text-anchor="middle">-8</text><text transform="translate(81.2 691.5) rotate(-90)" text-anchor="middle">-6</text><text transform="translate(81.2 670.5) rotate(-90)" text-anchor="middle">-4</text><text transform="translate(81.2 650.5) rotate(-90)" text-anchor="middle">-2</text><text transform="translate(81.2 629.5) rotate(-90)" text-anchor="middle">0</text><text transform="translate(81.2 609.5) rotate(-90)" text-anchor="middle">2</text><text transform="translate(81.2 588.5) rotate(-90)" text-anchor="middle">4</text><text transform="translate(81.2 568.5) rotate(-90)" text-anchor="middle">6</text><text transform="translate(81.2 547.5) rotate(-90)" text-anchor="middle">8</text><text transform="translate(81.2 527.5) rotate(-90)" text-anchor="middle">10</text><text transform="translate(81.2 506.5) rotate(-90)" text-anchor="middle">12</text><text transform="translate(81.2 486.5) rotate(-90)" text-anchor="middle">14</text><text transform="translate(81.2 465.5) rotate(-90)" text-anchor="middle">16</text><text transform="translate(81.2 445.5) rotate(-90)" text-anchor="middle">18</text><text transform="translate(81.2 424.5) rotate(-90)" text-anchor="middle">20</text><text transform="translate(81.2 404.5) rotate(-90)" text-anchor="middle">22</text><text transform="translate(81.2 383.5) rotate(-90)" text-anchor="middle">24</text><text transform="translate(81.2 363.5) rotate(-90)" text-anchor="middle">26</text><text transform="translate(81.2 342.5) rotate(-90)" text-anchor="middle">28</text><text transform="translate(81.2 322.5) rotate(-90)" text-anchor="middle">30</text><text transform="translate(81.2 301.5) rotate(-90)" text-anchor="middle">32</text><text transform="translate(81.2 281.5) rotate(-90)" text-anchor="middle">34</text><text transform="translate(81.2 260.5) rotate(-90)" text-anchor="middle">36</text><text transform="translate(81.2 240.5) rotate(-90)" text-anchor="middle">38</text><text transform="translate(81.2 219.5) rotate(-90)" text-anchor="middle">40</text><text transform="translate(81.2 199.5) rotate(-90)" text-anchor="middle">42</text><text transform="translate(81.2 178.5) rotate(-90)" text-anchor="middle">44</text><text transform="translate(81.2 158.5) rotate(-90)" text-anchor="middle">46</text></g><path d="M884.5 145 H896 L890.2 151 Z" fill="#000"/><path d="M85 419 V431 L91 425 Z" fill="#000"/></svg>
<svg class="a" style="left:0;top:0" width="1500" height="844" viewBox="0 0 1500 844" font-family="Liberation Sans">
<defs>
<linearGradient id="gblue" x1="0" y1="0" x2="0" y2="1"><stop offset="0" stop-color="#a9c6ee"/><stop offset="0.5" stop-color="#7aa6e0"/><stop offset="0.52" stop-color="#5f92d8"/><stop offset="1" stop-color="#7fb0ea"/></linearGradient>
<linearGradient id="gfloppy" x1="0" y1="0" x2="1" y2="1"><stop offset="0" stop-color="#8ab8f8"/><stop offset="1" stop-color="#3f7fe8"/></linearGradient>
<linearGradient id="ggreen" x1="0" y1="0" x2="1" y2="1"><stop offset="0" stop-color="#8fd47a"/><stop offset="1" stop-color="#2c9e3e"/></linearGradient>
<linearGradient id="gfold" x1="0" y1="0" x2="0" y2="1"><stop offset="0" stop-color="#8fb4e0"/><stop offset="1" stop-color="#5a8fd0"/></linearGradient>
<linearGradient id="gbtn" x1="0" y1="0" x2="0" y2="1"><stop offset="0" stop-color="#e3e3e3"/><stop offset="0.22" stop-color="#f4f4f4"/><stop offset="0.6" stop-color="#ededed"/><stop offset="1" stop-color="#f3f3f3"/></linearGradient>
<linearGradient id="gbtn2" x1="0" y1="0" x2="0" y2="1"><stop offset="0" stop-color="#f7f7f7"/><stop offset="0.5" stop-color="#ececec"/><stop offset="1" stop-color="#f4f4f4"/></linearGradient>
<radialGradient id="gglow"><stop offset="0" stop-color="#ffffff"/><stop offset="0.25" stop-color="#f6f000"/><stop offset="0.6" stop-color="#eee000" stop-opacity="0.9"/><stop offset="1" stop-color="#eee000" stop-opacity="0"/></radialGradient>
</defs>
<rect x="7.0" y="32.0" width="2" height="2" fill="#a3a3a3"/>
<rect x="7.0" y="38.0" width="2" height="2" fill="#a3a3a3"/>
<rect x="7.0" y="44.0" width="2" height="2" fill="#a3a3a3"/>
<rect x="7.0" y="50.0" width="2" height="2" fill="#a3a3a3"/>
<rect x="7.0" y="56.0" width="2" height="2" fill="#a3a3a3"/>
<rect x="12" y="25" width="43" height="43" rx="5" fill="#b7b7b7"/>
<path d="M27.5 36 V55 L31.8 50.8 L35 57.6 L37.6 56.4 L34.4 49.8 L40.2 49.6 Z" fill="#fff" stroke="#222" stroke-width="1" stroke-linejoin="round"/>
<rect x="88.0" y="32.0" width="2" height="2" fill="#a3a3a3"/>
<rect x="88.0" y="38.0" width="2" height="2" fill="#a3a3a3"/>
<rect x="88.0" y="44.0" width="2" height="2" fill="#a3a3a3"/>
<rect x="88.0" y="50.0" width="2" height="2" fill="#a3a3a3"/>
<rect x="88.0" y="56.0" width="2" height="2" fill="#a3a3a3"/>
<rect x="101.5" y="32.3" width="24" height="27.5" rx="1.2" fill="#f6f6f6" stroke="#8c8c8c" stroke-width="1"/>
<path d="M102 59.5h23" stroke="#777" stroke-width="1.2"/>
<circle cx="121.7" cy="37.8" r="7" fill="url(#gglow)"/>
<path d="M144.5 34 L150 34 L152 36 L152 57 L147 57 Z" fill="#9a9a9a" stroke="#6a6a6a" stroke-width="0.8"/>
<path d="M150.5 32.3 H173.3 L171 44 H148.5 Z" fill="#fafafa" stroke="#6e6e6e" stroke-width="0.9"/>
<path d="M153 35.5h16M152.5 37.5h16M152 39.5h16" stroke="#b5b5b5" stroke-width="0.9"/>
<path d="M151 43.2 H175.7 L171.8 57.5 H147.2 Z" fill="url(#gfold)" stroke="#3f6fb0" stroke-width="0.9" stroke-linejoin="round"/>
<path d="M187.5 26.0V66.0" stroke="#777" stroke-width="1" stroke-dasharray="1 2"/>
<rect x="203.4" y="33.1" width="24.5" height="25.5" rx="2.8" fill="url(#gfloppy)" stroke="#2630a0" stroke-width="1.1"/>
<rect x="207.0" y="34.4" width="17.8" height="11.4" fill="#f4f7ff"/>
<rect x="208.9" y="48.0" width="12" height="10.7" fill="#e4e4ea"/>
<rect x="211.0" y="50.5" width="2" height="4" fill="#1030d0"/>
<rect x="249.3" y="33.1" width="24.5" height="25.5" rx="2.8" fill="url(#gfloppy)" stroke="#2630a0" stroke-width="1.1"/>
<rect x="252.9" y="34.4" width="17.8" height="11.4" fill="#f4f7ff"/>
<rect x="254.8" y="48.0" width="12" height="10.7" fill="#e4e4ea"/>
<rect x="256.9" y="50.5" width="2" height="4" fill="#1030d0"/>
<g transform="translate(259.5 51.2) rotate(-47)"><path d="M0 0 L5 -2.6 H23 Q25 -2.6 25 0 Q25 2.6 23 2.6 H5 Z" fill="#f5a300" stroke="#b03010" stroke-width="0.9"/><path d="M5 -1 H22" stroke="#ffe060" stroke-width="1.2"/><path d="M0 0 L2.2 -1.1 V1.1 Z" fill="#222"/><rect x="21" y="-2.6" width="4" height="5.2" fill="#e8b0a0" stroke="#b03010" stroke-width="0.8"/></g>
<path d="M289.5 26.0V66.0" stroke="#777" stroke-width="1" stroke-dasharray="1 2"/>
<path d="M307 44 Q306 44 306 45.5 V56.3 Q306 57.7 307.4 57.7 H328.4 Q329.8 57.7 329.8 56.3 V45.5 Q329.8 44 328.4 44 Z" fill="#000"/>
<path d="M318 45 L318.0 37.0" stroke="#000" stroke-width="4.6" stroke-linecap="round"/><circle cx="318.0" cy="37.0" r="3.6" fill="#000"/>
<path d="M318 45 L311.2 39.8" stroke="#000" stroke-width="4.6" stroke-linecap="round"/><circle cx="311.2" cy="39.8" r="3.6" fill="#000"/>
<path d="M318 45 L324.8 39.8" stroke="#000" stroke-width="4.6" stroke-linecap="round"/><circle cx="324.8" cy="39.8" r="3.6" fill="#000"/>
<path d="M309 45.2 Q313 41.5 318 45 Q323 41.5 327 45.2" stroke="#000" stroke-width="4" fill="none"/>
<path d="M318 45 L318.0 37.0" stroke="#f9ad2a" stroke-width="2" stroke-linecap="round"/><circle cx="318.0" cy="37.0" r="2.4" fill="#f9ad2a"/>
<path d="M318 45 L311.2 39.8" stroke="#f9ad2a" stroke-width="2" stroke-linecap="round"/><circle cx="311.2" cy="39.8" r="2.4" fill="#f9ad2a"/>
<path d="M318 45 L324.8 39.8" stroke="#f9ad2a" stroke-width="2" stroke-linecap="round"/><circle cx="324.8" cy="39.8" r="2.4" fill="#f9ad2a"/>
<path d="M310 45.3 Q313.5 42.5 318 45 Q322.5 42.5 326 45.3" stroke="#f9ad2a" stroke-width="1.8" fill="none"/>
<rect x="307.3" y="44.6" width="21.2" height="1.7" fill="#f9ad2a"/>
<text x="318.4" y="57" text-anchor="middle" font-size="13.5" font-weight="bold" fill="#fff" textLength="19" lengthAdjust="spacingAndGlyphs">SVG</text>
<path d="M345.5 26.0V66.0" stroke="#777" stroke-width="1" stroke-dasharray="1 2"/>
<defs><linearGradient id="gprn" x1="0" y1="0" x2="0" y2="1"><stop offset="0" stop-color="#f6f6f6"/><stop offset="0.5" stop-color="#e2e2e2"/><stop offset="1" stop-color="#d2d2d2"/></linearGradient></defs>
<rect x="364.6" y="32" width="18.4" height="13" rx="0.8" fill="#eeeeee" stroke="#a8a8a8" stroke-width="0.9"/>
<path d="M377 36h4M377 39h4" stroke="#c8c8c8" stroke-width="1"/>
<path d="M361 46 Q360.5 43.3 363 43.3 H385 Q387.5 43.3 387.5 46 V55 Q387.5 57.7 385 57.7 H363 Q360.5 57.7 360.5 55 Z" fill="url(#gprn)" stroke="#9a9a9a" stroke-width="0.9"/>
<rect x="362.5" y="49.5" width="23" height="1.5" fill="#c4c4c4"/><circle cx="364.5" cy="49" r="0.7" fill="#777"/>
<ellipse cx="374" cy="58.6" rx="12" ry="1.2" fill="#000" opacity="0.12"/>
<path d="M373.8 44.3 L381.3 51.4" stroke="#8a8a8a" stroke-width="3.2" stroke-linecap="round"/>
<circle cx="369.7" cy="40.2" r="6.4" fill="#f2f2f2" stroke="#c0c0c0" stroke-width="0.8"/>
<circle cx="369.7" cy="40.2" r="5.2" fill="#c4d8f2" stroke="#4a86d0" stroke-width="1.1"/>
<path d="M366 39 a4 3.5 0 0 1 7.5 0" fill="#e6effa" opacity="0.8"/>
<rect x="403.0" y="32.7" width="2" height="2" fill="#a3a3a3"/>
<rect x="403.0" y="38.7" width="2" height="2" fill="#a3a3a3"/>
<rect x="403.0" y="44.7" width="2" height="2" fill="#a3a3a3"/>
<rect x="403.0" y="50.7" width="2" height="2" fill="#a3a3a3"/>
<rect x="403.0" y="56.7" width="2" height="2" fill="#a3a3a3"/>
<path d="M427 57.5 C436 57 442.5 52 442.5 45 C442.5 38 437 33.5 431 33.5 C425 33.5 421 36.5 418.5 39.8 L414.7 37.3 L414.7 51.6 L428 51.7 L423.5 46.3 C425.5 43.5 428.5 40.3 432 40.3 C435.5 40.3 438.5 43 438.5 46.5 C438.5 51.5 433 55.5 427 57.5 Z" fill="url(#ggreen)" stroke="#16802a" stroke-width="1" stroke-linejoin="round"/>
<g transform="translate(904 0) scale(-1 1)" opacity="0.5"><path d="M427 57.5 C436 57 442.5 52 442.5 45 C442.5 38 437 33.5 431 33.5 C425 33.5 421 36.5 418.5 39.8 L414.7 37.3 L414.7 51.6 L428 51.7 L423.5 46.3 C425.5 43.5 428.5 40.3 432 40.3 C435.5 40.3 438.5 43 438.5 46.5 C438.5 51.5 433 55.5 427 57.5 Z" fill="url(#ggreen)" stroke="#16802a" stroke-width="1" stroke-linejoin="round"/></g>
<path d="M502.5 26.0V66.0" stroke="#777" stroke-width="1" stroke-dasharray="1 2"/>
<ellipse cx="531" cy="57.2" rx="11" ry="1.6" fill="#d0d0d0" opacity="0.8"/>
<g transform="translate(523.5 53.5) rotate(-45)" opacity="0.55"><rect x="0" y="-5" width="25" height="10" rx="1" fill="#d03030" stroke="#a02020" stroke-width="0.8"/><rect x="0" y="-5" width="6" height="10" fill="#fff" stroke="#888" stroke-width="0.8"/><rect x="6" y="-1.3" width="19" height="2.6" fill="#fff"/></g>
<path d="M558.5 26.0V66.0" stroke="#777" stroke-width="1" stroke-dasharray="1 2"/>
<g opacity="0.55"><path d="M588.5 31.3 L591 31.5 L591 47 L588.5 50 Z" fill="#f4f4f4" stroke="#777" stroke-width="0.8"/><path d="M590 47 L600.5 38 L600.5 41 L591 50 Z" fill="#f4f4f4" stroke="#777" stroke-width="0.8"/><ellipse cx="578.5" cy="48.2" rx="5.5" ry="3.3" transform="rotate(-15 578.5 48.2)" fill="none" stroke="#d02020" stroke-width="2.2"/><ellipse cx="589.3" cy="54.5" rx="3.2" ry="5.3" fill="none" stroke="#d02020" stroke-width="2.2"/><path d="M583.5 47 L590 49" stroke="#d02020" stroke-width="2.2"/></g>
<path d="M573.5 57.6h6M576.5 54.6v6" stroke="#444" stroke-width="1"/>
<g opacity="0.6"><rect x="618.3" y="30.7" width="21" height="24" rx="1" fill="#f4f4f4" stroke="#aaa" stroke-width="0.8"/><path d="M626.3 36.3 H647.7 V56 L643 61 H626.3 Z" fill="#f4f4f4" stroke="#999" stroke-width="0.9"/><path d="M630 43.5h14M630 46h13M630 48.5h12M630 51h14" stroke="#b8b8b8" stroke-width="0.8"/></g>
<path d="M619.5 56.5h6M622.5 53.5v6" stroke="#444" stroke-width="1"/>
<rect x="665.3" y="32.7" width="26.7" height="27.6" rx="1.5" fill="#c88a22" stroke="#8a5a10" stroke-width="0.8"/>
<path d="M669 34.5 H689.2 V54 L685 58.3 H669 Z" fill="#fdfdfd"/>
<path d="M685 58.3 L689.2 54 H685 Z" fill="#bbb"/>
<path d="M672 40.5h14M672 43.3h14M672 46h12M672 48.8h14M672 51.5h9" stroke="#c3c3c3" stroke-width="0.8"/>
<path d="M673.5 31 H683.5 V33.2 H685.5 V37.3 H671.5 V33.2 H673.5 Z" fill="#a8a8a0" stroke="#666" stroke-width="0.7"/>
<rect x="708.0" y="32.7" width="2" height="2" fill="#a3a3a3"/>
<rect x="708.0" y="38.7" width="2" height="2" fill="#a3a3a3"/>
<rect x="708.0" y="44.7" width="2" height="2" fill="#a3a3a3"/>
<rect x="708.0" y="50.7" width="2" height="2" fill="#a3a3a3"/>
<rect x="708.0" y="56.7" width="2" height="2" fill="#a3a3a3"/>
<path d="M723 56.5 H745" stroke="#f00" stroke-width="1.5"/>
<g transform="translate(724.3 55.3) rotate(-44)"><path d="M0 0 L5.5 -3 H23 Q25.5 -3 25.5 0 Q25.5 3 23 3 H5.5 Z" fill="#d82020" stroke="#6a3a10" stroke-width="0.9"/><path d="M6 -0.9 H21" stroke="#f06030" stroke-width="1.3"/><path d="M0 0 L5.5 -3 V3 Z" fill="#f0d0a0" stroke="#6a3a10" stroke-width="0.6"/><path d="M0 0 L2 -1 V1 Z" fill="#222"/><rect x="18" y="-3" width="2" height="6" fill="#ddd"/></g>
<rect x="765.7" y="35.3" width="28.6" height="22" rx="1.2" fill="#000080" stroke="#1a1a40" stroke-width="1"/>
<path d="M770.5 53.7 L790.3 39 V53.7 Z" fill="none" stroke="#fff" stroke-width="1.3" stroke-dasharray="2.5 1.5"/>
<rect x="805" y="25" width="43" height="43" rx="5" fill="#b7b7b7"/>
<circle cx="826.1" cy="45.8" r="12.8" fill="none" stroke="#000" stroke-width="2.4"/>
<path d="M811.9 59.6 L839.9 32" stroke="#1010ff" stroke-width="1.4"/>
<path d="M854.9 26.0V66.0" stroke="#777" stroke-width="1" stroke-dasharray="1 2"/>
<rect x="862" y="25" width="43" height="43" rx="5" fill="#b7b7b7"/>
<rect x="870.0" y="33.0" width="2" height="2" fill="#000"/>
<rect x="870.0" y="41.0" width="2" height="2" fill="#000"/>
<rect x="870.0" y="49.1" width="2" height="2" fill="#000"/>
<rect x="870.0" y="57.2" width="2" height="2" fill="#000"/>
<rect x="878.0" y="33.0" width="2" height="2" fill="#000"/>
<rect x="878.0" y="41.0" width="2" height="2" fill="#000"/>
<rect x="878.0" y="49.1" width="2" height="2" fill="#000"/>
<rect x="878.0" y="57.2" width="2" height="2" fill="#000"/>
<rect x="886.1" y="33.0" width="2" height="2" fill="#000"/>
<rect x="886.1" y="41.0" width="2" height="2" fill="#000"/>
<rect x="886.1" y="49.1" width="2" height="2" fill="#000"/>
<rect x="886.1" y="57.2" width="2" height="2" fill="#000"/>
<rect x="894.1" y="33.0" width="2" height="2" fill="#000"/>
<rect x="894.1" y="41.0" width="2" height="2" fill="#000"/>
<rect x="894.1" y="49.1" width="2" height="2" fill="#000"/>
<rect x="894.1" y="57.2" width="2" height="2" fill="#000"/>
<path d="M912.1 26.0V66.0" stroke="#777" stroke-width="1" stroke-dasharray="1 2"/>
<g><ellipse cx="939.0" cy="56.5" rx="9" ry="2.2" fill="#000" opacity="0.07"/><path d="M945.5 51.8 L952.0 57.8" stroke="#5e5e5e" stroke-width="4.2" stroke-linecap="round"/><circle cx="936.0" cy="42.0" r="11.3" fill="#f1f1ea" stroke="#b8b8b0" stroke-width="0.9"/><circle cx="936.0" cy="42.0" r="9.6" fill="url(#gblue)" stroke="#c9c9c0" stroke-width="0.6"/><path d="M934.3 36.5h3.4v3.8h3.8v3.4h-3.8v3.8h-3.4v-3.8h-3.8v-3.4h3.8z" transform="translate(0 0)" fill="#fff" stroke="#2a5aa8" stroke-width="0.8"/></g>
<g><ellipse cx="985.0" cy="56.5" rx="9" ry="2.2" fill="#000" opacity="0.07"/><path d="M991.5 51.8 L998.0 57.8" stroke="#5e5e5e" stroke-width="4.2" stroke-linecap="round"/><circle cx="982.0" cy="42.0" r="11.3" fill="#f1f1ea" stroke="#b8b8b0" stroke-width="0.9"/><circle cx="982.0" cy="42.0" r="9.6" fill="url(#gblue)" stroke="#c9c9c0" stroke-width="0.6"/><rect x="976.5" y="40.2" width="11" height="3.6" fill="#fff" stroke="#2a5aa8" stroke-width="0.8"/></g>
<g><ellipse cx="1030.8" cy="56.5" rx="9" ry="2.2" fill="#000" opacity="0.07"/><path d="M1037.3 51.8 L1043.8 57.8" stroke="#5e5e5e" stroke-width="4.2" stroke-linecap="round"/><circle cx="1027.8" cy="42.0" r="11.3" fill="#f1f1ea" stroke="#b8b8b0" stroke-width="0.9"/><circle cx="1027.8" cy="42.0" r="9.6" fill="url(#gblue)" stroke="#c9c9c0" stroke-width="0.6"/><rect x="1024.3" y="38.5" width="7" height="7" fill="#a8c4ea" opacity="0.8"/><path d="M1022.3 40.2v-3.8h3.8M1029.5 36.4h3.8v3.8M1022.3 43.8v3.8h3.8M1029.5 47.6h3.8v-3.8" fill="none" stroke="#fff" stroke-width="2.2"/></g>
<g opacity="0.5"><ellipse cx="1077.1" cy="56.5" rx="9" ry="2.2" fill="#000" opacity="0.07"/><path d="M1083.6 51.8 L1090.1 57.8" stroke="#5e5e5e" stroke-width="4.2" stroke-linecap="round"/><circle cx="1074.1" cy="42.0" r="11.3" fill="#f1f1ea" stroke="#b8b8b0" stroke-width="0.9"/><circle cx="1074.1" cy="42.0" r="9.6" fill="url(#gblue)" stroke="#c9c9c0" stroke-width="0.6"/><rect x="1070.6" y="38.5" width="7" height="7" fill="#a8c4ea" opacity="0.8"/><path d="M1068.6 40.2v-3.8h3.8M1075.8 36.4h3.8v3.8M1068.6 43.8v3.8h3.8M1075.8 47.6h3.8v-3.8" fill="none" stroke="#e03030" stroke-width="2.4"/></g>
<g><ellipse cx="1123.0" cy="56.5" rx="9" ry="2.2" fill="#000" opacity="0.07"/><path d="M1129.5 51.8 L1136.0 57.8" stroke="#5e5e5e" stroke-width="4.2" stroke-linecap="round"/><circle cx="1120.0" cy="42.0" r="11.3" fill="#f1f1ea" stroke="#b8b8b0" stroke-width="0.9"/><circle cx="1120.0" cy="42.0" r="9.6" fill="url(#gblue)" stroke="#c9c9c0" stroke-width="0.6"/><path d="M1112.4 42.0 l6 -5.8 v3.1 h8.6 v5.4 h-8.6 v3.1 z" fill="#fff" stroke="#2a5aa8" stroke-width="0.6"/></g>
<rect x="1154.2" y="30.1" width="27.5" height="18.4" rx="1" fill="#fff" stroke="#6a96d0" stroke-width="1.2"/>
<path d="M1175.4 51.5 L1182 58" stroke="#5e5e5e" stroke-width="4" stroke-linecap="round"/>
<circle cx="1168.4" cy="44.7" r="10" fill="#f1f1ea" stroke="#b8b8b0" stroke-width="0.9"/><circle cx="1168.4" cy="44.7" r="8.2" fill="url(#gblue)"/>
<path d="M1221.5 52 L1229 58.5" stroke="#5e5e5e" stroke-width="4" stroke-linecap="round"/>
<circle cx="1213.1" cy="43.1" r="11.3" fill="#f1f1ea" stroke="#b8b8b0" stroke-width="0.9"/><circle cx="1213.1" cy="43.1" r="9.6" fill="url(#gblue)"/>
<path d="M1213.1 30.3 l-4 4.5 h2.6 v6.6 h-6.6 v-2.6 l-4.5 4.3 l4.5 4.3 v-2.6 h6.6 v6.6 h-2.6 l4 4.5 l4 -4.5 h-2.6 v-6.6 h6.6 v2.6 l4.5 -4.3 l-4.5 -4.3 v2.6 h-6.6 v-6.6 h2.6 z" fill="#fff" stroke="#3a78d0" stroke-width="0.9"/>
<rect x="7.0" y="77.5" width="2" height="2" fill="#a3a3a3"/>
<rect x="7.0" y="83.5" width="2" height="2" fill="#a3a3a3"/>
<rect x="7.0" y="89.5" width="2" height="2" fill="#a3a3a3"/>
<rect x="7.0" y="95.5" width="2" height="2" fill="#a3a3a3"/>
<rect x="15" y="73.3" width="42.5" height="30.7" rx="5" fill="url(#gbtn2)" stroke="#8e8e8e" stroke-width="1.6"/>
<path d="M31.5 79.5 V95.5 L35 92.2 L37.8 97.8 L40 96.8 L37.3 91.3 L42 91.1 Z" fill="#fff" stroke="#222" stroke-width="0.9" stroke-linejoin="round"/>
<path d="M67.5 71.0V106.0" stroke="#777" stroke-width="1" stroke-dasharray="1 2"/>
<rect x="7.0" y="115.4" width="2" height="2" fill="#a3a3a3"/>
<rect x="12.6" y="115.4" width="2" height="2" fill="#a3a3a3"/>
<rect x="18.2" y="115.4" width="2" height="2" fill="#a3a3a3"/>
<rect x="23.8" y="115.4" width="2" height="2" fill="#a3a3a3"/>
<rect x="29.4" y="115.4" width="2" height="2" fill="#a3a3a3"/>
<rect x="35.0" y="115.4" width="2" height="2" fill="#a3a3a3"/>
<rect x="40.6" y="115.4" width="2" height="2" fill="#a3a3a3"/>
<rect x="46.2" y="115.4" width="2" height="2" fill="#a3a3a3"/>
<rect x="51.8" y="115.4" width="2" height="2" fill="#a3a3a3"/>
<rect x="57.4" y="115.4" width="2" height="2" fill="#a3a3a3"/>
<rect x="63.0" y="115.4" width="2" height="2" fill="#a3a3a3"/>
<rect x="1.5" y="122.5" width="34.0" height="34.0" fill="url(#gbtn)" stroke="#8d8d8d" stroke-width="1.1"/>
<rect x="36.5" y="122.5" width="34.0" height="34.0" fill="url(#gbtn)" stroke="#8d8d8d" stroke-width="1.1"/>
<rect x="1.5" y="157.5" width="34.0" height="34.0" fill="url(#gbtn)" stroke="#8d8d8d" stroke-width="1.1"/>
<rect x="36.5" y="157.5" width="34.0" height="34.0" fill="url(#gbtn)" stroke="#8d8d8d" stroke-width="1.1"/>
<rect x="1.5" y="192.5" width="34.0" height="34.0" fill="url(#gbtn)" stroke="#8d8d8d" stroke-width="1.1"/>
<rect x="36.5" y="192.5" width="34.0" height="34.0" fill="url(#gbtn)" stroke="#8d8d8d" stroke-width="1.1"/>
<rect x="1.5" y="227.5" width="34.0" height="34.0" fill="url(#gbtn)" stroke="#8d8d8d" stroke-width="1.1"/>
<rect x="36.5" y="227.5" width="34.0" height="34.0" fill="url(#gbtn)" stroke="#8d8d8d" stroke-width="1.1"/>
<rect x="1.5" y="262.5" width="34.0" height="34.0" fill="url(#gbtn)" stroke="#8d8d8d" stroke-width="1.1"/>
<rect x="1.5" y="305.5" width="34.0" height="34.0" fill="url(#gbtn)" stroke="#8d8d8d" stroke-width="1.1"/>
<rect x="1.5" y="340.5" width="34.0" height="34.0" fill="url(#gbtn)" stroke="#8d8d8d" stroke-width="1.1"/>
<rect x="36.5" y="305.5" width="34.0" height="34.0" fill="url(#gbtn)" stroke="#8d8d8d" stroke-width="1.1"/>
<rect x="1.5" y="383.5" width="34.0" height="34.0" fill="url(#gbtn)" stroke="#8d8d8d" stroke-width="1.1"/>
<rect x="36.5" y="383.5" width="34.0" height="34.0" fill="url(#gbtn)" stroke="#8d8d8d" stroke-width="1.1"/>
<rect x="1.5" y="418.5" width="34.0" height="34.0" fill="url(#gbtn)" stroke="#8d8d8d" stroke-width="1.1"/>
<rect x="36.5" y="418.5" width="34.0" height="34.0" fill="url(#gbtn)" stroke="#8d8d8d" stroke-width="1.1"/>
<rect x="1.5" y="461.5" width="34.0" height="34.0" fill="url(#gbtn)" stroke="#8d8d8d" stroke-width="1.1"/>
<path d="M25.5 152.0 H31.0 V146.5 Z" fill="#000"/>
<path d="M60.5 152.0 H66.0 V146.5 Z" fill="#000"/>
<path d="M25.5 187.0 H31.0 V181.5 Z" fill="#000"/>
<path d="M60.5 187.0 H66.0 V181.5 Z" fill="#000"/>
<path d="M25.5 222.0 H31.0 V216.5 Z" fill="#000"/>
<path d="M60.5 222.0 H66.0 V216.5 Z" fill="#000"/>
<path d="M25.5 257.0 H31.0 V251.5 Z" fill="#000"/>
<path d="M60.5 257.0 H66.0 V251.5 Z" fill="#000"/>
<path d="M25.5 292.0 H31.0 V286.5 Z" fill="#000"/>
<path d="M60.5 335.0 H66.0 V329.5 Z" fill="#000"/>
<path d="M25.5 413.0 H31.0 V407.5 Z" fill="#000"/>
<path d="M60.5 448.0 H66.0 V442.5 Z" fill="#000"/>
<path d="M25.5 491.0 H31.0 V485.5 Z" fill="#000"/>
<path d="M8.2 131.6h6.4M11.4 128.4v6.4M22.2 140.4h6.4M25.4 137.2v6.4M9.1 146.5h6.4M12.3 143.3v6.4" stroke="#000" stroke-width="1.2"/>
<path d="M41.7 144.8 L64.9 133.8" fill="none" stroke="#222" stroke-width="1.2"/>
<path d="M7.7 183 A19.5 19.5 0 0 1 27.2 163.4" fill="none" stroke="#222" stroke-width="1.2"/>
<circle cx="52.5" cy="173.3" r="10.2" fill="none" stroke="#222" stroke-width="1.2"/>
<ellipse cx="18" cy="209" rx="12.8" ry="5.8" transform="rotate(-45 18 209)" fill="none" stroke="#222" stroke-width="1.2"/>
<path d="M42 202 C40 210 45 219 49 218.5 C53 218 56 205 60 201.5 C63.5 198.5 66.5 204 64.5 210.5 C63 213 58 211 55 207 C50 200 44 196 42 202 Z" fill="none" stroke="#222" stroke-width="1.2"/>
<path d="M13.7 238.9 A4.2 4.2 0 0 0 13.7 247.4 H27.4" fill="none" stroke="#222" stroke-width="1.2"/>
<path d="M43.6 232.5 H50.8 L54.4 238.4 L50.8 244.3 H43.6 L40 238.4 Z" fill="none" stroke="#222" stroke-width="1.2"/>
<path d="M56.1 245.7 L60.6 236.5 L65.2 245.7 Z" fill="none" stroke="#222" stroke-width="1.2"/>
<rect x="41.1" y="248.7" width="14.3" height="7.2" fill="none" stroke="#222" stroke-width="1.2"/>
<defs><pattern id="hatch" width="3" height="3" patternUnits="userSpaceOnUse" patternTransform="rotate(45)"><path d="M0 0V3" stroke="#555" stroke-width="0.8"/></pattern></defs>
<path d="M7.4 279.3 L12.4 272.2 H28 V286.5 H7.4 Z" fill="url(#hatch)" stroke="#222" stroke-width="1.2"/>
<circle cx="20.2" cy="279.7" r="2.8" fill="#f0f0f0" stroke="#222" stroke-width="1.1"/>
<text x="18" y="331.7" text-anchor="middle" font-family="Liberation Serif" font-size="27" fill="#000">A</text>
<path d="M43.4 314.2V329.8M61.6 314.2V329.8M45 316.3H60" stroke="#111" stroke-width="1.2"/><path d="M44 316.3l3.2 -1.8v3.6z M61 316.3l-3.2 -1.8v3.6z" fill="#111"/>
<rect x="7.4" y="349" width="21" height="15.6" fill="#fff" stroke="#222" stroke-width="1.6"/>
<path d="M10 362.6 L10 359 L13.6 355.8 L16 358 L19.5 353.8 L25.8 359.6 V362.6 Z" fill="#000"/><circle cx="24.6" cy="352.2" r="1.6" fill="#000"/>
<path d="M5.3 393.2 V412.7 H23.9 Z M9.4 402.6 V408.4 H14.5 Z" fill="#fff" fill-rule="evenodd" stroke="#111" stroke-width="1.1"/>
<g transform="translate(20 398.5) rotate(-135)"><rect x="0" y="-2" width="13" height="4" rx="1.5" fill="#e02020" stroke="#7a2a10" stroke-width="0.6"/><path d="M0 -2 L-3 0 L0 2Z" fill="#e8c090"/></g>
<path d="M26.3 387.5 V390 L23.3 405.5 M26.3 390 L29.4 405.5" fill="none" stroke="#111" stroke-width="1.1"/><circle cx="26.3" cy="390" r="1.3" fill="#111"/>
<rect x="41.2" y="395.6" width="23.1" height="8.4" rx="1.5" fill="#fff" stroke="#444" stroke-width="1"/>
<path d="M44 396v3M46 396v2M48 396v2M50 396v2M52.5 396v3.5M55 396v2M57 396v2M59 396v2M61.3 396v3" stroke="#444" stroke-width="0.7"/>
<rect x="7.5" y="425.7" width="17.1" height="11.9" fill="#f1ecd6" stroke="#999" stroke-width="1"/>
<circle cx="22" cy="437.3" r="7" fill="#f1ecd6" fill-opacity="0.85" stroke="#999" stroke-width="1"/>
<circle cx="7.7" cy="438" r="1.2" fill="#f05050"/>
<path d="M41.6 433.7 L59 424" stroke="#f03030" stroke-width="1.3"/>
<path d="M51.3 428.6 V441.5 L54 439 L56.3 443.8 L58 443 L55.8 438.4 L59.5 438.2 Z" fill="#fff" stroke="#555" stroke-width="0.9" stroke-linejoin="round"/>
<path d="M7.5 472.5 L18.8 466.9 L28.6 471.6 V483.5 L17.6 488.6 L7.5 483.8 Z M7.5 472.5 L17.6 477.4 L28.6 471.6 M17.6 477.4 V488.6" fill="none" stroke="#222" stroke-width="1.2" stroke-linejoin="round"/>
<circle cx="101.7" cy="118.5" r="5.8" fill="#f4f4f4" stroke="#2f4f9a" stroke-width="1.8"/><path d="M101 117.5 L106 122.6" stroke="#e8a020" stroke-width="1.8"/><path d="M98 116h4M100 114v4" stroke="#d06060" stroke-width="0.6"/>
<circle cx="1163.9" cy="118" r="6.8" fill="#6f6f6f"/><path d="M1161 115.1l5.8 5.8M1166.8 115.1l-5.8 5.8" stroke="#eee" stroke-width="1.7"/>
<circle cx="1182.2" cy="118" r="6.8" fill="#6f6f6f"/><path d="M1181.5 116.5v-2.5h4.5v4h-2" fill="none" stroke="#eee" stroke-width="1.1"/><rect x="1178.5" y="116.5" width="5" height="4.5" fill="none" stroke="#eee" stroke-width="1.1"/>
<rect x="1156.0" y="131" width="59.5" height="25" fill="url(#gbtn2)" stroke="#b5b5b5" stroke-width="1"/>
<rect x="1216.0" y="131" width="59.5" height="25" fill="url(#gbtn2)" stroke="#b5b5b5" stroke-width="1"/>
<rect x="1276.0" y="131" width="59.5" height="25" fill="url(#gbtn2)" stroke="#b5b5b5" stroke-width="1"/>
<rect x="1336.0" y="131" width="59.5" height="25" fill="url(#gbtn2)" stroke="#b5b5b5" stroke-width="1"/>
<rect x="1396.0" y="131" width="59.5" height="25" fill="url(#gbtn2)" stroke="#b5b5b5" stroke-width="1"/>
<g transform="translate(1184.8 142.6) scale(0.78)"><path d="M-9.5 0.3 Q0 -9.8 9.5 0.3 Q0 8.4 -9.5 0.3 Z" fill="#fff" stroke="#000" stroke-width="2"/><path d="M-9.8 0 Q0 -10.8 9.8 0" fill="none" stroke="#000" stroke-width="2.6"/><circle cx="0" cy="0" r="4.6" fill="#000"/><circle cx="-1.4" cy="-1.6" r="1.2" fill="#fff"/></g>
<g transform="translate(1244.8 142.6) scale(0.78)"><path d="M-9.5 0.3 Q0 -9.8 9.5 0.3 Q0 8.4 -9.5 0.3 Z" fill="#fff" stroke="#a6a6a6" stroke-width="2"/><path d="M-9.8 0 Q0 -10.8 9.8 0" fill="none" stroke="#a6a6a6" stroke-width="2.6"/><circle cx="0" cy="0" r="4.6" fill="#a6a6a6"/><circle cx="-1.4" cy="-1.6" r="1.2" fill="#fff"/></g>
<path d="M1298.5 142.6h12M1304.5 136.6v12" stroke="#e00000" stroke-width="3.6"/>
<path d="M1358.5 142.6h12" stroke="#e00000" stroke-width="3.2"/>
<g transform="translate(1418.0 149.5) rotate(-45)"><path d="M0 0 L4 -2 H18.0 V2 H4 Z" fill="#f0b030" stroke="#7a5010" stroke-width="0.7"/><path d="M0 0 L1.6 -0.8 V0.8Z" fill="#222"/><rect x="15.0" y="-2" width="3" height="4" fill="#e02020"/></g>
<rect x="1161.5" y="163.1" width="15" height="8" fill="#000" stroke="#222" stroke-width="1"/>
<text x="1183.3" y="172.1" font-size="13" fill="#111">0</text>
<g transform="translate(1422.3 167.4) scale(0.76)"><path d="M-9.5 0.3 Q0 -9.8 9.5 0.3 Q0 8.4 -9.5 0.3 Z" fill="#fff" stroke="#000" stroke-width="2"/><path d="M-9.8 0 Q0 -10.8 9.8 0" fill="none" stroke="#000" stroke-width="2.6"/><circle cx="0" cy="0" r="4.6" fill="#000"/><circle cx="-1.4" cy="-1.6" r="1.2" fill="#fff"/></g>
<path d="M1441.5 166.4 v-3.5 a3.8 3.8 0 0 1 7.6 0 v3.5" fill="none" stroke="#b3b3b3" stroke-width="1.6"/><rect x="1440" y="166.2" width="10.5" height="6.5" rx="0.8" fill="#b3b3b3"/>
<rect x="1161.5" y="183.1" width="15" height="8" fill="#f00" stroke="#222" stroke-width="1"/>
<text x="1183.3" y="192.1" font-size="13" fill="#111">Központ</text>
<g transform="translate(1422.3 187.4) scale(0.76)"><path d="M-9.5 0.3 Q0 -9.8 9.5 0.3 Q0 8.4 -9.5 0.3 Z" fill="#fff" stroke="#000" stroke-width="2"/><path d="M-9.8 0 Q0 -10.8 9.8 0" fill="none" stroke="#000" stroke-width="2.6"/><circle cx="0" cy="0" r="4.6" fill="#000"/><circle cx="-1.4" cy="-1.6" r="1.2" fill="#fff"/></g>
<path d="M1441.5 186.4 v-3.5 a3.8 3.8 0 0 1 7.6 0 v3.5" fill="none" stroke="#b3b3b3" stroke-width="1.6"/><rect x="1440" y="186.2" width="10.5" height="6.5" rx="0.8" fill="#b3b3b3"/>
<rect x="1161.5" y="203.1" width="15" height="8" fill="#000" stroke="#222" stroke-width="1"/>
<text x="1183.3" y="212.1" font-size="13" fill="#111">Szellőzés</text>
<g transform="translate(1422.3 207.4) scale(0.76)"><path d="M-9.5 0.3 Q0 -9.8 9.5 0.3 Q0 8.4 -9.5 0.3 Z" fill="#fff" stroke="#000" stroke-width="2"/><path d="M-9.8 0 Q0 -10.8 9.8 0" fill="none" stroke="#000" stroke-width="2.6"/><circle cx="0" cy="0" r="4.6" fill="#000"/><circle cx="-1.4" cy="-1.6" r="1.2" fill="#fff"/></g>
<path d="M1441.5 206.4 v-3.5 a3.8 3.8 0 0 1 7.6 0 v3.5" fill="none" stroke="#b3b3b3" stroke-width="1.6"/><rect x="1440" y="206.2" width="10.5" height="6.5" rx="0.8" fill="#b3b3b3"/>
<rect x="1161.5" y="223.1" width="15" height="8" fill="#a0a0a8" stroke="#222" stroke-width="1"/>
<text x="1183.3" y="232.1" font-size="13" fill="#111">Vissza</text>
<g transform="translate(1422.3 227.4) scale(0.76)"><path d="M-9.5 0.3 Q0 -9.8 9.5 0.3 Q0 8.4 -9.5 0.3 Z" fill="#fff" stroke="#000" stroke-width="2"/><path d="M-9.8 0 Q0 -10.8 9.8 0" fill="none" stroke="#000" stroke-width="2.6"/><circle cx="0" cy="0" r="4.6" fill="#000"/><circle cx="-1.4" cy="-1.6" r="1.2" fill="#fff"/></g>
<path d="M1441.5 226.4 v-3.5 a3.8 3.8 0 0 1 7.6 0 v3.5" fill="none" stroke="#b3b3b3" stroke-width="1.6"/><rect x="1440" y="226.2" width="10.5" height="6.5" rx="0.8" fill="#b3b3b3"/>
<g transform="translate(1395.5 233.5) rotate(-45)"><path d="M0 0 L4 -2 H15.0 V2 H4 Z" fill="#f0b030" stroke="#7a5010" stroke-width="0.7"/><path d="M0 0 L1.6 -0.8 V0.8Z" fill="#222"/><rect x="12.0" y="-2" width="3" height="4" fill="#e02020"/></g>
<rect x="1462.0" y="115.4" width="2" height="2" fill="#a3a3a3"/>
<rect x="1467.5" y="115.4" width="2" height="2" fill="#a3a3a3"/>
<rect x="1473.0" y="115.4" width="2" height="2" fill="#a3a3a3"/>
<rect x="1478.5" y="115.4" width="2" height="2" fill="#a3a3a3"/>
<rect x="1484.0" y="115.4" width="2" height="2" fill="#a3a3a3"/>
<rect x="1489.5" y="115.4" width="2" height="2" fill="#a3a3a3"/>
<rect x="1456" y="120" width="42.6" height="43" rx="6" fill="#b7b7b7"/>
<rect x="1456" y="416.3" width="42.6" height="42" rx="6" fill="#b7b7b7"/>
<rect x="1463.5" y="127.7" width="27" height="27" fill="#fff" stroke="#111" stroke-width="1"/>
<rect x="1463.5" y="127.7" width="27" height="4" fill="#000"/>
<rect x="1464.5" y="128.2" width="3" height="3" fill="#fff"/>
<rect x="1463.5" y="174.7" width="27" height="27" fill="#fff" stroke="#111" stroke-width="1"/>
<rect x="1463.5" y="174.7" width="27" height="4" fill="#000"/>
<rect x="1464.5" y="175.2" width="3" height="3" fill="#fff"/>
<rect x="1463.5" y="220.7" width="27" height="27" fill="#fff" stroke="#111" stroke-width="1"/>
<rect x="1463.5" y="220.7" width="27" height="4" fill="#000"/>
<rect x="1464.5" y="221.2" width="3" height="3" fill="#fff"/>
<rect x="1463.5" y="276.4" width="27" height="27" fill="#fff" stroke="#111" stroke-width="1"/>
<rect x="1463.5" y="276.4" width="27" height="4" fill="#000"/>
<rect x="1464.5" y="276.9" width="3" height="3" fill="#fff"/>
<rect x="1463.5" y="322.1" width="27" height="27" fill="#fff" stroke="#111" stroke-width="1"/>
<rect x="1463.5" y="322.1" width="27" height="4" fill="#000"/>
<rect x="1464.5" y="322.6" width="3" height="3" fill="#fff"/>
<rect x="1463.5" y="368.2" width="27" height="27" fill="#fff" stroke="#111" stroke-width="1"/>
<rect x="1463.5" y="368.2" width="27" height="4" fill="#000"/>
<rect x="1464.5" y="368.7" width="3" height="3" fill="#fff"/>
<rect x="1463.5" y="423.7" width="27" height="27" fill="#fff" stroke="#111" stroke-width="1"/>
<rect x="1463.5" y="423.7" width="27" height="4" fill="#000"/>
<rect x="1464.5" y="424.2" width="3" height="3" fill="#fff"/>
<rect x="1463.5" y="469.9" width="27" height="27" fill="#fff" stroke="#111" stroke-width="1"/>
<rect x="1463.5" y="469.9" width="27" height="4" fill="#000"/>
<rect x="1464.5" y="470.4" width="3" height="3" fill="#fff"/>
<rect x="1458.0" y="260.2" width="2" height="2" fill="#a3a3a3"/>
<rect x="1463.0" y="260.2" width="2" height="2" fill="#a3a3a3"/>
<rect x="1468.0" y="260.2" width="2" height="2" fill="#a3a3a3"/>
<rect x="1473.0" y="260.2" width="2" height="2" fill="#a3a3a3"/>
<rect x="1478.0" y="260.2" width="2" height="2" fill="#a3a3a3"/>
<rect x="1483.0" y="260.2" width="2" height="2" fill="#a3a3a3"/>
<rect x="1488.0" y="260.2" width="2" height="2" fill="#a3a3a3"/>
<rect x="1493.0" y="260.2" width="2" height="2" fill="#a3a3a3"/>
<rect x="1458.0" y="406.4" width="2" height="2" fill="#a3a3a3"/>
<rect x="1463.0" y="406.4" width="2" height="2" fill="#a3a3a3"/>
<rect x="1468.0" y="406.4" width="2" height="2" fill="#a3a3a3"/>
<rect x="1473.0" y="406.4" width="2" height="2" fill="#a3a3a3"/>
<rect x="1478.0" y="406.4" width="2" height="2" fill="#a3a3a3"/>
<rect x="1483.0" y="406.4" width="2" height="2" fill="#a3a3a3"/>
<rect x="1488.0" y="406.4" width="2" height="2" fill="#a3a3a3"/>
<rect x="1493.0" y="406.4" width="2" height="2" fill="#a3a3a3"/>
<path d="M1470 139.2 l7 -3 v13 l-7 3 z" fill="#aaa" stroke="#555" stroke-width="0.8"/><path d="M1473.5 138.2 l9.5 -4 v13 l-9.5 4 z" fill="#fff" stroke="#555" stroke-width="0.8"/><path d="M1476 146.2 l4 -7 l1 6 z" fill="none" stroke="#e03030" stroke-width="0.9"/>
<rect x="1470" y="184.2" width="10" height="8" fill="#f1e8c0" stroke="#777" stroke-width="0.8"/><circle cx="1480.5" cy="192.2" r="4.3" fill="#f1e8c0" fill-opacity="0.9" stroke="#777" stroke-width="0.8"/>
<rect x="1468.5" y="229.2" width="17" height="10.5" rx="2" fill="#f6f6f6" stroke="#b8c8e0" stroke-width="0.9"/>
<rect x="1468" y="284.9" width="3" height="3" fill="#000"/><rect x="1473" y="285.1" width="13" height="2.6" fill="none" stroke="#444" stroke-width="0.7"/>
<rect x="1468" y="290.4" width="3" height="3" fill="#000"/><rect x="1473" y="290.6" width="13" height="2.6" fill="none" stroke="#444" stroke-width="0.7"/>
<rect x="1468" y="295.9" width="3" height="3" fill="#000"/><rect x="1473" y="296.1" width="13" height="2.6" fill="none" stroke="#444" stroke-width="0.7"/>
<path d="M1469 330.6 h16 l-6 7 v6 l-4 2 v-8 z" fill="#c8c8c8" stroke="#666" stroke-width="0.8"/>
<path d="M1468 378.7 h10 l4 3 v4 l-4 3 h-10 z" fill="#ddd" stroke="#555" stroke-width="0.8"/><path d="M1466 383.7 h22" stroke="#f04040" stroke-width="0.7" stroke-dasharray="2 1"/>
<g font-size="3" fill="#333"><text x="1468" y="433.2">Command: lin</text><text x="1468" y="436.7">Command: line</text><text x="1468" y="440.2">Command: circ</text><text x="1468" y="443.7">Command: circle</text></g><path d="M1464 446.2h26" stroke="#333" stroke-width="0.6"/>
<rect x="1470" y="477.4" width="13" height="15" rx="1" fill="#c88a22" stroke="#8a5a10" stroke-width="0.6"/><rect x="1472" y="479.9" width="9" height="11.5" fill="#fff"/><rect x="1473.5" y="476.4" width="6" height="3" fill="#999"/>
<rect x="1132.5" y="779" width="15" height="11" fill="#fff" stroke="#222" stroke-width="1.2"/><rect x="1132.5" y="779" width="15" height="2.6" fill="#222"/>
<path d="M717.5 817 C717.5 808 720 806.2 726 806.2 C732 806.2 734.6 808 734.6 817 V826 C734.6 833 731 835.6 726 835.6 C721 835.6 717.5 833 717.5 826 Z" fill="#fff" stroke="#333" stroke-width="1"/>
<path d="M717.6 818.2 H734.5 M726 806.3 V818.2" stroke="#333" stroke-width="1"/><rect x="724.5" y="808.5" width="3" height="6.5" rx="1.5" fill="#fff" stroke="#333" stroke-width="0.8"/>
</svg>
</body></html>
